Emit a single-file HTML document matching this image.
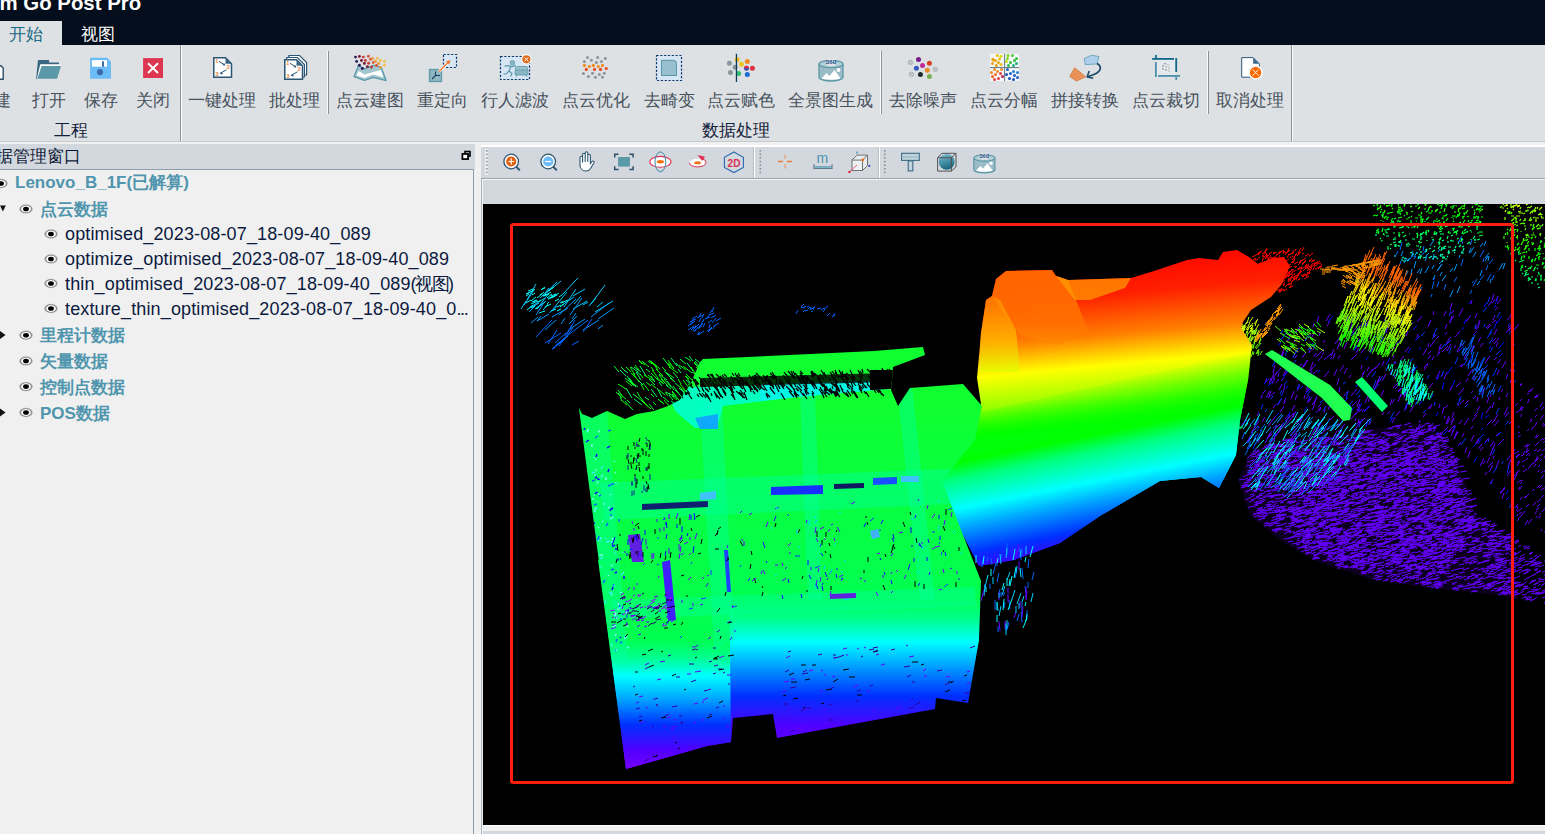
<!DOCTYPE html>
<html><head><meta charset="utf-8">
<style>
*{box-sizing:border-box;margin:0;padding:0}
html,body{width:1545px;height:834px;overflow:hidden;background:#f0f0f0;font-family:"Liberation Sans",sans-serif;position:relative}
.abs{position:absolute}
#title{left:0;top:0;width:1545px;height:45px;background:#050e1c}
#ttxt{left:-0.5px;top:-7.6px;color:#fff;font-weight:bold;font-size:20.4px;white-space:nowrap}
#tab1{left:0;top:21px;width:62px;height:24px;background:#dee1e4}
.tabt{font-size:17px;white-space:nowrap;line-height:20px}
#ribbon{left:0;top:45px;width:1545px;height:96px;background:#dee1e4}
.lbl{position:absolute;font-size:17px;color:#47525d;white-space:nowrap;line-height:20px;top:91px;transform:translateX(-50%)}
.glbl{position:absolute;font-size:17px;color:#13223a;white-space:nowrap;line-height:20px;top:121px;transform:translateX(-50%)}
.sep{position:absolute;width:1px;background:#8f9294;box-shadow:-1px 0 0 #fafafa}
.ico{position:absolute;width:32px;height:32px;top:52px}
#panelhdr{left:0;top:144px;width:475px;height:25px;background:#d3d8df}
#tree{left:0;top:169px;width:474px;height:665px;background:#f0f0f0;border-top:1px solid #8d9eab;border-right:1px solid #8d9eab}
.row{position:absolute;white-space:nowrap;line-height:20px}
.bold{font-weight:bold;color:#4f95ad;font-size:17px}
.child{color:#0b1a3e;font-size:18px;letter-spacing:0.14px}
.eye{position:absolute;width:14px;height:10px}
#vtool{left:481px;top:145px;width:1064px;height:34px;background:#d3d8df;border-top:2px solid #fff;border-bottom:1px solid #9aa4ac}
#vstrip{left:481px;top:179px;width:1064px;height:25px;background:#d3d8df;border-left:2px solid #aab5bd;border-top:1px solid #f5f6f7}
#view{left:483px;top:204px;width:1062px;height:621px;background:#000;overflow:hidden}
</style></head><body>
<div id="title" class="abs"></div>
<div id="ttxt" class="abs">m Go Post Pro</div>
<div id="tab1" class="abs"></div>
<div class="abs tabt" style="left:9px;top:25px;color:#1c6a87">开始</div>
<div class="abs tabt" style="left:81px;top:25px;color:#fff">视图</div>
<div id="ribbon" class="abs"></div>
<div class="abs" style="left:0;top:141px;width:1545px;height:1px;background:#c5cacf"></div>
<!-- labels -->
<div class="lbl" style="left:-6px">新建</div>
<div class="lbl" style="left:49px">打开</div>
<div class="lbl" style="left:101px">保存</div>
<div class="lbl" style="left:153px">关闭</div>
<div class="glbl" style="left:71px">工程</div>
<div class="lbl" style="left:222px">一键处理</div>
<div class="lbl" style="left:294px">批处理</div>
<div class="lbl" style="left:370px">点云建图</div>
<div class="lbl" style="left:442px">重定向</div>
<div class="lbl" style="left:515px">行人滤波</div>
<div class="lbl" style="left:596px">点云优化</div>
<div class="lbl" style="left:669px">去畸变</div>
<div class="lbl" style="left:741px">点云赋色</div>
<div class="lbl" style="left:830px">全景图生成</div>
<div class="glbl" style="left:736px">数据处理</div>
<div class="lbl" style="left:923px">去除噪声</div>
<div class="lbl" style="left:1004px">点云分幅</div>
<div class="lbl" style="left:1085px">拼接转换</div>
<div class="lbl" style="left:1166px">点云裁切</div>
<div class="lbl" style="left:1250px">取消处理</div>
<div class="sep" style="left:179.5px;top:45px;height:96px;box-shadow:1px 0 0 #fafafa"></div>
<div class="sep" style="left:328px;top:51px;height:63px"></div>
<div class="sep" style="left:881px;top:51px;height:63px"></div>
<div class="sep" style="left:1208px;top:51px;height:63px"></div>
<div class="sep" style="left:1291px;top:45px;height:96px;box-shadow:1px 0 0 #fafafa"></div>
<!-- ICONS --><!-- /ICONS -->
<!-- panel -->
<div id="panelhdr" class="abs"></div>
<div class="abs" style="left:-21.5px;top:147px;font-size:17px;line-height:20px;color:#0f1a38;white-space:nowrap">数据管理窗口</div>
<div id="tree" class="abs"></div>
<div class="row bold" style="left:15px;top:173px">Lenovo_B_1F(已解算)</div>
<div class="row bold" style="left:40px;top:200px">点云数据</div>
<div class="row child" style="left:65px;top:224px">optimised_2023-08-07_18-09-40_089</div>
<div class="row child" style="left:65px;top:249px">optimize_optimised_2023-08-07_18-09-40_089</div>
<div class="row child" style="left:65px;top:274px">thin_optimised_2023-08-07_18-09-40_089<span style="letter-spacing:-1.5px">(视图)</span></div>
<div class="row child" style="left:65px;top:299px">texture_thin_optimised_2023-08-07_18-09-40_0<span style="letter-spacing:-1.4px">...</span></div>
<div class="row bold" style="left:40px;top:326px">里程计数据</div>
<div class="row bold" style="left:40px;top:352px">矢量数据</div>
<div class="row bold" style="left:40px;top:378px">控制点数据</div>
<div class="row bold" style="left:40px;top:404px">POS数据</div>
<!-- view -->
<div id="vtool" class="abs"></div>
<div id="vstrip" class="abs"></div>
<div id="view" class="abs">
<!-- CLOUD --><svg width="1062" height="621" viewBox="483 204 1062 621" style="position:absolute;left:0;top:0"><defs>
<linearGradient id="g1" gradientUnits="userSpaceOnUse" x1="0" y1="400" x2="0" y2="770">
<stop offset="0" stop-color="#10ff30"/><stop offset="0.54" stop-color="#00ff50"/>
<stop offset="0.595" stop-color="#00ff90"/><stop offset="0.654" stop-color="#00ffff"/>
<stop offset="0.719" stop-color="#00a0ff"/><stop offset="0.8" stop-color="#0030ff"/>
<stop offset="0.881" stop-color="#5000ff"/><stop offset="1" stop-color="#7800ff"/>
</linearGradient>
<linearGradient id="g1L" gradientUnits="userSpaceOnUse" x1="0" y1="400" x2="0" y2="770">
<stop offset="0" stop-color="#10ff30"/><stop offset="0.649" stop-color="#00ff50"/>
<stop offset="0.697" stop-color="#00ff90"/><stop offset="0.746" stop-color="#00ffff"/>
<stop offset="0.811" stop-color="#00a0ff"/><stop offset="0.878" stop-color="#0030ff"/>
<stop offset="0.946" stop-color="#5000ff"/><stop offset="1" stop-color="#7800ff"/>
</linearGradient>
<linearGradient id="g2" gradientUnits="userSpaceOnUse" x1="1100" y1="250" x2="1128" y2="565">
<stop offset="0" stop-color="#ff0000"/><stop offset="0.143" stop-color="#ff2000"/>
<stop offset="0.27" stop-color="#ff8000"/><stop offset="0.365" stop-color="#ffff00"/>
<stop offset="0.46" stop-color="#a0ff00"/><stop offset="0.55" stop-color="#00ff00"/>
<stop offset="0.635" stop-color="#00ff80"/><stop offset="0.727" stop-color="#00ffff"/>
<stop offset="0.797" stop-color="#00a0ff"/><stop offset="0.879" stop-color="#0030ff"/>
<stop offset="0.94" stop-color="#4000ff"/><stop offset="1" stop-color="#7000ff"/>
</linearGradient>
<linearGradient id="groof" gradientUnits="userSpaceOnUse" x1="0" y1="270" x2="0" y2="345">
<stop offset="0" stop-color="#ff6e00"/><stop offset="0.7" stop-color="#ff7000"/><stop offset="1" stop-color="#ff8a00"/>
</linearGradient>
<linearGradient id="gface" gradientUnits="userSpaceOnUse" x1="0" y1="296" x2="0" y2="372">
<stop offset="0" stop-color="#ff9000"/><stop offset="0.6" stop-color="#ffc000"/><stop offset="1" stop-color="#e0ff00"/>
</linearGradient>
<linearGradient id="g2b" gradientUnits="userSpaceOnUse" x1="1100" y1="250" x2="1163" y2="565">
<stop offset="0.40" stop-color="#00ff00" stop-opacity="0"/><stop offset="0.56" stop-color="#00ff00"/>
<stop offset="0.614" stop-color="#00ff80"/><stop offset="0.703" stop-color="#00ffff"/>
<stop offset="0.766" stop-color="#00a0ff"/><stop offset="0.846" stop-color="#0030ff"/>
<stop offset="0.904" stop-color="#4000ff"/><stop offset="0.962" stop-color="#7000ff"/>
</linearGradient>
</defs>
<path d="M1406 213l1 -1M1442 226l1 -1M1421 221l1 -3M1384 218l3 -2M1387 214l2 -1M1436 219l2 -0M1446 207l1 -3M1439 213l2 -1M1463 213l4 -0M1373 206l2 -1M1411 217l1 -1M1460 209l2 -3M1444 224l1 -1M1479 210l1 -0M1400 212l3 -2M1399 213l0 -3M1421 224l2 -3M1415 224l1 -0M1468 227l3 -2M1453 222l1 -1M1475 205l3 -2M1420 220l4 -1M1420 222l2 -0M1436 225l1 -1M1389 213l4 -1M1467 217l2 -1M1398 210l2 -1M1458 217l0 -3M1384 219l2 -3M1437 205l2 -1M1462 217l3 -1M1479 212l1 -0M1412 226l1 -1M1456 206l1 -0M1476 205l2 -1M1377 206l1 -2M1400 209l2 -0M1398 218l4 -1M1411 212l2 -1M1443 216l2 -0M1377 210l2 -2M1380 213l1 -2M1452 216l4 -0M1394 227l1 -2M1455 206l0 -1M1441 209l1 -3M1455 213l0 -2M1427 223l2 -0M1435 225l1 -2M1453 207l0 -2M1444 222l1 -0M1452 218l0 -1M1415 218l3 -0M1404 207l1 -3M1478 217l0 -1M1386 206l3 -0M1417 205l2 -1M1439 206l2 -1M1389 204l3 -1M1463 219l0 -2M1373 216l3 -1M1391 221l2 -3M1387 218l2 -1M1478 210l3 -2M1418 215l3 -0M1444 225l0 -4M1443 219l1 -0M1441 206l2 -2M1384 205l1 -2M1391 207l1 -3M1452 209l2 -3M1474 219l0 -3M1437 222l3 -2M1459 216l1 -4M1428 213l4 -0M1481 217l2 -0M1464 207l1 -3M1480 207l3 -1M1446 221l2 -3M1406 219l2 -0M1397 212l1 -1M1392 206l0 -2M1440 212l1 -0M1432 212l0 -2M1387 220l0 -2M1445 216l1 -1M1425 205l0 -2M1400 215l1 -2M1428 211l1 -3M1478 217l1 -0M1401 211l1 -1M1475 218l2 -2M1476 221l3 -1M1430 213l1 -0" stroke="#00ff00" stroke-width="1.2" fill="none" opacity="1.0"/>
<path d="M1411 207l1 -1M1378 209l3 -2M1479 207l0 -2M1480 211l3 -2M1425 206l2 -3M1445 205l1 -1M1377 208l1 -0M1376 204l1 -0M1424 209l2 -0M1384 213l1 -3M1391 204l0 -1M1458 210l1 -1M1444 212l1 -4M1380 207l1 -2M1398 205l1 -2M1410 204l2 -1M1415 206l2 -0M1398 208l3 -1M1435 212l3 -3M1464 204l1 -3M1474 211l1 -1M1392 209l1 -1M1404 205l2 -2M1401 204l1 -3M1458 209l3 -1M1476 210l2 -2M1421 214l1 -1M1418 209l2 -2M1386 206l4 -1M1381 210l1 -1M1435 211l3 -2M1407 215l0 -3M1410 207l2 -1M1458 212l1 -3M1431 207l1 -0M1462 209l3 -1M1398 206l1 -0M1472 208l1 -2M1386 204l1 -2M1462 206l3 -0M1450 207l2 -0M1466 213l2 -3M1429 208l2 -2" stroke="#33ff00" stroke-width="1.2" fill="none" opacity="1.0"/>
<path d="M1395 240l0 -3M1420 236l1 -3M1401 228l3 -2M1467 244l2 -1M1477 230l0 -4M1426 235l1 -1M1451 236l2 -1M1456 233l2 -3M1420 240l2 -2M1421 235l3 -3M1477 227l3 -3M1440 234l4 -0M1468 243l2 -1M1436 235l1 -3M1470 244l1 -1M1439 241l1 -0M1400 243l1 -3M1428 231l1 -1M1471 232l1 -0M1420 248l1 -2M1399 242l2 -1M1399 237l1 -3M1443 248l2 -2M1399 243l0 -2M1408 228l1 -1M1401 224l0 -1M1399 247l0 -2M1477 240l3 -1M1457 239l2 -1M1461 242l0 -1M1432 240l2 -1M1418 242l2 -1M1439 232l3 -1M1383 235l1 -2M1441 227l1 -2M1395 242l1 -0M1433 224l1 -2M1427 241l0 -1M1396 247l0 -3M1461 241l1 -3M1458 244l1 -3M1415 227l0 -1M1393 227l2 -0M1450 241l2 -1M1388 249l0 -3M1434 235l1 -2M1447 227l0 -1M1395 247l0 -3M1460 227l1 -0M1461 241l2 -2M1464 231l2 -2M1439 240l2 -3M1466 232l2 -0M1419 243l3 -1M1447 239l1 -3M1438 243l1 -1M1390 245l2 -1M1382 241l0 -1M1409 234l1 -0M1467 232l1 -1M1445 227l1 -1M1386 230l4 -1M1425 222l0 -1M1393 225l0 -4M1390 249l1 -1M1380 239l1 -1M1439 245l1 -3M1416 246l3 -0M1412 239l3 -0M1406 245l3 -2M1435 234l1 -1M1441 251l1 -4M1474 240l2 -1" stroke="#00ff66" stroke-width="1.2" fill="none" opacity="1.0"/>
<path d="M1383 222l0 -1M1434 234l1 -3M1468 222l1 -2M1459 227l1 -1M1456 235l1 -2M1454 232l3 -1M1414 227l0 -3M1394 219l2 -1M1399 228l4 -1M1399 236l0 -4M1384 230l2 -0M1388 229l1 -1M1384 235l1 -0M1376 216l2 -1M1402 233l2 -1M1480 224l1 -3M1453 219l1 -0M1421 213l1 -1M1479 236l4 -1M1393 233l2 -0M1385 225l3 -1M1440 240l1 -2M1425 226l2 -2M1462 234l1 -3M1471 221l2 -1M1391 226l0 -4M1416 234l2 -1M1470 231l1 -1M1378 234l1 -2M1453 233l4 -1M1477 233l2 -0M1474 223l4 -1M1393 225l1 -3M1376 231l3 -2M1477 226l2 -1M1474 215l1 -3M1420 218l2 -2M1403 237l3 -2M1407 227l0 -3M1383 215l0 -3M1391 222l3 -1M1462 228l0 -2M1426 212l2 -1M1382 232l1 -4M1479 232l4 -0M1395 227l1 -3M1376 233l3 -2M1386 233l0 -2M1439 229l3 -3M1382 225l3 -1M1397 213l3 -0M1458 227l1 -0M1453 231l1 -2M1382 217l2 -0M1469 223l3 -1M1404 216l1 -1M1382 216l1 -0M1411 223l0 -3M1448 233l3 -0M1452 229l3 -1M1448 233l1 -2M1438 227l1 -3M1440 228l2 -3M1463 234l3 -2M1417 228l1 -2M1478 224l2 -3M1422 221l1 -1M1397 222l2 -2M1457 224l4 -1M1464 215l1 -2M1386 233l2 -0M1425 233l2 -3M1412 228l0 -1M1440 224l0 -2M1426 220l3 -3M1459 223l2 -1M1446 216l1 -2M1381 215l3 -0M1443 225l1 -3M1399 222l2 -1M1381 241l1 -0M1433 221l4 -0M1463 223l2 -3M1417 238l1 -4M1456 218l2 -3M1428 232l1 -1M1477 219l2 -2M1440 230l3 -2M1381 221l0 -1M1425 234l2 -2M1414 228l1 -2M1408 218l2 -1M1442 219l1 -2M1416 221l1 -0" stroke="#00ff32" stroke-width="1.2" fill="none" opacity="1.0"/>
<path d="M1393 243l2 -1M1386 236l3 -0M1462 247l2 -1M1421 238l0 -2M1445 249l0 -1M1406 246l3 -0M1475 241l0 -1M1451 241l3 -0M1440 247l0 -1M1426 252l1 -3M1459 247l2 -2M1395 257l0 -2M1420 259l1 -4M1442 255l1 -1M1445 259l2 -0M1462 253l0 -1M1417 254l0 -2M1442 257l3 -0M1471 240l0 -1M1398 246l0 -1M1452 251l4 -1M1388 250l0 -1M1475 243l0 -1M1432 238l0 -1M1393 240l1 -1M1448 253l1 -2M1419 250l1 -1M1448 243l0 -2M1448 254l2 -2M1448 247l3 -0M1409 245l1 -1M1425 250l2 -1M1412 255l2 -1M1455 248l1 -2M1444 247l2 -1M1434 247l1 -1M1448 253l1 -3M1405 240l2 -0M1410 253l2 -1M1438 249l2 -3M1419 255l1 -1M1429 249l2 -1M1432 252l3 -2M1473 239l2 -3M1442 258l3 -0M1434 257l1 -1M1442 241l2 -1M1463 251l1 -3M1376 236l0 -2M1419 257l3 -1" stroke="#00ff99" stroke-width="1.2" fill="none" opacity="1.0"/>
<path d="M1421 253l0 -2M1442 262l1 -2M1433 259l1 -2M1440 256l1 -2M1429 258l3 -2M1423 258l3 -1M1425 252l2 -1M1402 258l2 -1M1441 257l0 -3M1401 260l2 -0M1411 256l2 -0M1454 253l1 -1M1412 254l1 -1M1404 259l2 -1M1432 259l2 -0M1462 252l0 -1M1443 249l2 -1M1441 249l3 -0M1436 258l0 -2M1447 257l1 -1M1454 250l1 -1M1403 261l3 -0M1461 253l3 -0M1437 259l1 -1" stroke="#00ffcb" stroke-width="1.2" fill="none" opacity="1.0"/>
<path d="M1407 261l2 -2M1418 259l1 -3" stroke="#00ffff" stroke-width="1.2" fill="none" opacity="1.0"/>
<path d="M1538 258l2 -2M1535 251l0 -3M1543 264l1 -1M1537 249l4 -1M1529 251l0 -3M1508 250l1 -3M1540 255l0 -2M1517 239l1 -0M1507 235l1 -2M1538 254l1 -2M1505 247l1 -1M1529 259l0 -3M1543 254l0 -1M1543 268l3 -0M1531 239l1 -1M1535 260l1 -2M1510 239l3 -1M1539 260l0 -2M1534 261l2 -2M1515 248l1 -1M1526 253l1 -2M1544 244l2 -1M1544 248l1 -2M1543 259l2 -1M1536 265l3 -0M1517 238l1 -1M1524 258l1 -2M1521 267l2 -2M1517 250l3 -3M1540 243l2 -2M1536 256l3 -2" stroke="#00ff00" stroke-width="1.2" fill="none" opacity="1.0"/>
<path d="M1532 245l2 -2M1525 247l4 -2M1526 248l0 -3M1517 232l1 -3M1531 238l2 -1M1522 243l2 -3M1540 241l2 -0M1511 238l1 -2M1539 247l1 -2M1535 238l1 -2M1532 229l3 -2M1531 235l4 -0M1509 231l3 -1M1511 225l2 -2M1516 230l0 -1M1532 243l2 -0M1514 236l1 -2M1507 230l1 -1M1523 241l2 -1M1531 243l3 -0M1526 241l2 -2M1522 253l3 -1M1523 256l2 -0M1510 230l1 -2M1507 248l1 -3M1526 238l1 -1M1525 240l2 -0M1544 246l1 -1M1520 254l1 -1M1514 231l1 -2M1539 234l2 -0M1533 227l1 -3M1521 232l0 -1M1537 229l2 -1M1527 244l2 -3M1538 249l2 -3M1524 224l1 -1M1524 250l2 -3M1505 235l1 -2M1504 239l0 -3M1517 250l2 -1M1528 237l2 -0M1532 230l2 -2M1521 245l1 -2M1507 233l1 -1M1512 227l2 -1M1525 249l1 -1M1517 245l2 -2M1514 251l2 -2M1513 223l0 -1M1544 238l2 -0" stroke="#33ff00" stroke-width="1.2" fill="none" opacity="1.0"/>
<path d="M1514 225l2 -1M1533 218l2 -1M1541 215l0 -1M1520 220l1 -1M1526 212l0 -2M1500 208l2 -2M1523 221l3 -1M1516 219l1 -1M1526 235l2 -1M1516 220l0 -2M1516 226l2 -1M1538 215l3 -2M1523 224l1 -1M1526 236l3 -1M1531 226l0 -2M1508 214l0 -3M1511 214l1 -2M1534 212l1 -2M1537 229l4 -1M1542 215l0 -1M1536 227l3 -3M1524 226l2 -0M1516 219l1 -0M1511 216l3 -0M1513 220l2 -3M1507 243l0 -1M1520 221l0 -1M1525 235l1 -0M1539 226l3 -0M1503 225l1 -1M1511 221l3 -2M1525 230l1 -2M1527 211l1 -1M1512 228l1 -1M1526 211l3 -1M1540 228l1 -0M1529 221l2 -4M1533 233l1 -0M1520 224l3 -1M1540 236l1 -3M1531 212l3 -2M1523 214l2 -1M1516 223l0 -4M1523 240l1 -2M1542 226l1 -2M1509 214l1 -3M1512 233l3 -1M1516 238l2 -3M1539 210l1 -1M1509 213l3 -0M1507 209l1 -1M1513 224l1 -2" stroke="#65ff00" stroke-width="1.2" fill="none" opacity="1.0"/>
<path d="M1526 205l3 -2M1513 210l1 -1M1517 207l3 -1M1513 208l1 -3M1505 206l3 -1M1515 206l3 -3M1513 206l4 -1M1517 206l3 -1M1505 212l1 -2M1540 209l2 -2" stroke="#cbff00" stroke-width="1.2" fill="none" opacity="1.0"/>
<path d="M1535 218l4 -0M1529 208l3 -2M1531 204l3 -2M1530 221l2 -2M1505 218l0 -1M1503 205l1 -2M1511 208l0 -4M1515 218l1 -1M1539 215l2 -2M1518 212l3 -1M1530 214l1 -2M1502 208l2 -0M1520 209l1 -2M1516 222l2 -0M1534 211l2 -4M1511 208l2 -2M1537 209l1 -2M1505 220l0 -3M1532 213l1 -2M1527 208l2 -1M1545 207l2 -3M1516 216l4 -0M1535 212l1 -2M1506 205l2 -2M1504 206l1 -0M1525 220l0 -2M1541 218l3 -0M1541 217l1 -1M1519 213l4 -0M1540 215l1 -1M1512 220l1 -0M1536 222l0 -3" stroke="#99ff00" stroke-width="1.2" fill="none" opacity="1.0"/>
<path d="M1520 269l2 -0M1528 279l1 -2M1535 281l1 -2M1524 276l2 -1M1540 276l2 -1M1537 269l1 -1M1532 284l0 -2M1538 273l1 -1M1537 284l2 -0M1541 280l0 -4M1525 267l1 -1M1528 281l2 -3M1531 277l2 -0M1525 275l4 -1M1522 274l1 -1M1529 280l2 -1M1525 274l2 -2" stroke="#00ff66" stroke-width="1.2" fill="none" opacity="1.0"/>
<path d="M1533 271l2 -2M1521 268l2 -1M1518 253l2 -3M1540 280l2 -0M1531 262l2 -1M1542 265l1 -3M1525 271l3 -1M1521 271l0 -1M1522 261l2 -1M1539 251l2 -3M1536 281l0 -3M1534 269l2 -2M1510 254l3 -1M1531 261l2 -2M1544 281l1 -2M1515 261l1 -1M1528 269l3 -2M1521 260l1 -4M1537 276l1 -0M1544 267l2 -2M1530 269l1 -1M1525 272l0 -1M1531 267l1 -1M1519 255l0 -3M1539 275l0 -2M1519 262l3 -1" stroke="#00ff32" stroke-width="1.2" fill="none" opacity="1.0"/>
<path d="M1538 288l2 -1" stroke="#00ff99" stroke-width="1.2" fill="none" opacity="1.0"/>
<path d="M1417 273l3 -4M1442 281l4 -6M1469 253l2 -5M1425 261l2 -5M1414 257l3 -5M1414 268l2 -7M1459 258l1 -3M1432 269l2 -4M1485 258l4 -5M1480 247l3 -4M1406 275l2 -4M1426 256l3 -3M1450 272l3 -4M1438 252l2 -3M1503 269l2 -6M1437 271l4 -6M1470 253l4 -6M1430 246l4 -6M1488 261l1 -5M1439 264l3 -3M1408 261l2 -3M1484 246l2 -5M1480 276l2 -6M1457 293l3 -7M1440 276l2 -4M1401 256l2 -5M1412 256l1 -5M1450 297l3 -7M1420 274l2 -6M1433 280l2 -5M1499 270l4 -7M1404 263l3 -5M1477 285l3 -4M1411 275l1 -6M1425 273l4 -7M1473 257l3 -5M1485 261l3 -5M1433 259l1 -5M1490 283l1 -4M1438 270l4 -6M1454 271l3 -7M1416 281l1 -3" stroke="#0099ff" stroke-width="1.0" fill="none" opacity="1.0"/>
<path d="M1431 297l1 -3M1433 280l2 -2M1458 243l4 -7M1400 250l2 -8M1472 283l2 -2M1462 244l1 -3M1486 270l2 -5M1461 266l2 -7M1420 290l2 -3M1437 287l2 -6M1489 264l4 -5M1470 294l2 -4M1400 264l1 -3M1432 289l2 -8M1480 280l4 -5M1470 245l2 -5M1423 251l1 -5M1487 281l4 -7M1410 259l3 -4M1483 262l1 -4M1414 259l2 -3M1444 290l2 -6M1395 257l3 -6M1480 257l4 -7M1454 282l3 -5M1422 255l4 -5M1473 286l4 -7M1492 280l2 -5" stroke="#0066ff" stroke-width="1.0" fill="none" opacity="1.0"/>
<path d="M1475 329l5 -6M1487 463l3 -6M1410 412l4 -7M1507 476l4 -6M1266 398l4 -7M1392 403l3 -4M1505 417l4 -5M1309 338l2 -4M1267 439l3 -6M1510 316l2 -3M1302 358l4 -6M1493 459l1 -3M1392 423l3 -6M1512 367l3 -3M1378 318l3 -4M1474 416l4 -4M1490 456l3 -8M1398 402l3 -8M1351 323l2 -3M1366 426l2 -7M1451 425l3 -7M1438 353l3 -6M1262 422l3 -5M1450 323l2 -7M1492 300l2 -6M1305 341l4 -7M1274 360l3 -4M1433 432l3 -5M1494 426l5 -6M1461 312l2 -4M1437 356l3 -4M1496 468l3 -8M1322 355l2 -3M1394 378l1 -3M1485 475l2 -3M1362 374l3 -3M1293 417l3 -6M1306 363l1 -3M1316 357l5 -5M1432 360l2 -4M1372 371l4 -4M1273 428l4 -3M1297 381l2 -5M1388 325l5 -6M1258 443l2 -7M1276 383l3 -4M1366 325l4 -6M1357 407l3 -8M1366 326l4 -3M1313 374l5 -4M1446 424l3 -8M1389 353l6 -6M1417 322l5 -6M1312 410l3 -6M1476 444l3 -6M1287 342l3 -6M1312 405l5 -7M1428 347l1 -4M1371 350l1 -5M1297 391l3 -6M1410 405l3 -5M1313 327l1 -4M1514 330l5 -6M1312 337l3 -5M1492 323l4 -3M1449 339l2 -2M1487 425l5 -5M1420 391l1 -4M1430 347l5 -7M1457 351l5 -7M1393 388l5 -5M1444 379l3 -7M1370 373l3 -4M1456 387l5 -5M1471 441l3 -6M1359 423l6 -5M1457 352l3 -2M1506 333l4 -5M1481 373l1 -4M1471 393l2 -2M1275 429l5 -5M1496 347l2 -5M1382 415l2 -3M1487 329l4 -4M1468 458l2 -7M1355 415l5 -6M1386 333l2 -8M1480 451l3 -4M1352 406l5 -5M1284 402l2 -4M1475 445l4 -5M1354 321l1 -3M1490 447l4 -6M1293 417l1 -4M1281 357l3 -8M1492 408l2 -6M1465 453l2 -6M1340 341l5 -6M1452 433l3 -8M1310 370l3 -8M1349 378l2 -3M1295 333l4 -5M1285 419l5 -6M1480 347l3 -4M1488 306l4 -5M1446 344l3 -4M1502 368l4 -7M1334 376l3 -7M1268 398l7 -6M1344 349l3 -7M1445 335l2 -3M1303 366l5 -6M1410 383l3 -8M1479 380l1 -4M1307 402l3 -3M1318 361l4 -5M1392 351l2 -4M1362 412l2 -3M1398 391l3 -3M1513 374l2 -4M1344 396l4 -5M1333 411l4 -4M1302 430l3 -3M1362 377l2 -5M1429 388l4 -5M1395 389l3 -3M1485 363l5 -7M1493 320l2 -5M1480 466l4 -8M1433 337l2 -3M1506 379l2 -5M1436 339l3 -3M1489 472l4 -7M1409 374l5 -7M1492 423l3 -3M1473 380l2 -4M1339 426l4 -7M1262 394l4 -4M1405 394l1 -3M1277 361l6 -6M1445 329l2 -5M1319 411l2 -3M1442 376l1 -4M1319 336l1 -4M1454 439l4 -7M1306 392l3 -4M1447 351l4 -7M1494 335l3 -6M1487 403l2 -6M1406 336l2 -5M1509 331l4 -8M1403 339l2 -5M1396 345l2 -3M1486 413l5 -7M1287 335l5 -5M1292 411l3 -6M1442 352l6 -6M1376 385l5 -6M1494 344l5 -6M1447 342l3 -4M1355 344l5 -5M1338 359l2 -4M1317 322l2 -6M1465 404l4 -4M1459 316l2 -4M1399 343l3 -5M1327 326l3 -5M1387 355l2 -6M1394 364l1 -3M1306 399l3 -4M1273 379l4 -7M1504 415l4 -8M1340 404l3 -7M1285 375l5 -7M1361 369l1 -4M1428 354l3 -3M1363 342l2 -5M1279 360l5 -8M1314 404l3 -8M1420 432l2 -3M1492 303l3 -4M1464 359l2 -5M1472 421l5 -6M1508 467l3 -8M1433 315l1 -4M1344 374l3 -6M1451 436l3 -7M1423 417l3 -4M1339 392l1 -5M1302 417l3 -4M1265 383l2 -5M1428 409l2 -3M1507 460l5 -6M1269 437l3 -3M1427 366l1 -3M1511 397l2 -4M1494 421l4 -7M1351 419l5 -6M1355 349l6 -6M1356 335l5 -7M1362 341l1 -4M1423 355l4 -7M1377 383l2 -4M1365 403l3 -7M1359 412l3 -3M1352 333l4 -5M1293 429l5 -5M1471 304l1 -4M1485 442l4 -4M1416 431l1 -4M1331 356l3 -7M1273 408l3 -4M1309 353l2 -5M1478 325l2 -5M1450 391l2 -5M1429 429l4 -6M1502 499l2 -6M1271 381l3 -8M1318 407l3 -3M1481 395l4 -8M1367 371l2 -4M1360 327l3 -4M1351 396l6 -7M1261 399l1 -4M1295 333l5 -6M1398 392l4 -4M1490 397l1 -3M1357 411l3 -7M1283 404l3 -3M1506 397l2 -4M1478 449l4 -5M1384 321l3 -4M1280 412l4 -6M1436 379l4 -8M1278 405l3 -6M1375 369l5 -6M1390 405l2 -6M1439 349l2 -5M1330 359l2 -2M1308 403l4 -6M1356 353l3 -5M1404 411l3 -4M1378 332l5 -7M1458 446l3 -4M1464 425l5 -7M1368 402l2 -5M1486 328l4 -4M1300 373l2 -5M1417 338l1 -4M1483 464l2 -3M1405 352l4 -5M1458 395l6 -7M1471 429l2 -3M1364 411l6 -5M1450 310l2 -7M1466 322l5 -7M1291 399l3 -8M1497 304l4 -5M1355 421l1 -3M1269 384l2 -6M1403 327l2 -6M1291 368l1 -3M1454 439l3 -8M1508 328l5 -5M1400 361l4 -5M1412 382l5 -5M1428 327l3 -7M1493 449l2 -6M1278 377l1 -4M1496 301l2 -5M1481 390l2 -3M1303 429l3 -4M1460 367l2 -3M1369 425l2 -4M1377 384l3 -8M1419 423l1 -3M1424 368l3 -4M1466 382l2 -4M1274 440l1 -5M1364 386l3 -4M1404 398l1 -5M1337 385l2 -7M1509 424l2 -2M1382 366l2 -5M1488 467l5 -5M1451 314l3 -4M1276 374l5 -6M1348 410l2 -4M1510 383l1 -3M1381 396l3 -6M1454 348l2 -3M1462 437l2 -4M1302 368l2 -3M1492 342l4 -4M1316 413l5 -6M1335 344l5 -7M1324 413l1 -4M1281 381l3 -3M1382 381l4 -7M1459 424l3 -4M1314 357l2 -4M1430 409l2 -5M1275 437l1 -4M1404 374l4 -4M1448 432l6 -6M1300 423l2 -5M1330 420l4 -4M1442 433l6 -6M1498 445l6 -6M1494 360l3 -3M1428 359l3 -4M1346 322l2 -6M1511 347l4 -3M1306 390l3 -6M1455 337l5 -6M1405 409l3 -6M1387 414l3 -3M1507 320l6 -5M1498 363l3 -4M1367 326l5 -6M1280 431l2 -7M1496 436l5 -4M1310 375l2 -4M1442 414l2 -7M1279 390l3 -6M1473 399l3 -3M1294 342l3 -3M1351 360l6 -6M1514 480l3 -6M1297 374l3 -6M1328 410l4 -8M1447 424l3 -6M1478 342l3 -5M1324 360l7 -6M1272 384l3 -6M1501 392l2 -3M1424 370l3 -3M1298 367l4 -3M1273 373l2 -8M1452 418l2 -6M1290 372l1 -3M1283 376l4 -8M1340 371l4 -6M1451 422l3 -4M1461 367l3 -3M1313 350l3 -7M1471 351l4 -5M1439 408l1 -4M1355 425l5 -4M1490 484l3 -5M1283 393l2 -8M1309 349l4 -3M1295 400l2 -5M1337 428l2 -5M1500 494l5 -6M1477 402l1 -5M1500 493l5 -6M1396 416l4 -5M1342 332l7 -6M1369 352l5 -5M1497 375l2 -5M1358 423l1 -4M1468 376l5 -7M1449 432l2 -2M1320 353l4 -4M1510 371l4 -5M1460 404l4 -4M1475 318l2 -5M1350 330l2 -6M1326 321l4 -7M1337 349l3 -7M1477 411l3 -5M1304 376l1 -3M1374 389l3 -5M1257 416l2 -4M1393 358l1 -3M1333 359l2 -6M1269 397l2 -6M1458 406l1 -3M1386 352l1 -3M1310 371l6 -7M1303 367l3 -3M1304 399l1 -4M1352 320l5 -4M1361 353l4 -5M1295 358l2 -3M1418 429l2 -5M1444 419l1 -3M1473 335l4 -4M1351 345l3 -3M1476 330l3 -4M1445 408l3 -3M1371 345l3 -8M1499 400l1 -3M1295 376l6 -6M1323 343l2 -3M1312 384l6 -5M1449 323l5 -7M1390 375l2 -5M1495 310l3 -3M1400 397l5 -6M1444 316l2 -5M1514 476l5 -5M1381 410l2 -4M1329 408l6 -6M1367 377l3 -5M1413 401l2 -3M1324 377l5 -6M1471 352l3 -7" stroke="#6500ff" stroke-width="1.0" fill="none" opacity="1.0"/>
<path d="M1436 435l2 -3M1308 401l2 -5M1506 494l2 -4M1365 330l5 -5M1485 418l4 -3M1288 416l2 -4M1305 394l6 -6M1364 326l2 -6M1268 386l5 -5M1278 346l3 -4M1377 340l5 -4M1348 415l3 -5M1513 441l1 -3M1286 389l2 -3M1481 430l2 -2M1337 410l5 -5M1459 351l5 -5M1494 329l3 -8M1437 380l2 -5M1253 449l3 -7M1481 419l2 -7M1401 323l4 -7M1478 444l3 -5M1453 430l3 -4M1366 360l2 -3M1419 405l3 -4M1506 500l3 -3M1442 390l2 -8M1403 372l3 -6M1304 412l3 -5M1346 329l2 -5M1283 378l5 -8M1415 341l5 -5M1314 429l2 -3M1264 384l5 -5M1364 412l5 -6M1276 416l3 -3M1413 330l4 -5M1498 349l6 -7M1350 414l4 -7M1408 353l3 -5M1462 330l2 -3M1356 387l2 -3M1473 447l3 -3M1320 388l5 -5M1499 357l4 -4M1416 390l2 -6M1343 403l5 -5M1413 373l4 -7M1436 416l2 -4M1354 351l3 -6M1469 363l3 -7M1484 307l2 -4M1357 330l2 -4M1447 374l5 -7M1381 338l2 -2M1362 347l2 -5M1358 411l4 -8M1391 333l1 -4M1293 357l4 -7M1452 387l3 -7M1328 322l5 -6M1386 365l4 -7M1296 353l3 -5M1469 304l2 -3M1384 335l2 -7M1390 422l3 -5M1494 308l2 -3M1497 323l5 -7M1318 373l2 -3M1419 350l2 -3M1464 324l2 -5M1254 440l3 -5M1474 462l3 -5M1443 435l5 -5M1484 444l3 -3M1495 304l3 -6M1489 349l2 -3M1366 427l2 -7" stroke="#0000ff" stroke-width="1.0" fill="none" opacity="1.0"/>
<path d="M1483 312l4 -5M1300 389l3 -3M1487 304l3 -7M1410 326l3 -4M1310 386l3 -7M1373 388l3 -8M1394 364l2 -2M1491 484l1 -3M1351 336l6 -6M1496 414l3 -6M1317 387l2 -4M1489 335l3 -6M1475 329l1 -5M1277 405l5 -7M1488 442l1 -3M1317 425l3 -3M1423 413l3 -3M1421 336l4 -4M1273 355l3 -3M1274 437l2 -4M1441 349l4 -5M1370 342l6 -6M1498 392l3 -6M1497 436l4 -4M1409 364l4 -6M1449 354l2 -7M1487 338l5 -6M1509 508l3 -5M1305 380l5 -7M1363 320l4 -7M1489 344l4 -6M1343 384l3 -2M1457 405l4 -6M1356 395l4 -5M1289 350l3 -3M1261 409l2 -5M1358 398l2 -3M1271 399l2 -3M1464 365l4 -7M1283 363l3 -6M1434 406l1 -4M1427 379l2 -4M1333 425l4 -4M1386 371l2 -5M1257 431l2 -5M1512 437l2 -4M1449 316l2 -5M1291 367l5 -7M1405 410l2 -7M1265 412l2 -3M1478 440l6 -6M1272 367l4 -7M1323 411l3 -5M1379 381l4 -5M1511 386l5 -6M1459 401l2 -5M1480 364l4 -6M1507 473l2 -8M1346 399l2 -8M1497 318l3 -6M1256 436l2 -3M1370 353l3 -4M1372 377l4 -6M1286 422l4 -7M1455 364l3 -7M1348 406l5 -5M1297 389l2 -5M1492 455l3 -6M1280 394l2 -4M1324 429l3 -4M1484 327l1 -3M1432 339l5 -5M1349 408l2 -3M1461 445l5 -7M1415 405l3 -5M1293 358l3 -7M1284 385l3 -4M1281 396l2 -3M1374 390l5 -6M1359 427l3 -8M1466 366l5 -4M1363 327l4 -3M1320 403l5 -5M1441 377l3 -6M1493 376l4 -8M1281 333l2 -3M1379 344l5 -7M1304 376l2 -4M1445 346l6 -6M1508 326l2 -3M1490 352l3 -5M1431 398l2 -4M1509 334l2 -3M1496 355l5 -5M1483 370l5 -5M1392 329l5 -5M1369 424l2 -6M1374 319l3 -4M1390 419l4 -7M1307 395l4 -5M1493 473l4 -6M1465 407l3 -3M1320 423l4 -5M1285 356l3 -8M1416 400l1 -3M1281 340l5 -7M1502 464l1 -3M1321 386l2 -6M1505 425l4 -4M1308 350l5 -7M1305 341l3 -5M1433 336l4 -8" stroke="#0033ff" stroke-width="1.0" fill="none" opacity="1.0"/>
<path d="M1478 375l5 -7M1472 379l5 -8M1472 357l2 -5M1468 369l1 -5M1487 383l2 -4M1468 349l2 -4M1479 392l4 -6M1481 392l2 -7M1464 354l4 -6M1480 368l2 -4M1493 395l1 -4M1472 367l4 -7M1477 387l3 -5M1460 345l3 -5M1477 372l4 -6M1475 360l3 -8M1462 346l3 -5M1482 398l2 -9M1462 353l4 -6M1481 391l2 -3M1480 377l2 -7M1462 353l2 -4M1462 355l2 -7M1479 391l3 -6M1476 383l4 -6M1471 355l3 -9M1474 381l3 -5M1487 381l2 -4M1466 355l4 -6M1479 395l4 -9M1475 371l3 -6M1477 369l2 -8M1484 376l3 -6M1460 347l2 -7M1492 392l3 -8M1470 349l2 -4M1482 379l3 -8M1468 365l2 -5M1469 345l4 -8M1484 377l3 -7M1479 371l2 -7M1472 373l3 -5M1482 376l2 -5M1486 390l3 -6M1471 345l2 -8M1476 373l1 -4M1478 370l3 -5M1493 394l2 -5M1471 344l4 -9M1472 366l3 -7M1490 394l2 -4M1487 379l2 -4M1471 368l1 -5M1479 384l5 -7M1487 397l3 -7M1489 388l3 -7M1465 360l4 -8M1471 363l2 -7M1481 366l4 -9M1463 356l4 -8" stroke="#0066ff" stroke-width="1.0" fill="none" opacity="1.0"/>
<path d="M1527 447l3 -3M1520 401l2 -2M1535 438l2 -3M1527 431l2 -2M1535 446l2 -2M1528 469l3 -4M1527 394l2 -1M1520 409l2 -3M1542 417l2 -2M1518 489l2 -2M1539 488l3 -3M1534 451l3 -2M1543 440l2 -2M1538 518l3 -2M1530 420l2 -1M1535 461l3 -5M1541 531l1 -2M1541 479l2 -3M1527 403l2 -2M1518 519l4 -4M1523 472l4 -3M1520 484l2 -2M1516 458l4 -4M1520 410l4 -3M1521 481l2 -1M1536 460l3 -2M1543 443l3 -3M1541 473l2 -2M1540 441l3 -3M1520 385l2 -2M1515 406l3 -3M1545 486l1 -1M1544 458l1 -2M1540 456l3 -2M1516 473l4 -3M1519 490l3 -4M1543 427l2 -3M1542 512l3 -4M1544 532l4 -3M1535 514l2 -3M1526 507l3 -3M1514 454l5 -3M1517 521l2 -2M1537 488l3 -3M1530 466l3 -3M1535 398l4 -4M1538 467l2 -2M1517 466l3 -5M1520 500l2 -3M1541 410l3 -3M1537 452l4 -3M1526 447l3 -2M1536 438l3 -3M1523 467l1 -2M1516 413l4 -3M1522 462l3 -2M1542 451l4 -3M1517 463l2 -2M1531 430l3 -4M1542 477l2 -2M1536 510l3 -2M1523 455l2 -4M1537 502l4 -3M1526 456l3 -3M1519 514l3 -2M1520 386l2 -2M1518 437l3 -2M1525 498l4 -4M1540 407l3 -5M1532 464l3 -2M1521 411l2 -2M1538 472l1 -2M1540 461l2 -2M1536 445l3 -3M1518 428l1 -2M1534 467l2 -3M1529 456l1 -2M1530 422l2 -2M1520 417l2 -3M1541 498l3 -3M1534 398l3 -3M1535 426l2 -4M1516 511l2 -3M1536 518l1 -2M1540 420l3 -4M1528 524l4 -5M1544 472l3 -4M1526 460l2 -2M1522 515l3 -4M1535 462l3 -3M1514 451l1 -2M1528 392l4 -3M1515 508l3 -4M1526 452l2 -4M1535 398l3 -2M1517 512l5 -4M1535 411l2 -3M1530 392l3 -4M1532 491l2 -2M1524 498l2 -2M1521 456l2 -1M1528 401l1 -2M1537 507l3 -3M1545 479l4 -4M1524 447l4 -3M1541 490l5 -3M1536 461l1 -2M1533 506l3 -4M1516 457l3 -3M1526 453l3 -3M1542 425l2 -2M1517 516l1 -2M1525 525l3 -5M1545 429l3 -2M1522 456l2 -2M1518 433l2 -1M1517 508l1 -2M1539 515l2 -2M1517 483l4 -3M1535 417l2 -2" stroke="#6500ff" stroke-width="1.0" fill="none" opacity="1.0"/>
<polygon points="1238,480 1250,453 1284,438 1334,438 1384,427 1430,423 1449,446 1469,492 1476,515 1507,538 1518,599 1499,595 1430,588 1373,580 1315,561 1277,538 1250,515" fill="#5a00c8" opacity="0.15"/>
<path d="M1482 534l6 -2M1332 532l4 -2M1446 520l4 -1M1366 492l7 -2M1297 512l6 -2M1491 591l3 -1M1458 543l4 -1M1318 461l5 -2M1444 488l7 -2M1454 474l5 -2M1463 479l7 -1M1361 487l5 -2M1495 558l5 -1M1254 479l6 -3M1353 466l4 -1M1439 556l4 -2M1421 520l4 -0M1415 553l6 -2M1447 566l4 -1M1441 460l3 -1M1283 448l7 -2M1392 445l7 -3M1316 460l6 -2M1404 551l6 -1M1417 545l7 -1M1446 504l7 -3M1391 496l5 -1M1478 563l6 -1M1382 554l5 -2M1495 547l3 -1M1279 520l6 -2M1401 528l3 -1M1323 494l4 -2M1388 436l6 -1M1490 527l6 -2M1386 565l7 -1M1436 588l7 -2M1444 561l3 -0M1270 476l5 -2M1384 457l3 -0M1438 563l6 -2M1259 520l6 -3M1305 514l4 -2M1407 468l5 -1M1254 492l3 -1M1350 512l7 -2M1345 548l6 -1M1407 571l4 -0M1261 515l6 -2M1299 456l7 -1M1503 590l4 -1M1457 586l6 -1M1396 581l6 -3M1444 449l5 -2M1506 591l6 -2M1504 561l7 -1M1413 545l4 -1M1424 439l7 -3M1403 464l7 -1M1374 497l5 -0M1465 563l5 -1M1355 568l3 -1M1394 436l5 -2M1360 471l4 -1M1457 479l4 -1M1329 457l7 -2M1373 461l4 -1M1281 502l7 -3M1414 528l7 -2M1326 541l3 -1M1255 467l8 -1M1511 564l3 -1M1499 539l6 -2M1405 462l7 -1M1269 502l5 -1M1309 548l5 -1M1437 461l6 -1M1439 479l7 -2M1375 446l6 -3M1386 475l6 -1M1384 463l3 -1M1374 530l5 -2M1389 571l7 -2M1449 492l7 -2M1328 551l7 -1M1345 543l4 -2M1345 559l5 -2M1379 552l3 -1M1416 567l4 -1M1279 463l8 -1M1431 514l6 -2M1355 547l4 -1M1302 537l7 -1M1403 550l3 -1M1432 533l4 -0M1371 435l6 -1M1301 453l4 -1M1428 426l5 -1M1359 487l7 -3M1356 536l6 -1M1433 557l6 -1M1268 476l4 -2M1412 487l7 -1M1340 462l5 -2M1370 565l7 -1M1356 564l6 -3M1495 591l5 -1M1334 478l4 -1M1242 486l6 -2M1375 439l6 -3M1449 451l4 -1M1428 580l6 -1M1343 542l7 -2M1345 485l6 -1M1450 473l7 -2M1439 556l3 -1M1440 461l5 -1M1459 565l5 -1M1511 583l7 -1M1410 557l4 -1M1341 561l6 -2M1419 569l5 -2M1347 551l4 -2M1281 459l4 -1M1459 521l4 -1M1378 462l7 -1M1443 539l6 -3M1290 518l4 -1M1418 458l3 -1M1430 520l3 -1M1411 495l7 -3M1353 524l3 -1M1325 467l4 -0M1430 503l3 -0M1337 541l3 -0M1441 447l6 -1M1315 450l5 -1M1499 576l3 -1M1402 513l5 -2M1498 563l5 -2M1334 499l4 -1M1494 551l4 -1M1400 559l5 -1M1305 535l5 -2M1498 591l7 -3M1348 503l5 -1M1264 492l7 -1M1385 525l6 -1M1462 550l4 -1M1318 553l7 -3M1376 487l6 -1M1430 506l5 -2M1388 526l7 -2M1379 519l3 -1M1363 451l5 -2M1445 533l3 -1M1495 544l7 -1M1276 454l5 -1M1380 574l5 -2M1472 542l7 -3M1489 572l5 -1M1344 468l4 -0M1297 539l3 -1M1446 473l3 -1M1405 534l6 -1M1405 473l5 -2M1432 551l3 -1M1451 457l3 -0M1326 490l7 -1M1335 529l8 -1M1430 537l7 -3M1425 440l6 -1M1490 532l6 -1M1488 550l7 -2M1448 519l4 -0M1335 491l7 -3M1363 517l7 -3M1396 557l6 -2M1430 452l7 -3M1370 568l6 -3M1380 495l3 -0M1390 482l5 -1M1279 516l7 -1M1410 456l7 -2M1465 492l6 -2M1515 587l7 -2M1351 510l7 -2M1451 458l3 -1M1385 457l6 -1M1403 546l5 -1M1409 557l4 -1M1271 482l7 -1M1433 455l7 -2M1495 547l6 -1M1386 571l6 -1M1356 525l7 -2M1306 544l4 -2M1427 574l7 -1M1311 481l7 -1M1384 449l4 -1M1463 570l6 -2M1455 521l3 -1M1344 541l7 -3M1452 472l6 -1M1426 527l5 -1M1332 476l3 -0M1358 529l3 -0M1455 505l6 -1M1318 486l4 -1M1312 548l4 -1M1303 491l5 -1M1435 450l4 -1M1353 533l4 -2M1336 505l6 -2M1334 545l5 -2M1330 545l4 -1M1385 493l5 -1M1334 454l5 -2M1464 517l3 -1M1397 500l4 -0M1400 471l5 -1M1361 501l6 -3M1300 473l5 -1M1266 524l4 -1M1257 489l3 -1M1257 486l5 -2M1443 441l3 -1M1297 541l3 -1M1335 520l5 -1M1332 505l7 -2M1427 539l5 -1M1380 452l4 -1M1499 545l5 -2M1417 537l7 -1M1341 512l3 -1M1492 541l5 -1M1341 459l6 -1M1350 467l5 -1M1353 443l7 -1M1414 474l6 -3M1328 506l4 -1M1264 475l4 -1M1471 542l8 -1M1466 563l6 -1M1415 529l7 -2M1337 510l4 -1M1472 538l5 -0M1275 512l5 -2M1250 474l5 -2M1447 577l7 -1M1285 440l7 -1M1468 552l6 -1M1279 445l4 -1M1433 557l4 -0M1401 437l5 -2M1467 538l5 -2M1396 503l6 -2M1343 448l6 -3M1282 510l5 -1M1297 473l4 -2M1380 486l4 -2M1245 500l5 -2M1429 469l3 -1M1353 484l7 -3M1489 537l5 -1M1281 512l7 -2M1321 502l4 -2M1420 482l5 -2M1441 524l5 -2M1326 502l5 -2M1385 508l3 -1M1397 517l5 -2M1509 574l5 -1M1340 461l5 -2M1448 513l5 -2M1394 441l7 -2M1451 464l7 -2M1405 559l7 -1M1289 512l4 -1M1351 557l5 -2M1279 530l4 -1M1425 461l6 -2M1394 539l7 -2M1292 466l4 -1M1359 461l5 -2M1372 460l7 -1M1358 493l3 -1M1467 584l3 -1M1350 554l4 -1M1300 530l4 -1M1451 500l4 -1M1328 503l3 -0M1353 444l6 -1M1302 451l7 -2M1392 500l4 -2M1471 585l5 -1M1313 511l6 -2M1297 469l4 -1M1274 523l3 -1M1314 467l7 -3M1409 538l7 -3M1323 529l3 -1M1439 510l4 -2M1408 559l7 -1M1470 520l4 -1M1355 526l4 -2M1396 532l7 -2M1359 531l4 -1M1276 515l4 -1M1404 542l7 -2M1439 484l6 -2M1400 527l7 -2M1310 476l6 -1M1340 444l4 -1M1300 498l4 -2M1505 582l7 -1M1459 483l4 -2M1285 471l4 -2M1398 476l4 -0M1506 592l8 -1M1384 542l7 -1M1318 442l4 -1M1499 583l5 -2M1410 579l5 -1M1369 532l4 -1M1510 566l7 -3M1261 462l3 -1M1460 546l4 -1M1330 530l7 -3M1333 537l6 -2M1346 549l4 -1M1330 472l6 -1M1385 520l6 -1M1306 511l3 -1M1428 444l4 -1M1342 462l8 -1M1449 540l7 -2M1359 543l7 -3M1448 463l6 -1M1402 493l3 -0M1466 527l6 -2M1402 483l5 -2M1333 533l7 -2M1402 540l5 -1M1466 521l4 -1M1395 438l6 -3M1396 485l6 -2M1452 492l4 -1M1454 493l5 -2M1260 491l4 -1M1318 492l3 -1M1387 469l6 -1M1288 464l6 -2M1425 476l7 -2M1440 559l5 -1M1328 485l7 -3M1380 511l3 -1M1339 545l4 -1M1320 513l4 -1M1376 513l8 -2M1338 539l4 -1M1499 560l5 -1M1373 527l4 -0M1315 456l4 -2M1446 559l7 -2M1432 565l3 -1M1434 574l6 -3M1333 489l7 -1M1322 553l7 -1M1452 531l6 -3M1447 514l4 -1M1349 547l7 -2M1345 472l7 -1M1343 451l7 -1M1413 483l4 -1M1472 584l8 -2M1483 557l7 -2M1401 505l4 -1M1267 491l8 -2M1407 539l5 -1M1300 542l4 -1M1392 512l3 -1M1330 531l7 -2M1511 584l6 -1M1367 531l5 -1M1370 475l6 -1M1372 531l7 -3M1433 490l5 -1M1256 483l5 -1M1367 446l5 -2M1493 582l3 -1M1436 491l4 -1M1341 485l4 -2M1344 522l6 -2M1412 501l4 -1M1256 485l6 -1M1263 511l3 -1M1315 474l7 -2M1346 540l3 -0M1442 496l5 -2M1318 453l7 -1M1422 473l4 -1M1297 521l5 -1M1273 524l7 -1M1336 474l8 -2M1383 491l5 -1M1377 478l3 -1M1262 465l7 -3M1359 526l3 -1M1459 552l3 -1M1336 541l7 -1M1344 462l5 -1M1424 452l7 -2M1369 463l5 -1M1494 575l4 -0M1400 466l5 -2M1358 532l4 -1M1429 488l6 -1M1265 467l8 -2M1481 526l6 -2M1490 544l7 -1M1459 579l7 -3M1320 518l7 -3M1406 578l5 -1M1471 518l4 -2M1375 493l3 -1M1427 451l8 -2M1340 500l5 -2M1286 441l5 -1M1268 486l3 -1M1473 527l6 -1M1324 495l6 -1M1464 502l4 -1M1430 437l4 -1M1328 555l6 -2M1291 443l6 -2M1312 548l7 -2M1386 518l7 -2M1411 434l6 -3M1410 537l6 -3M1439 572l4 -1M1303 489l3 -1M1362 502l3 -1M1292 496l7 -1M1394 443l7 -2M1492 574l5 -2M1449 501l4 -2M1379 483l3 -2M1422 585l6 -1M1486 546l6 -2M1451 481l5 -1M1323 465l4 -1M1293 483l3 -2M1304 499l7 -1M1392 559l6 -1M1494 554l7 -1M1433 428l3 -1M1255 465l4 -0M1284 467l6 -1M1418 529l7 -1M1309 463l3 -1M1441 549l5 -1M1490 565l4 -1M1417 429l6 -3M1438 495l7 -2M1390 562l8 -1M1292 487l4 -2M1332 533l7 -1M1457 529l7 -1M1405 526l3 -1M1446 551l7 -2M1297 501l4 -1M1463 561l4 -0M1428 575l7 -2M1329 529l6 -2M1416 472l3 -1M1256 462l3 -0M1401 486l6 -2M1343 484l5 -2M1249 478l4 -2M1288 532l3 -1M1379 469l5 -1M1391 517l6 -3M1498 561l4 -2M1382 516l6 -1M1275 454l3 -1M1393 563l5 -1M1424 445l4 -1M1373 498l5 -2M1405 463l3 -1M1455 547l4 -1M1471 561l6 -2M1364 450l4 -2M1350 546l7 -2M1314 467l5 -1M1276 455l4 -1M1454 459l4 -1M1318 524l4 -1M1497 584l5 -2M1416 544l5 -2M1394 501l7 -1M1314 464l5 -1M1360 562l4 -1M1336 475l7 -3M1360 496l4 -2M1308 468l6 -1M1503 568l4 -1M1399 571l4 -1M1369 445l6 -2M1354 484l5 -2M1277 516l3 -1M1468 586l4 -2M1505 545l3 -1M1349 487l4 -1M1296 455l7 -3M1416 465l3 -1M1424 465l5 -1M1335 480l4 -1M1252 507l6 -2M1461 519l5 -2M1282 448l5 -1M1264 508l6 -2M1363 460l6 -1M1437 469l6 -1M1370 572l4 -2M1263 497l6 -3M1390 578l4 -2M1315 455l8 -1M1470 500l5 -1M1449 554l4 -1M1398 563l5 -2M1432 500l7 -2M1427 520l4 -2M1343 459l6 -1M1268 448l7 -2M1299 490l3 -1M1314 484l7 -1M1350 521l4 -2M1480 584l4 -1M1504 587l6 -1M1473 588l7 -1M1425 542l7 -3M1328 476l3 -1M1356 538l4 -1M1349 544l6 -2M1308 541l4 -1M1298 477l7 -1M1337 568l3 -0M1452 482l7 -3M1404 452l3 -1M1504 594l3 -1M1308 519l4 -2M1257 456l4 -1M1382 482l5 -1M1393 452l8 -2M1451 481l6 -3M1334 458l7 -2M1384 442l4 -2M1358 459l6 -1M1333 458l7 -3M1292 511l6 -3M1380 441l3 -1M1339 496l7 -2M1279 467l7 -3M1440 564l5 -2M1446 548l7 -2M1345 456l7 -2M1366 462l3 -2M1396 517l7 -2M1280 511l4 -1M1274 457l3 -1M1350 567l8 -1M1450 509l3 -1M1338 518l4 -1M1264 526l6 -1M1314 505l6 -1M1399 526l8 -2M1410 461l3 -1M1328 526l4 -2M1411 578l4 -2M1326 543l6 -1M1502 564l5 -2M1441 487l3 -1M1357 445l6 -3M1399 532l4 -1M1328 439l6 -1M1278 459l6 -2M1309 481l8 -2M1333 554l3 -1M1317 504l7 -1M1301 462l6 -2M1330 520l6 -3M1454 469l3 -1M1400 470l6 -1M1368 502l4 -1M1294 457l7 -2M1270 464l7 -3M1420 583l5 -1M1302 484l5 -2M1302 534l3 -1M1502 547l4 -1M1355 480l6 -1M1295 535l7 -1M1415 469l7 -2M1364 449l7 -1M1407 544l3 -1M1331 457l4 -1M1385 446l4 -1M1444 469l5 -2M1388 571l3 -1M1460 491l6 -3M1442 504l5 -1M1291 516l4 -1M1280 515l7 -1M1493 536l3 -0M1268 484l6 -3M1432 569l3 -1M1274 507l5 -2M1448 535l4 -1M1269 513l7 -1M1452 584l5 -2M1441 562l6 -3M1392 559l7 -1M1292 466l6 -2M1270 470l7 -3M1445 481l4 -1M1409 456l7 -2M1411 515l5 -2M1436 587l7 -3M1421 501l5 -1M1341 489l5 -2M1423 534l4 -1M1421 485l3 -1M1375 503l5 -2M1449 496l4 -1M1386 475l4 -1M1445 499l7 -1M1481 520l5 -2M1368 560l5 -2M1275 530l6 -2M1339 469l3 -1M1438 465l7 -2M1432 459l4 -1M1325 440l4 -1M1437 519l6 -3M1287 455l7 -3M1374 498l6 -2M1333 467l3 -1M1313 440l5 -2M1289 451l3 -1M1306 542l6 -2M1382 555l6 -1M1415 464l3 -1M1491 551l6 -2M1388 436l7 -3M1444 574l3 -1M1453 534l6 -1M1373 481l7 -3M1461 524l3 -2M1442 568l4 -0M1292 520l5 -1M1498 579l6 -1M1452 510l5 -1M1422 431l4 -2M1296 504l4 -1M1336 520l5 -1M1426 580l7 -1M1292 516l7 -3M1358 452l7 -2M1356 534l6 -2M1280 507l7 -1M1423 517l7 -2M1377 566l5 -1M1370 461l5 -2M1485 555l4 -1M1438 440l3 -0M1334 549l5 -1M1302 501l7 -1M1438 485l7 -2M1465 560l4 -0M1464 532l5 -2M1342 450l7 -2M1329 548l3 -1M1481 537l6 -2M1394 519l7 -2M1424 538l6 -1M1379 499l7 -1M1487 586l7 -3M1386 517l7 -3M1401 537l3 -1M1290 474l4 -2M1369 451l7 -3M1313 484l3 -1M1412 548l5 -0M1359 555l4 -1M1323 506l7 -2M1391 460l6 -2M1468 527l4 -1M1358 526l7 -1M1402 576l3 -1M1437 528l6 -3M1393 523l7 -1M1455 493l4 -2M1283 474l6 -3M1435 457l4 -2M1253 515l8 -3M1443 583l4 -0M1408 430l6 -1M1274 458l4 -2M1451 544l6 -2M1402 491l3 -1M1495 560l5 -1M1277 450l8 -1M1442 442l7 -1M1290 511l6 -1M1401 498l5 -1M1507 588l3 -1M1482 524l5 -1M1294 510l5 -2M1322 477l5 -1M1391 580l6 -2M1424 526l6 -1M1289 533l5 -2M1255 452l4 -2M1399 483l8 -2M1372 549l4 -1M1322 485l4 -2M1374 576l5 -1M1368 573l4 -1M1472 524l5 -1M1472 541l6 -1M1371 498l4 -1M1358 562l6 -1M1283 477l3 -1M1321 457l4 -1M1292 521l6 -2M1345 465l7 -2M1313 550l7 -2M1309 531l7 -3M1435 494l4 -1M1282 441l4 -1M1293 452l5 -1M1271 497l3 -0M1419 443l7 -2M1340 563l4 -1M1495 561l6 -2M1439 521l4 -1M1450 556l6 -2M1435 584l6 -2M1291 521l5 -1M1414 494l5 -2M1443 484l4 -2M1358 482l5 -2M1373 579l7 -2M1359 439l5 -1M1425 570l4 -1M1309 511l6 -2M1328 479l6 -2M1343 456l8 -2M1254 464l4 -0M1453 589l6 -1M1442 519l7 -1M1400 535l3 -1M1462 505l3 -1M1481 523l6 -1M1420 433l4 -1M1445 528l3 -1M1309 526l5 -0M1247 480l4 -1M1468 530l7 -3M1321 471l7 -2M1485 557l7 -3M1291 443l6 -2M1417 568l5 -1M1366 528l4 -1M1261 463l4 -2M1358 470l6 -1M1405 472l5 -1M1330 442l3 -1M1430 464l7 -2M1431 469l7 -2M1363 460l7 -3M1374 508l6 -2M1306 465l7 -1M1301 547l5 -2M1403 563l5 -1M1371 524l4 -1M1426 544l6 -1M1345 534l7 -2M1461 528l4 -2M1451 546l4 -1M1508 590l5 -1M1292 472l6 -2M1349 441l6 -1M1274 487l5 -1M1279 508l5 -1M1483 589l5 -2M1453 483l3 -1M1368 439l6 -2M1318 438l4 -1M1411 541l6 -1M1245 492l7 -3M1406 460l6 -3M1341 459l4 -1M1404 425l7 -2M1333 505l6 -3M1409 454l4 -1M1269 524l3 -1M1288 542l5 -1M1277 446l4 -1M1277 512l7 -2M1359 434l4 -1M1386 451l3 -1M1483 562l6 -1M1420 485l6 -3M1369 551l7 -3M1338 543l5 -1M1424 498l6 -1M1389 509l8 -1M1493 589l4 -1M1416 468l4 -2M1351 553l7 -1M1456 499l7 -1M1424 443l7 -2M1287 510l6 -1M1246 492l4 -2M1382 527l4 -1M1321 488l3 -1M1394 575l4 -0M1346 436l3 -1M1303 547l4 -1M1319 523l4 -1M1351 469l7 -2M1393 499l8 -1M1390 533l5 -1M1434 537l6 -1M1406 460l4 -1M1401 495l3 -1M1357 481l4 -2M1357 444l4 -1M1359 468l5 -2M1462 527l8 -2M1284 490l3 -0M1247 462l7 -2M1431 448l3 -1M1498 575l7 -3M1434 445l5 -1M1440 478l5 -1M1327 515l7 -1M1488 532l4 -2M1330 445l3 -1M1467 495l5 -2M1474 582l6 -1M1353 549l3 -0M1387 548l6 -2M1507 578l5 -1M1486 574l5 -1M1368 533l5 -1M1354 453l3 -1M1358 437l5 -2M1430 436l4 -1M1401 459l7 -1M1310 503l6 -1M1426 563l3 -1M1316 534l7 -2M1391 494l6 -2M1369 555l3 -1M1319 463l5 -1M1455 590l4 -0M1405 461l6 -1M1367 489l6 -2M1423 542l5 -1M1261 472l7 -2M1403 502l5 -2M1432 491l5 -1M1297 473l6 -2M1431 586l5 -2M1401 545l6 -2M1334 531l4 -1M1352 506l6 -3M1301 552l5 -2M1416 453l3 -1M1395 517l8 -1M1267 497l8 -1M1336 481l7 -2M1321 447l7 -1M1264 524l4 -2M1262 500l4 -0M1328 464l4 -0M1243 480l5 -2M1262 449l7 -3M1374 560l4 -2M1430 459l3 -0M1289 538l7 -3M1440 446l6 -3M1344 533l3 -1M1407 473l6 -1M1321 526l5 -1M1263 458l6 -2M1500 593l7 -1M1356 455l7 -1M1429 557l5 -1M1367 517l8 -1M1299 446l3 -1M1377 572l5 -2M1436 514l4 -1M1346 567l3 -0M1321 511l6 -1M1322 488l5 -1M1448 462l5 -1M1372 470l4 -1M1496 591l3 -1M1343 519l4 -0M1410 506l3 -1M1360 497l5 -1M1316 496l5 -2M1403 469l5 -1M1489 588l5 -2M1441 439l7 -2M1431 447l5 -1M1313 495l3 -1M1355 472l5 -1M1438 499l6 -2M1336 443l4 -1M1470 508l7 -3M1412 498l5 -1M1391 546l6 -2M1365 546l5 -2M1425 517l4 -1M1460 550l6 -1M1276 517l5 -1M1377 558l5 -1M1430 546l3 -1M1417 572l3 -1M1392 549l7 -3M1324 514l5 -1M1351 563l5 -1M1449 512l6 -1M1344 534l4 -1M1349 561l6 -2M1334 515l4 -1M1385 580l4 -1M1319 471l7 -1M1345 543l4 -1M1384 535l4 -2M1306 485l3 -1M1440 473l5 -1M1320 439l4 -1M1362 529l3 -1M1305 535l3 -1M1478 580l5 -2M1346 464l4 -1M1426 537l5 -2M1370 563l3 -1M1359 447l4 -2M1425 512l3 -1M1333 485l6 -3M1418 452l5 -1M1387 447l3 -0M1304 462l4 -1M1400 513l4 -2M1453 501l5 -2M1398 478l5 -1M1382 482l5 -1M1439 566l4 -0M1498 590l3 -1M1377 541l5 -2M1320 525l6 -2M1274 511l6 -2M1279 519l6 -2M1321 456l4 -1M1371 514l4 -2M1316 488l3 -1M1430 574l5 -1M1283 490l6 -3M1406 554l4 -1M1399 533l7 -1M1426 444l5 -2M1423 493l5 -2M1414 520l6 -2M1440 506l7 -3M1409 448l6 -3M1259 475l4 -1M1391 556l6 -2M1410 462l7 -3M1277 472l7 -1M1403 508l7 -2M1354 478l7 -1M1459 587l4 -1M1352 530l6 -2M1375 533l5 -1M1417 432l7 -2M1398 450l8 -1M1327 559l6 -2M1439 542l3 -0M1426 562l4 -1M1355 463l4 -0M1293 461l5 -1M1381 540l6 -2M1448 499l4 -1M1448 467l6 -3M1256 486l7 -2M1360 536l6 -2M1292 544l6 -1M1304 548l8 -2M1347 560l3 -1M1392 537l6 -2M1270 445l5 -1M1432 570l4 -0M1377 461l7 -3M1358 447l3 -0M1335 565l5 -1M1421 548l5 -1M1473 562l5 -1M1378 523l7 -1M1304 526l5 -2M1434 511l5 -1M1383 557l4 -1M1283 467l5 -2M1409 472l5 -2M1338 478l4 -1M1345 501l5 -2M1481 526l3 -1M1439 529l5 -1M1470 551l4 -0M1339 469l5 -1M1427 440l8 -1M1258 469l7 -1M1329 547l5 -1M1335 445l6 -2M1342 513l7 -2M1503 586l5 -2M1459 545l4 -1M1442 568l7 -2M1468 589l7 -3M1447 574l4 -1M1464 498l3 -1M1317 458l5 -1M1278 447l7 -1M1445 551l5 -2M1330 535l6 -2M1437 585l5 -1M1382 547l7 -1M1386 531l5 -1M1465 539l7 -3M1469 523l7 -2M1373 491l6 -1M1400 496l5 -2M1383 472l4 -2M1426 469l5 -1M1337 530l5 -1M1357 444l3 -2M1416 557l4 -1M1379 569l5 -2M1336 461l7 -2M1426 488l4 -1M1348 477l6 -2M1388 474l3 -1M1366 505l5 -1M1298 509l6 -2M1408 470l3 -1M1274 457l4 -1M1456 541l3 -1M1336 565l6 -2M1354 487l3 -1M1354 563l6 -1M1396 532l7 -1M1303 489l3 -1M1399 552l7 -2M1495 535l4 -1M1406 486l7 -2M1409 570l3 -1M1262 511l5 -1M1378 443l7 -2M1487 537l6 -2M1311 484l7 -2M1282 471l6 -1M1439 483l6 -1M1363 438l4 -1M1305 536l5 -2M1307 450l4 -1M1335 483l4 -1M1324 441l6 -2M1349 449l5 -2M1422 483l4 -1M1414 560l7 -1M1451 508l6 -1M1512 571l4 -2M1288 502l5 -1M1373 483l4 -1M1301 541l4 -1M1343 533l4 -1M1418 511l7 -2M1317 478l3 -1M1275 455l6 -1M1355 560l5 -1M1406 453l3 -1M1445 461l7 -2M1458 525l6 -1M1506 548l4 -1M1322 549l5 -2M1251 474l7 -1M1302 539l6 -2M1390 517l4 -2M1284 534l4 -2M1347 455l3 -0M1272 491l7 -1M1455 533l3 -1M1341 540l7 -2M1376 546l7 -2M1367 445l4 -1M1447 562l6 -2M1383 477l4 -0M1460 545l4 -1M1315 492l5 -2M1286 517l5 -1M1270 455l5 -1M1414 572l6 -1M1506 572l5 -1M1326 460l4 -1M1419 515l6 -1M1377 509l7 -3M1450 476l5 -1M1407 503l6 -2M1399 449l6 -3M1498 589l5 -1M1417 450l7 -1M1349 549l6 -1M1428 427l3 -1M1352 566l8 -2M1361 570l3 -2M1304 491l5 -2M1393 490l6 -2M1322 483l3 -1M1322 544l6 -2M1288 468l4 -1M1464 527l5 -1M1373 522l3 -1M1309 544l6 -2M1302 508l5 -2M1339 508l7 -2M1366 571l5 -1M1359 519l4 -1M1313 496l4 -1M1511 597l4 -1M1275 457l3 -1M1284 497l6 -3M1452 551l5 -2M1432 523l5 -2M1458 495l5 -1M1347 453l3 -1M1431 527l6 -2M1337 566l7 -2M1387 533l4 -0M1437 487l7 -2M1498 567l4 -2M1387 496l4 -2M1391 513l3 -1M1460 540l4 -1M1377 518l6 -1M1305 460l5 -2M1391 464l6 -2M1427 551l7 -3M1471 557l7 -1M1356 511l5 -1M1449 547l4 -0M1376 580l6 -1M1285 450l7 -1M1447 559l6 -2M1374 506l5 -2M1377 531l6 -3M1389 462l6 -3M1369 489l4 -2M1437 434l4 -1M1425 529l5 -0M1347 462l5 -1M1504 563l3 -0M1287 447l5 -1M1281 525l6 -2M1443 442l6 -3M1357 509l7 -1M1498 534l3 -1M1499 542l3 -1M1355 447l3 -1M1328 537l7 -3M1319 444l3 -1M1398 493l5 -1M1374 490l5 -2M1453 514l4 -1M1392 540l7 -2M1289 527l7 -3M1444 529l6 -2M1469 521l7 -1M1268 496l7 -1M1296 447l5 -1M1421 514l6 -2M1475 520l6 -2M1310 516l5 -1M1401 556l3 -0M1418 510l4 -1M1455 521l7 -2M1443 542l6 -2M1278 451l7 -1M1375 517l6 -2M1448 504l4 -2M1435 567l7 -2M1403 453l4 -1M1359 450l4 -2M1481 530l6 -1M1391 558l4 -0M1433 444l3 -1M1402 566l6 -1M1454 481l5 -2M1380 524l4 -2M1284 453l5 -2M1330 509l5 -1M1384 527l6 -2M1342 475l8 -1M1367 562l3 -1M1317 469l7 -2M1357 459l3 -1M1323 461l7 -2M1403 462l6 -2M1494 532l6 -1M1409 483l8 -1M1405 461l6 -2M1370 459l7 -2M1303 507l4 -2M1257 469l7 -2M1375 456l6 -2M1454 547l4 -2M1369 449l4 -0M1408 474l6 -2M1431 439l7 -3M1376 551l4 -2M1501 573l6 -1M1258 510l4 -2M1453 547l5 -2M1303 547l7 -3M1322 447l5 -2M1513 592l5 -2M1451 563l4 -2M1332 550l7 -1M1327 479l7 -1M1500 563l7 -3M1315 493l5 -1M1504 547l6 -3M1394 480l6 -3M1440 574l5 -2M1360 461l6 -3M1431 440l6 -1M1322 444l6 -3M1292 510l7 -1M1341 542l5 -3M1247 475l7 -2M1416 578l3 -1M1303 533l6 -1M1307 535l4 -1M1323 555l4 -2M1458 523l7 -2M1268 478l6 -2M1335 525l4 -1M1513 579l7 -3M1428 464l7 -3M1449 477l3 -2M1486 585l5 -1M1255 487l6 -1M1434 461l8 -2M1297 482l5 -1M1278 461l3 -0M1253 514l5 -1M1271 476l3 -1M1364 525l8 -1M1379 515l4 -1M1332 513l4 -1M1362 445l5 -1M1447 547l3 -1M1304 514l8 -2M1446 542l4 -0M1435 498l6 -2M1417 568l4 -1M1256 504l6 -1M1414 565l4 -1M1469 530l3 -1M1324 509l8 -2M1467 578l7 -3M1362 494l6 -1M1499 578l4 -1M1396 512l5 -2M1367 482l3 -1M1318 517l4 -1M1311 551l5 -2M1423 469l5 -1M1358 501l3 -1M1260 510l5 -1M1487 544l6 -2M1302 474l7 -1M1313 513l8 -1M1334 553l5 -2M1265 505l5 -1M1499 551l4 -1M1308 469l5 -2M1428 564l3 -1M1402 544l7 -2M1253 468l4 -0M1399 439l4 -1M1393 460l3 -0M1399 545l8 -1M1353 556l6 -2M1351 558l7 -2M1393 445l4 -1M1281 458l5 -2M1367 444l6 -1M1255 462l4 -1M1306 553l4 -1M1497 578l6 -1M1392 493l4 -1M1417 519l4 -1M1294 462l7 -3M1432 554l6 -1M1453 545l5 -1M1323 444l4 -1M1343 485l4 -1M1483 525l4 -1M1305 537l8 -1M1503 551l5 -2M1412 520l7 -2M1425 464l5 -0M1289 504l7 -3M1321 538l7 -3M1455 559l6 -1M1348 558l6 -1M1338 556l7 -1M1428 554l4 -1M1278 454l7 -3M1394 516l3 -1M1351 491l4 -1M1395 456l5 -2M1374 443l5 -1M1285 484l7 -2M1387 429l6 -1M1441 452l3 -1M1385 574l7 -1M1326 498l7 -1M1279 495l4 -1M1315 542l4 -2M1391 551l6 -2M1469 551l7 -3M1426 485l8 -1M1361 557l6 -3M1416 491l5 -1M1432 559l6 -1M1313 544l6 -2M1407 541l4 -0M1431 588l5 -2M1390 522l4 -1M1488 541l5 -1M1260 454l8 -2M1422 470l6 -2M1284 500l6 -2M1305 520l5 -2M1241 488l7 -2M1312 504l4 -1M1249 479l4 -1M1298 457l3 -1M1320 551l4 -1M1452 589l6 -1M1303 523l6 -2M1333 473l5 -1M1309 460l3 -1M1394 484l4 -0M1299 522l5 -1M1277 455l5 -2M1309 544l6 -2M1362 432l6 -1M1258 520l7 -2M1274 532l4 -1M1471 592l7 -1M1314 511l7 -2M1275 489l4 -1M1336 559l7 -3M1283 470l6 -3M1496 561l7 -1M1289 481l7 -1M1291 508l7 -1M1430 447l5 -1M1400 464l4 -2M1367 551l4 -2M1464 520l6 -2M1374 545l7 -2M1297 455l6 -1M1325 534l5 -1M1340 503l3 -0M1319 485l4 -2M1353 486l4 -1M1453 518l6 -2M1292 455l7 -2M1447 536l6 -2M1418 559l4 -0M1438 528l7 -2M1435 467l5 -2M1373 482l3 -1M1307 504l6 -1M1360 552l4 -2M1416 472l4 -1M1413 442l5 -1M1281 460l4 -2M1474 531l6 -2M1412 570l7 -3M1315 456l5 -2M1457 502l6 -1M1323 561l8 -2M1433 427l7 -2M1348 444l5 -1M1415 511l4 -2M1436 495l4 -1M1436 585l3 -1M1339 543l3 -0M1426 517l6 -3M1410 547l6 -1M1435 521l3 -0M1288 509l4 -2M1297 548l7 -1M1460 543l5 -1M1293 475l4 -2M1445 581l5 -1M1464 508l8 -2M1417 502l5 -2M1330 455l5 -1M1433 551l7 -3M1384 518l4 -1M1311 502l3 -1M1342 548l3 -1M1329 561l4 -1M1288 524l7 -2M1290 518l4 -1M1364 454l8 -1M1382 498l7 -1M1303 510l4 -1M1367 495l3 -1M1316 518l5 -1M1311 531l6 -1M1428 444l5 -2M1416 526l6 -1M1434 443l4 -1M1350 451l7 -1M1485 533l3 -1M1388 461l3 -1M1288 508l7 -3M1269 510l5 -2M1289 468l4 -1M1285 459l3 -2M1383 488l7 -1M1301 444l5 -1M1272 518l5 -2M1453 487l6 -1M1261 513l6 -1M1388 500l3 -1M1370 474l4 -2M1269 487l7 -1M1490 530l4 -2M1411 518l7 -1M1486 527l4 -2M1424 542l4 -2M1366 529l3 -2M1413 439l5 -1M1456 541l6 -1M1379 448l6 -1M1308 533l6 -2M1381 492l5 -2M1294 466l7 -1M1336 477l6 -1M1357 569l7 -2M1397 546l5 -1M1400 534l4 -1M1418 546l6 -1M1278 511l7 -1M1376 573l5 -2M1258 499l5 -1M1438 517l4 -2M1487 584l8 -2M1374 528l6 -3M1334 508l7 -1M1431 548l6 -1M1323 545l4 -1M1488 575l6 -2M1398 469l3 -1M1431 512l5 -2M1382 438l3 -1M1442 490l6 -2M1489 553l5 -2M1348 504l7 -2M1417 484l6 -1M1338 562l3 -1M1393 466l6 -1M1284 511l3 -1M1447 487l6 -1M1380 538l7 -3M1279 495l5 -1M1383 503l6 -2M1272 531l4 -2M1399 560l4 -0M1303 504l5 -1M1503 571l4 -1M1424 522l5 -1M1339 537l6 -1M1402 432l4 -1M1493 585l7 -3M1335 524l6 -2M1306 551l7 -3M1358 542l7 -3M1324 514l7 -1M1426 510l4 -2M1407 455l5 -2M1370 511l7 -3M1366 531l3 -1M1289 477l5 -2M1445 513l5 -1M1373 540l4 -1M1369 566l7 -1M1316 447l6 -1M1428 555l4 -1M1417 477l3 -2M1503 547l7 -2M1350 475l7 -2M1461 546l7 -3M1407 549l6 -2M1289 487l6 -2M1308 478l3 -1M1263 498l4 -2M1296 443l7 -2M1290 499l6 -2M1317 493l7 -1M1490 555l4 -2M1459 502l4 -2M1311 462l5 -1M1354 472l6 -2M1342 491l4 -1M1343 522l5 -1M1345 505l5 -1M1515 595l4 -2M1457 543l6 -2M1482 572l7 -2M1275 499l6 -1M1295 466l5 -2M1496 546l5 -2M1279 489l4 -2M1400 451l4 -1M1375 556l3 -1M1491 570l6 -1M1455 575l3 -1M1372 568l4 -1M1453 561l6 -1M1277 521l7 -2M1370 530l6 -1M1341 492l8 -2M1336 444l7 -1M1426 461l3 -0M1387 469l3 -1M1434 482l3 -0M1461 547l5 -1M1345 557l5 -2M1479 550l3 -2M1392 444l7 -2M1498 560l5 -1M1440 509l5 -1M1365 525l3 -1M1402 508l5 -1M1323 497l5 -0M1391 473l7 -1M1411 447l4 -1M1303 513l7 -2M1453 468l5 -1M1298 464l5 -2M1394 504l7 -3M1364 501l3 -1M1338 496l4 -2M1441 478l4 -1M1386 435l6 -1M1436 543l6 -2M1407 443l7 -3M1338 531l4 -1M1370 474l4 -1M1389 428l3 -0M1283 531l4 -2M1496 537l7 -1M1299 489l7 -2M1507 550l4 -1M1438 573l7 -1M1416 580l7 -2M1391 545l7 -1M1437 514l6 -2M1357 528l5 -2M1258 517l3 -1M1313 559l7 -1M1510 555l3 -1M1440 517l6 -3M1468 538l3 -1M1452 584l3 -0M1334 554l6 -2M1447 486l8 -1M1452 543l4 -1M1239 480l4 -1M1411 514l3 -1M1415 465l3 -1M1416 472l3 -1M1318 533l8 -1M1506 570l5 -2M1488 586l3 -1M1264 479l4 -1M1312 446l7 -1M1497 545l5 -1M1458 569l6 -1M1258 472l5 -1M1261 461l4 -1M1293 534l6 -3M1408 571l5 -2M1450 449l3 -1M1397 509l4 -1M1394 503l4 -1M1390 541l6 -3M1353 516l8 -2M1314 457l7 -1M1468 528l6 -1M1387 470l4 -2M1275 489l6 -1M1271 478l6 -1M1409 557l4 -2M1407 561l8 -1M1341 480l6 -1M1315 509l6 -1M1407 448l3 -1M1433 579l5 -0M1482 525l4 -1M1449 580l7 -2M1495 555l5 -1M1467 553l5 -2M1282 477l7 -1M1369 521l8 -1M1320 451l5 -1M1351 483l6 -2M1414 467l6 -2M1460 472l7 -1M1366 552l5 -1M1412 522l5 -1M1373 474l3 -1M1502 537l7 -1M1350 537l6 -2M1283 443l5 -1M1426 551l5 -1M1372 564l8 -1M1420 427l5 -2M1504 584l6 -2M1381 433l5 -1M1275 486l6 -1M1432 512l6 -3M1387 446l5 -1M1319 526l5 -2M1503 576l3 -1M1317 542l5 -2M1432 520l8 -1M1301 542l3 -1M1442 550l7 -3M1409 483l3 -1M1267 506l5 -2M1260 485l5 -2M1432 504l6 -1M1427 444l5 -2M1396 492l7 -2M1331 514l6 -2M1285 458l4 -1M1333 562l4 -1M1275 469l4 -1M1415 584l4 -1M1353 439l3 -1M1423 554l5 -2M1409 480l7 -2M1290 470l4 -1M1336 438l5 -2M1386 500l8 -2M1421 502l7 -1M1396 545l6 -3M1318 442l6 -3M1314 444l4 -1M1249 485l4 -1M1428 573l8 -2M1303 454l4 -1M1398 550l7 -2M1391 562l4 -2M1429 496l4 -2M1488 577l7 -1M1329 489l4 -0M1377 489l3 -1M1509 594l7 -3M1394 475l3 -1M1430 560l7 -1M1387 577l7 -3M1267 509l5 -1M1354 564l6 -2M1342 567l6 -2M1414 461l5 -1M1355 498l7 -2M1375 535l3 -1M1355 444l3 -1M1418 472l3 -1M1396 521l3 -1M1382 490l4 -1M1409 436l4 -1M1496 568l4 -1M1269 526l4 -2M1301 526l6 -1M1341 518l5 -2M1482 570l6 -2M1310 444l3 -0M1450 457l5 -1M1452 517l7 -3M1459 542l7 -1M1359 489l5 -2M1296 523l7 -3M1456 578l6 -2M1423 553l4 -1M1342 513l5 -2M1313 558l6 -1M1402 445l6 -1M1350 479l7 -1M1455 535l7 -2M1440 502l4 -1M1299 484l5 -1M1281 509l4 -1M1497 589l7 -3M1332 547l3 -1M1478 548l4 -1M1443 462l6 -3M1403 578l5 -2M1285 527l4 -1M1265 511l7 -1M1437 504l5 -2M1346 440l5 -1M1409 491l5 -2M1435 535l7 -1M1325 473l7 -2M1318 507l7 -1M1360 438l8 -2M1470 507l7 -2M1372 436l3 -1M1360 473l4 -2M1413 520l8 -1M1366 489l6 -2M1319 546l5 -2M1338 448l6 -1M1287 485l8 -1M1471 574l3 -0M1453 462l4 -1M1351 464l5 -1M1353 452l5 -2M1392 506l6 -1M1268 494l4 -1M1298 531l6 -2M1397 564l4 -1M1329 472l3 -1M1296 457l7 -1M1457 532l3 -1M1409 458l6 -3M1275 531l7 -3M1305 554l4 -1M1461 503l3 -1M1427 457l8 -1M1421 533l3 -1M1418 541l3 -1M1382 550l3 -1M1448 513l5 -1M1400 459l5 -1M1432 451l8 -2M1465 545l6 -1M1389 458l3 -0M1453 483l5 -2M1396 530l6 -1M1285 461l6 -2M1455 461l5 -2M1326 488l7 -1M1246 466l5 -1M1337 454l7 -2M1324 522l7 -3M1342 558l8 -1M1292 509l3 -1M1388 489l4 -0M1326 480l5 -2M1298 468l6 -3M1289 441l5 -1M1343 546l7 -3M1435 588l4 -0M1408 457l8 -2M1286 531l3 -1M1470 527l7 -1M1305 551l4 -1M1464 500l6 -2M1321 507l7 -2M1457 516l8 -2M1368 503l7 -2M1367 511l5 -2M1256 504l6 -2M1435 528l7 -3M1509 563l6 -1M1410 431l6 -1M1364 555l3 -1M1321 524l5 -2M1504 539l3 -1M1386 501l7 -2M1357 474l7 -2M1423 484l7 -2M1430 518l5 -1M1474 514l3 -0M1357 523l4 -1M1305 456l8 -1M1269 526l4 -1M1431 479l7 -2M1329 479l4 -0M1459 587l8 -1M1360 444l5 -1M1415 567l5 -1M1365 479l5 -1M1465 559l7 -1M1268 509l7 -1M1330 530l6 -1M1337 482l7 -3M1487 569l5 -1M1265 468l6 -3M1296 545l4 -1M1368 569l6 -1M1385 445l4 -1M1375 509l3 -1M1271 448l6 -2M1436 507l5 -0M1408 433l6 -1M1388 461l5 -2M1327 557l5 -1M1388 535l8 -2M1468 545l7 -1M1360 561l3 -1M1258 487l7 -3M1442 534l5 -1M1327 516l6 -1M1312 547l8 -2M1279 513l3 -1M1406 469l5 -1M1364 485l4 -1M1402 432l6 -2M1296 543l8 -1M1417 556l3 -1M1377 531l3 -1M1437 585l4 -1M1496 551l5 -1M1411 461l7 -2M1379 550l3 -0M1459 573l6 -1M1348 518l4 -1M1361 574l5 -1M1299 462l6 -1M1368 534l7 -1M1324 438l6 -1M1440 464l6 -1M1392 427l3 -1M1504 543l5 -1M1380 571l4 -0M1466 527l6 -2M1491 567l5 -1M1346 509l4 -1M1315 461l4 -1M1315 537l8 -1M1507 542l6 -1M1376 481l4 -1M1362 466l7 -2M1364 574l3 -1M1303 531l5 -1M1355 561l4 -1M1457 511l8 -1M1355 475l3 -1M1413 437l6 -1M1391 534l6 -1M1244 487l5 -2M1466 507l4 -1M1313 555l6 -1M1265 469l5 -2M1371 521l7 -1M1395 426l7 -1M1439 521l7 -3M1433 545l5 -1M1469 559l6 -1M1306 474l3 -1M1316 491l6 -1M1405 439l6 -2M1472 575l4 -1M1369 474l3 -1M1441 542l5 -2M1344 495l4 -2M1468 520l6 -2M1269 466l4 -1M1410 500l6 -1M1296 534l6 -1M1407 578l5 -2M1397 525l4 -0M1365 479l3 -1M1337 498l7 -2M1474 531l3 -1M1317 536l7 -1M1372 455l4 -1M1272 503l5 -2M1421 537l7 -1M1507 550l6 -1M1272 530l7 -2M1335 489l4 -1M1319 538l5 -1M1379 532l4 -0M1338 544l7 -2M1396 514l5 -1M1372 501l6 -1M1335 545l6 -2M1260 476l7 -1M1403 441l5 -2M1321 450l6 -1M1447 556l3 -1M1373 497l6 -1M1354 451l6 -2M1439 510l3 -0M1446 471l7 -1M1307 497l4 -1M1405 517l3 -1M1376 449l3 -1M1482 556l7 -1M1392 559l4 -2M1315 469l4 -1M1419 537l6 -1M1451 502l3 -0M1377 440l6 -1M1432 472l4 -2M1429 552l5 -1M1390 582l7 -2M1375 443l3 -1M1425 523l4 -1M1471 579l7 -2M1456 507l5 -2M1395 556l7 -1M1341 482l5 -0M1439 487l3 -1M1339 559l7 -1M1429 566l3 -1M1385 451l3 -1M1324 513l4 -1M1366 441l3 -1M1371 505l4 -2M1351 537l4 -0M1498 595l7 -2M1280 459l7 -1M1458 550l5 -2M1470 521l7 -2M1253 491l8 -2M1299 517l8 -1M1364 550l4 -1M1294 537l7 -1M1461 558l5 -1M1433 439l7 -3M1308 509l7 -1M1480 542l4 -0M1398 528l7 -2M1368 450l7 -2M1356 463l3 -1M1417 568l7 -3M1401 433l7 -1M1270 457l5 -1M1446 565l3 -1M1326 506l6 -1M1338 445l6 -2M1443 467l7 -2M1335 513l7 -3M1427 430l5 -1M1413 542l6 -2M1314 515l5 -2M1319 476l6 -1M1332 485l7 -1M1279 476l7 -2M1424 477l6 -2M1416 513l7 -3M1362 456l4 -1M1399 489l7 -2M1418 538l5 -1M1428 530l4 -1M1350 517l7 -2M1399 528l4 -1M1385 440l5 -2M1310 493l6 -1M1424 515l3 -0M1513 584l8 -2M1382 479l6 -2M1355 525l6 -1M1323 470l3 -1M1396 577l4 -1M1368 528l4 -1M1487 558l4 -1M1446 547l3 -1M1370 477l3 -1M1339 516l4 -2M1359 566l7 -1M1395 524l6 -2M1332 482l4 -2M1337 562l3 -1M1463 495l4 -2M1266 477l6 -2M1332 550l5 -1M1474 576l8 -2M1403 528l3 -1M1395 546l7 -2M1328 454l5 -1M1381 544l7 -2M1432 560l4 -2M1423 542l7 -1M1319 551l5 -1M1366 537l4 -1M1358 532l3 -1M1453 563l3 -1M1459 514l3 -1M1415 472l4 -0M1361 489l3 -1M1393 575l3 -1M1256 502l7 -2M1409 565l7 -1M1327 517l3 -1M1250 495l4 -1M1314 484l7 -1M1368 492l6 -1M1260 503l4 -2M1381 477l5 -1M1397 439l5 -2M1287 503l4 -1M1387 500l4 -1M1443 544l6 -1M1449 544l3 -0M1435 532l8 -1M1417 538l6 -1M1274 472l4 -1M1468 534l6 -2M1370 525l3 -1M1369 528l6 -2M1341 551l4 -2M1322 509l7 -2M1383 445l6 -2M1295 448l3 -0M1371 518l7 -3M1387 490l4 -0M1448 529l5 -1M1483 579l7 -3M1277 502l5 -2M1332 531l4 -1M1297 518l5 -2M1248 508l4 -2M1276 511l4 -2M1388 513l7 -2M1433 497l5 -2M1306 471l7 -1M1288 470l4 -1M1448 558l3 -1M1363 440l5 -0M1463 492l4 -2M1441 438l4 -0M1271 450l5 -2M1376 478l5 -1M1422 482l4 -1M1346 531l6 -2M1427 587l3 -1M1314 555l4 -1M1277 459l4 -1M1359 460l4 -2M1271 521l6 -2M1335 472l4 -1M1489 569l4 -2M1405 461l5 -2M1284 464l7 -1M1393 461l5 -1M1391 468l8 -1M1290 454l8 -1M1442 473l6 -2M1355 566l8 -2M1395 427l5 -1M1434 438l8 -2M1317 548l8 -1M1474 553l7 -2M1369 451l4 -1M1391 498l4 -1M1347 480l4 -2M1328 465l8 -2M1290 512l5 -1M1418 475l5 -2M1324 478l5 -1M1452 589l4 -2M1263 517l5 -2M1265 465l4 -1M1369 570l6 -3M1386 470l3 -1M1353 532l4 -2M1358 487l7 -3M1467 586l5 -2M1368 484l5 -2M1377 577l6 -1M1377 458l6 -1M1346 482l6 -1M1485 573l3 -2M1380 515l7 -2M1515 587l4 -2M1425 444l5 -1M1258 496l5 -1M1306 463l6 -2M1457 509l7 -1M1408 521l3 -1M1270 498l3 -1M1467 577l5 -1M1502 592l3 -1M1395 489l7 -2M1412 465l6 -1M1422 583l7 -3M1318 525l7 -2M1295 519l5 -2M1340 514l7 -2M1360 569l5 -2M1443 486l3 -1M1425 470l5 -2M1337 452l5 -2M1366 438l4 -1M1336 460l7 -3M1457 541l5 -1M1408 453l7 -2M1315 446l6 -1M1406 465l6 -2M1454 522l4 -1M1368 432l5 -2M1371 446l5 -2M1254 466l6 -1M1279 446l7 -1M1481 529l5 -1M1326 528l5 -1M1327 495l5 -2M1422 518l6 -2M1402 467l6 -3M1484 561l6 -1M1392 444l3 -1M1494 535l6 -2M1370 479l3 -1M1345 452l7 -1M1341 490l5 -1M1323 448l6 -3M1435 558l5 -2M1414 473l4 -0M1408 447l6 -1M1409 427l3 -1M1303 540l7 -3M1425 432l7 -2M1474 547l3 -1M1416 459l5 -1M1284 539l7 -1M1367 479l4 -1M1492 566l7 -2M1418 448l6 -2M1378 450l7 -1M1273 480l6 -2M1351 523l4 -1M1473 528l5 -1M1514 593l4 -1M1509 564l7 -1M1399 463l4 -1M1296 508l8 -1M1336 512l7 -1M1458 546l5 -1M1304 504l7 -1M1285 441l8 -2M1310 485l5 -1M1385 473l6 -1M1306 536l8 -2M1454 461l4 -1M1255 485l8 -1M1424 530l5 -2M1305 549l3 -1M1414 447l5 -1M1411 522l6 -2M1345 536l7 -1M1396 534l4 -1M1418 469l6 -2M1280 484l3 -1M1477 580l6 -3M1360 492l7 -1M1392 526l6 -1M1358 475l8 -2M1441 480l7 -3M1378 475l5 -1M1354 488l3 -0M1280 503l4 -1M1332 468l4 -2M1271 483l3 -1M1311 554l5 -2M1252 491l8 -2M1441 466l5 -1M1312 453l5 -1M1451 571l7 -2M1401 548l4 -1M1356 526l6 -1M1452 508l5 -2M1419 458l5 -1M1416 453l4 -2M1415 436l3 -0M1430 498l5 -1M1426 496l5 -2M1384 491l6 -2M1287 468l5 -1M1435 582l6 -1M1329 551l4 -1M1343 532l4 -1M1284 455l8 -1M1390 486l7 -2M1324 504l4 -2M1315 461l3 -1M1422 522l7 -1M1476 524l8 -1M1384 434l6 -2M1393 450l5 -2M1432 485l8 -1M1343 567l5 -1M1400 550l6 -1M1395 519l6 -2M1480 546l4 -2M1512 595l7 -1M1461 539l4 -1M1332 488l5 -2M1426 584l5 -2M1435 473l6 -2M1403 481l6 -3M1379 528l8 -1M1445 572l4 -1M1473 527l6 -3M1359 511l4 -1M1464 503l7 -3M1492 583l6 -2M1416 568l4 -2M1441 549l4 -2M1439 540l8 -1M1353 465l3 -1M1407 571l6 -2M1377 569l3 -1M1395 560l6 -1M1332 456l4 -1M1361 552l8 -1M1462 531l6 -2M1411 469l7 -1M1296 527l5 -1M1335 557l3 -1M1424 569l6 -1M1435 576l4 -1M1399 477l4 -1M1308 460l6 -1M1462 520l4 -0M1268 505l3 -0M1303 543l6 -3M1361 572l8 -1M1426 579l7 -3M1401 489l4 -1M1476 576l4 -2M1256 497l6 -2M1372 573l7 -1M1424 524l7 -1M1420 582l7 -1M1291 523l6 -2M1258 479l7 -2M1408 457l5 -1M1398 581l7 -3M1440 563l8 -1M1353 438l5 -1M1449 491l7 -3M1419 469l5 -2M1457 490l4 -1M1308 524l4 -1M1469 564l7 -2M1434 533l6 -1M1277 453l5 -1M1404 451l5 -1M1452 550l7 -3M1457 481l6 -1M1383 450l7 -3M1276 462l6 -3M1382 462l6 -1M1243 484l5 -2M1376 556l8 -2M1378 551l5 -1M1276 508l4 -1M1289 480l4 -1M1436 480l5 -2M1328 475l5 -1M1377 480l6 -2M1331 439l3 -1M1461 528l3 -0M1461 500l3 -1M1476 523l5 -1M1366 443l6 -1M1350 559l6 -3M1348 489l4 -2M1361 511l8 -2M1371 447l5 -1M1347 459l6 -2M1484 522l7 -1M1433 508l5 -1M1333 501l4 -2M1269 507l6 -1M1353 470l4 -2M1420 533l4 -1M1298 458l4 -1M1413 481l8 -1M1493 556l5 -0M1445 456l5 -1M1349 516l5 -1M1488 537l5 -1M1356 548l5 -1M1413 576l5 -1M1411 507l5 -1M1400 540l3 -1M1302 540l4 -0M1379 493l7 -2M1328 459l7 -1M1374 478l7 -2M1352 568l5 -1M1512 573l7 -3M1513 572l3 -1M1322 481l6 -2M1377 523l7 -1M1411 472l3 -1M1352 494l5 -1M1382 449l7 -2M1276 526l6 -1M1477 585l5 -1M1303 544l6 -2M1378 442l5 -2M1311 454l7 -1M1439 584l7 -3M1372 461l5 -1M1251 500l6 -2M1419 455l4 -2M1475 577l3 -1M1403 569l4 -1M1380 464l5 -1M1254 517l6 -2M1451 453l4 -1M1312 521l7 -3M1289 457l6 -1M1275 530l5 -2M1504 538l6 -1M1394 464l3 -1M1289 538l6 -1M1417 435l7 -1M1353 535l7 -3M1286 463l5 -1M1282 447l5 -2M1251 455l5 -1M1457 506l4 -1M1503 579l6 -2M1321 461l3 -1M1432 546l3 -1M1268 485l4 -1M1448 462l3 -1M1367 564l6 -2M1513 593l4 -1M1434 586l7 -3M1455 551l4 -1M1444 501l6 -2M1386 534l5 -2M1309 486l6 -1M1354 438l7 -1M1365 494l4 -1M1422 522l5 -1M1271 496l8 -2M1438 506l4 -1M1449 489l8 -1M1433 583l5 -2M1304 483l8 -2M1366 526l8 -1M1358 557l6 -1M1379 526l7 -2M1336 474l7 -1M1396 465l3 -1M1429 513l8 -2M1469 512l4 -1M1435 554l7 -3M1340 499l5 -1M1321 486l3 -1M1376 536l3 -0M1462 537l3 -1M1441 554l5 -2M1447 511l6 -1M1283 455l5 -2M1506 549l4 -1M1459 548l5 -2M1434 481l3 -1M1344 538l6 -2M1306 554l6 -2M1256 511l6 -1M1282 496l3 -1M1497 571l6 -2M1433 460l7 -2M1444 496l5 -2M1315 488l5 -1M1424 483l3 -1M1312 559l6 -1M1313 556l4 -0M1257 513l6 -2M1362 544l7 -2M1362 509l6 -2M1436 448l4 -2M1404 449l4 -1M1376 474l5 -2M1483 553l7 -1M1359 543l7 -2M1287 484l5 -1M1422 583l3 -1M1398 558l6 -2M1395 480l6 -1M1257 472l7 -2M1503 542l4 -2M1482 544l8 -1M1310 520l5 -1M1428 536l7 -1M1393 435l5 -2M1472 591l4 -0M1408 508l6 -1M1385 464l4 -1M1450 563l4 -1M1438 531l3 -1M1249 471l7 -2M1314 520l3 -1M1344 511l3 -1M1251 457l6 -1M1341 438l7 -1M1299 456l7 -3M1452 466l6 -2M1406 541l5 -1M1428 496l4 -1M1394 531l7 -3M1371 439l3 -1M1345 535l4 -1M1345 472l4 -0M1380 443l6 -1M1411 566l7 -1M1422 471l7 -1M1356 533l6 -1M1321 486l4 -1M1486 589l4 -1M1402 510l5 -1M1283 485l7 -2M1412 526l3 -0M1388 472l7 -1M1479 587l7 -2M1279 467l6 -1M1397 555l7 -2M1260 485l3 -1M1301 461l6 -1M1303 531l7 -1M1372 553l7 -1M1312 548l3 -1M1370 468l6 -3M1498 576l8 -1M1405 569l5 -1M1409 475l3 -1M1418 564l5 -2M1309 520l5 -1M1410 538l5 -1M1368 435l4 -1M1464 580l6 -2M1300 463l3 -1M1432 512l5 -0M1418 574l5 -1M1282 489l5 -2M1339 487l4 -2M1437 497l7 -1M1323 501l3 -1M1401 573l6 -1M1247 471l3 -1M1390 489l7 -2M1438 559l6 -2M1487 568l5 -2M1426 489l5 -1M1401 549l4 -0M1430 482l7 -2M1291 468l6 -1M1488 546l6 -2M1325 514l5 -2M1435 535l3 -1M1439 438l3 -1M1311 551l4 -1M1446 474l6 -3M1436 434l7 -1M1364 460l7 -2M1396 562l3 -1M1428 429l8 -1M1346 548l4 -1M1394 508l4 -0M1499 542l7 -3M1340 504l7 -1M1293 469l3 -1M1408 532l4 -2M1435 549l4 -2M1394 507l5 -2M1344 568l4 -1M1448 493l3 -1M1411 438l4 -1M1407 563l3 -1M1330 525l7 -2M1383 581l5 -1M1484 531l4 -2M1487 556l6 -3M1350 467l3 -1M1336 445l4 -1M1292 466l6 -1M1471 571l3 -1M1474 552l8 -1M1401 543l4 -1M1451 461l7 -3M1338 550l8 -1M1458 467l6 -1M1445 486l6 -2M1417 569l7 -1M1485 525l5 -1M1386 526l4 -1M1434 579l6 -2M1353 463l7 -1M1439 492l7 -2M1515 586l5 -2M1410 559l6 -2M1351 496l7 -2M1355 454l7 -2M1359 460l4 -1M1425 540l4 -1M1506 582l5 -2M1489 539l7 -3M1374 469l6 -2M1408 439l6 -3M1378 571l4 -1M1431 548l4 -1M1258 514l7 -2M1340 512l5 -2M1355 440l4 -1M1344 492l5 -2M1450 478l7 -3M1341 502l6 -1M1405 513l4 -2M1298 528l7 -3M1403 583l7 -3M1364 433l6 -3M1321 467l6 -3M1287 466l4 -1M1405 569l7 -1M1360 466l7 -1M1444 505l8 -1M1434 492l3 -1M1349 568l5 -2M1336 557l6 -2M1355 531l3 -1M1333 445l7 -2M1368 480l4 -1M1301 536l3 -1M1428 438l7 -1M1468 526l4 -1M1361 539l4 -1M1507 550l5 -2M1336 466l6 -2M1407 515l3 -1M1397 429l3 -2M1450 503l8 -1M1277 445l4 -1M1507 539l6 -2M1418 433l3 -1M1352 464l5 -2M1273 520l5 -2M1457 490l4 -1M1293 492l7 -1M1490 541l5 -2M1401 449l5 -1M1458 493l5 -0M1402 499l8 -1M1368 557l4 -1M1488 537l5 -2M1247 473l8 -1M1369 442l5 -1M1347 519l4 -1M1426 470l4 -0M1269 448l6 -1M1320 460l3 -1M1320 440l7 -3M1320 546l3 -1M1477 564l6 -2M1402 467l4 -2M1327 479l7 -1M1306 529l3 -1M1503 594l5 -0M1414 503l5 -0M1506 593l6 -1M1293 503l3 -2M1347 483l7 -1M1452 523l6 -3M1377 442l5 -1M1300 532l7 -2M1256 458l3 -1M1500 555l4 -1M1272 523l6 -2M1252 471l4 -1M1352 526l7 -1M1328 503l7 -1M1366 532l4 -1M1258 454l5 -2M1404 542l6 -2M1419 449l4 -1M1260 517l7 -2M1416 540l7 -2M1428 584l4 -1M1378 528l4 -1M1264 488l7 -1M1357 524l4 -2M1493 568l7 -2M1361 548l6 -1M1449 540l6 -3M1424 583l7 -1M1316 517l5 -2M1445 561l5 -1M1495 564l3 -1M1440 474l6 -2M1471 500l5 -2M1373 487l6 -1M1359 466l5 -1M1303 454l4 -1M1465 511l6 -1M1421 534l6 -2M1453 564l5 -2M1305 489l3 -1M1241 488l7 -3M1386 492l3 -0M1458 481l3 -1M1398 574l3 -0M1350 454l4 -0M1506 589l7 -3M1405 540l6 -1M1506 539l5 -2M1304 535l6 -2M1439 548l3 -1M1428 459l5 -1M1498 576l3 -1M1272 475l4 -1M1340 500l7 -3M1319 482l4 -1M1437 474l4 -2M1336 466l5 -2M1475 539l5 -1M1482 525l6 -1M1385 564l5 -1M1291 462l4 -2M1288 531l3 -1M1270 448l6 -1M1411 433l6 -2M1423 507l4 -1M1406 446l3 -0M1351 467l4 -2M1319 466l4 -1M1487 567l6 -2M1447 465l6 -1M1258 474l4 -0M1382 451l3 -1M1443 516l5 -2M1362 464l3 -0M1436 495l7 -1M1307 523l5 -1M1304 467l5 -1M1477 546l5 -2M1441 470l3 -1M1414 451l7 -2M1380 444l7 -2M1266 514l5 -2M1436 516l3 -1M1417 512l6 -2M1390 567l3 -0M1465 530l6 -2M1375 528l5 -2M1435 437l7 -3M1400 456l6 -1M1294 453l7 -2M1353 477l8 -1M1451 576l4 -2M1389 565l6 -3M1307 523l6 -2M1428 450l7 -3M1420 434l7 -2M1291 452l4 -1M1512 581l3 -1M1422 456l3 -1M1409 545l7 -1M1351 466l4 -1M1419 472l5 -2M1295 510l6 -1M1299 548l4 -1M1403 552l7 -1M1259 494l6 -1M1354 486l5 -1M1351 543l5 -1M1396 515l4 -2M1404 559l4 -1M1389 492l4 -1M1399 465l4 -2M1443 527l3 -1M1380 442l7 -3M1310 499l5 -1M1360 536l7 -2M1256 497l4 -0M1304 441l4 -1M1433 546l5 -1M1467 523l5 -1M1312 530l6 -2M1385 511l6 -2M1254 503l4 -1M1288 483l8 -2M1301 513l4 -1M1289 442l7 -1M1382 543l8 -1M1385 554l5 -2M1257 455l8 -2M1445 456l6 -2M1421 522l4 -1M1420 553l4 -0M1324 467l7 -3M1309 501l7 -1M1329 500l8 -1M1393 455l6 -1M1336 561l4 -0M1437 442l6 -2M1400 506l6 -2M1314 480l8 -1M1321 507l3 -1M1482 549l8 -1M1365 474l6 -1M1291 479l4 -1M1407 520l5 -1M1324 442l5 -2M1259 486l5 -2M1421 469l7 -1M1376 537l8 -1M1338 463l8 -1M1443 554l6 -1M1469 549l6 -2M1271 480l4 -1M1253 454l7 -3M1292 449l6 -2M1457 539l6 -2M1323 521l6 -2M1350 489l5 -1M1390 517l4 -2M1371 442l6 -2M1382 492l6 -1M1456 545l3 -1M1415 430l5 -1M1405 503l4 -1M1311 474l4 -1M1434 492l5 -1M1363 433l7 -1M1425 424l5 -1M1294 527l3 -1M1374 461l4 -1M1277 519l4 -2M1326 544l7 -1M1249 498l6 -3M1370 510l5 -2M1305 447l4 -1M1449 471l4 -2M1507 571l7 -2M1415 573l6 -1M1307 539l6 -2M1381 482l3 -1M1496 567l4 -1M1303 463l7 -3M1464 531l5 -2M1264 447l5 -3M1354 450l7 -1M1249 468l5 -1M1423 486l4 -2M1348 456l4 -1M1494 543l7 -2M1257 497l4 -2M1500 566l6 -1M1269 453l6 -1M1250 488l6 -2M1383 470l4 -1M1453 493l7 -3M1489 549l7 -1M1309 464l6 -1M1454 525l7 -3M1333 491l7 -2M1305 514l7 -2M1330 521l7 -3M1257 509l6 -2M1322 460l7 -3M1243 477l7 -3M1436 438l3 -1M1430 471l6 -2M1423 552l7 -2M1277 519l4 -1M1323 454l4 -1M1456 483l6 -2M1389 489l6 -1M1412 578l7 -1M1377 468l6 -1M1444 506l3 -1M1369 469l6 -1M1477 542l3 -1M1272 459l7 -3M1283 456l8 -2M1370 476l4 -1M1389 465l6 -2M1310 493l6 -1M1334 474l4 -1M1420 540l6 -2M1297 535l3 -0M1480 587l5 -1M1260 512l5 -2M1272 506l5 -3M1486 588l7 -3M1372 529l4 -1M1274 446l5 -2M1291 492l5 -1M1437 572l4 -0M1442 471l7 -1M1404 515l5 -2M1369 446l5 -1M1393 559l4 -1M1490 547l8 -1M1422 579l6 -3M1316 492l7 -1M1416 576l5 -1M1358 503l5 -2M1337 458l7 -2M1352 463l6 -1M1308 461l6 -1M1437 540l5 -2M1441 536l7 -2M1270 453l3 -1M1273 475l4 -1M1382 476l6 -1M1244 483l6 -1M1267 503l5 -2M1411 556l4 -1M1275 513l5 -2M1292 469l6 -3M1436 491l5 -2M1449 491l6 -2M1326 554l7 -2M1390 514l6 -2M1380 518l4 -1M1351 529l8 -1M1315 555l7 -2M1269 446l4 -2M1281 498l5 -2M1310 506l4 -1M1455 538l7 -2M1436 489l4 -2M1433 448l6 -3M1338 464l7 -1M1377 513l6 -1M1368 560l5 -1M1484 588l4 -1M1475 525l3 -0M1432 506l4 -1M1388 572l5 -1M1422 513l5 -2M1393 445l3 -1M1331 473l6 -1M1293 533l7 -2M1290 526l5 -2M1323 529l5 -1M1495 570l6 -3M1348 540l4 -1M1505 548l7 -2M1273 464l6 -2M1386 465l4 -1M1332 520l3 -1M1425 551l8 -2M1347 521l4 -0M1418 446l5 -1M1375 514l7 -1M1328 487l6 -1M1474 569l4 -1M1246 481l6 -1M1383 513l5 -2M1297 475l3 -1M1512 568l4 -1M1432 528l6 -1M1376 478l6 -2M1334 509l6 -2M1497 565l5 -1M1437 584l6 -2M1446 568l4 -0M1339 567l5 -1M1475 583l7 -2M1369 482l4 -1M1418 503l5 -1M1345 456l7 -2M1346 511l4 -2M1284 530l6 -2M1290 524l4 -1M1350 489l4 -0M1281 468l6 -1M1399 478l5 -2M1456 503l5 -1M1452 537l3 -0M1293 476l5 -1M1319 438l4 -1M1302 449l6 -1M1463 498l3 -1M1505 594l7 -3M1493 578l7 -1M1288 511l3 -0M1377 554l5 -1M1307 461l4 -2M1351 558l4 -1M1465 531l7 -1M1387 560l7 -2M1288 502l7 -1M1402 470l4 -1M1253 471l6 -1M1498 559l8 -1M1414 434l8 -1M1279 515l5 -1M1379 447l4 -1M1381 444l3 -1M1383 516l4 -1M1502 582l3 -1M1306 493l7 -2M1241 486l3 -1M1403 554l7 -2M1497 532l6 -2M1291 480l5 -2M1508 579l6 -2M1280 487l6 -2M1337 537l7 -2M1348 534l5 -2M1306 451l4 -1M1463 589l7 -1M1326 539l5 -2M1274 496l6 -1M1453 530l5 -1M1318 499l7 -2M1308 470l5 -2M1249 502l5 -2M1505 554l4 -1M1348 521l4 -1M1458 485l5 -1M1402 442l5 -1M1399 583l3 -1M1409 545l6 -3M1288 492l6 -1M1342 559l4 -1M1361 573l4 -1M1426 569l3 -1M1397 571l7 -1M1486 545l5 -2M1387 465l7 -2M1332 550l6 -2M1420 532l4 -1M1456 577l3 -1M1397 582l6 -2M1405 575l6 -2M1404 458l7 -3M1478 570l6 -2M1443 495l7 -2M1406 508l4 -1M1419 532l6 -2M1426 576l6 -2M1432 451l3 -1M1457 507l7 -3M1394 535l4 -1M1357 542l4 -2M1363 457l4 -1M1322 442l4 -0M1350 497l4 -1M1276 508l5 -1M1319 489l3 -1M1337 555l5 -2M1430 558l4 -0M1441 478l3 -1M1422 471l3 -1M1316 454l3 -0M1299 493l6 -2M1401 536l6 -2M1272 511l5 -1M1317 527l5 -1M1448 554l5 -2M1422 584l4 -2M1329 439l4 -1M1406 562l3 -1M1312 515l4 -1M1254 505l4 -1M1412 436l5 -2M1426 470l4 -1M1475 550l6 -1M1323 486l4 -0" stroke="#6500ff" stroke-width="1.0" fill="none" opacity="1.0"/>
<path d="M1358 507l4 -1M1387 500l4 -1M1382 482l4 -1M1435 501l6 -2M1311 513l6 -2M1382 467l3 -1M1357 524l4 -1M1379 458l4 -1M1385 497l4 -2M1304 498l4 -1M1404 485l5 -2M1345 506l4 -1M1343 548l6 -1M1438 492l5 -1M1446 513l4 -1M1330 553l6 -1M1292 513l6 -1M1379 476l4 -1M1466 513l4 -0M1325 528l3 -0M1467 519l3 -1M1311 525l6 -2M1354 487l5 -1M1443 458l5 -1M1327 544l4 -1M1348 489l5 -2M1391 477l6 -2M1443 517l4 -1M1408 529l4 -1M1324 534l5 -1M1426 542l3 -1M1351 500l3 -1M1366 475l6 -1M1360 493l6 -2M1388 552l6 -2M1311 466l4 -1M1291 518l4 -1M1345 517l4 -1M1428 539l4 -2M1350 527l3 -1M1428 551l4 -1M1436 537l5 -2M1379 508l4 -1M1320 508l4 -0M1434 453l5 -2M1451 536l4 -1M1439 476l5 -2M1431 545l5 -1M1338 470l4 -1M1438 489l3 -0M1449 532l3 -1M1430 524l3 -1M1413 459l3 -1M1404 455l6 -2M1431 510l6 -2M1438 485l5 -1M1397 564l4 -1M1407 567l6 -2M1401 501l3 -1M1328 458l5 -2M1297 526l5 -1M1409 543l4 -2M1299 522l6 -2M1391 516l4 -1M1308 493l3 -1M1370 525l3 -0M1370 475l4 -2M1333 515l4 -2M1398 517l3 -0M1345 545l3 -1M1402 551l5 -1M1393 524l6 -1M1328 477l6 -1M1365 518l3 -1M1405 464l6 -2M1320 524l6 -1M1365 473l6 -1M1437 486l4 -1M1406 514l4 -1M1337 534l4 -2M1429 479l5 -2M1385 552l5 -1M1419 536l4 -1M1296 512l7 -1M1403 556l5 -1M1318 499l6 -2M1434 554l4 -2M1429 458l6 -2M1336 494l4 -1M1409 464l3 -0M1325 518l4 -1M1451 540l6 -3M1344 471l6 -2M1321 497l6 -1M1344 506l3 -1M1368 492l3 -1M1410 519l6 -1M1465 521l4 -2M1409 507l5 -1M1442 473l5 -2M1356 499l5 -2M1362 480l5 -1M1361 500l5 -1M1417 486l4 -1M1356 463l4 -2M1314 529l4 -2M1353 545l3 -1M1354 551l4 -1M1444 491l5 -1M1334 514l4 -1M1421 489l5 -1M1304 532l6 -1M1306 482l4 -1M1447 550l4 -1M1336 559l6 -1M1432 493l4 -1M1322 505l6 -1M1434 562l5 -1M1423 556l6 -1M1419 557l5 -1M1363 541l4 -2M1400 509l4 -2M1403 531l6 -2M1433 465l4 -1M1374 462l4 -2M1398 537l5 -2M1312 487l5 -2M1462 504l3 -1M1437 564l3 -1M1320 516l3 -2M1347 547l7 -2M1341 538l4 -2M1438 484l5 -1M1424 551l6 -2M1433 563l6 -1M1420 464l4 -1M1440 572l5 -1M1292 513l5 -1M1366 471l6 -1M1301 498l4 -2M1399 539l6 -1M1453 533l6 -1M1367 496l5 -0M1401 521l4 -0M1427 546l7 -2M1313 521l5 -2M1457 541l6 -1M1367 510l3 -1M1305 511l6 -1M1413 559l5 -1M1403 507l3 -1M1322 483l4 -1M1428 539l4 -1M1312 518l4 -1M1462 528l6 -2M1364 465l3 -0M1291 519l5 -1M1390 464l3 -1M1414 486l5 -1M1419 522l4 -1M1396 521l6 -2M1440 509l4 -1M1449 513l5 -1M1363 526l4 -1M1324 492l5 -2M1308 536l3 -1M1377 535l6 -1M1334 496l3 -1M1324 516l6 -2M1336 461l3 -1M1337 515l6 -1M1426 551l4 -1M1326 459l4 -2M1418 493l5 -1M1354 545l5 -1M1419 489l6 -1M1315 485l5 -2M1436 464l6 -2M1341 474l4 -1M1423 512l3 -1M1395 462l3 -1M1438 557l5 -2M1403 492l6 -1M1335 549l5 -1M1339 474l3 -1M1421 458l7 -1M1422 531l3 -1M1438 511l7 -2M1379 512l5 -1M1377 551l4 -1M1291 517l3 -1M1386 564l4 -2M1328 556l6 -1M1341 492l6 -2M1355 515l5 -2M1385 557l6 -2M1358 561l7 -1M1441 486l6 -1M1311 522l5 -1M1416 455l4 -1M1437 539l5 -1M1414 511l4 -1M1395 565l3 -1M1402 460l3 -1M1344 493l6 -2M1313 513l6 -1M1419 490l3 -1M1346 501l5 -2M1429 543l4 -2M1377 531l3 -1M1339 481l3 -1M1318 478l3 -1M1319 527l3 -1M1376 523l5 -2M1321 505l6 -2M1355 526l4 -0M1329 506l3 -1M1341 554l5 -2M1434 456l5 -1M1424 510l3 -1M1407 490l6 -2M1364 521l6 -1M1394 469l3 -1M1373 465l3 -0M1421 486l4 -1M1465 525l4 -1M1311 481l6 -2M1399 566l5 -1M1399 484l4 -1M1457 527l3 -1M1380 466l5 -2M1386 484l6 -2M1413 532l4 -1M1387 461l6 -1M1354 494l5 -2M1331 521l5 -1M1405 568l5 -1M1363 506l5 -2M1435 511l6 -1M1383 455l5 -1M1397 534l5 -2M1422 522l3 -1M1441 470l4 -2M1351 514l5 -2M1347 496l3 -1M1359 503l4 -0M1408 519l5 -1M1406 549l3 -1M1443 464l3 -1M1342 530l3 -1M1316 539l4 -1M1374 513l6 -2M1341 496l4 -1M1402 488l3 -1M1327 527l5 -2M1364 562l6 -1M1298 515l4 -2M1379 498l5 -1M1363 550l3 -0M1455 520l4 -1M1373 527l6 -1M1399 555l6 -2M1430 492l4 -2M1364 477l3 -1M1389 473l6 -1M1392 516l6 -1M1362 481l6 -2M1328 492l3 -1M1414 462l3 -1M1440 492l6 -1M1329 485l4 -1M1376 468l5 -1M1370 463l5 -2M1403 503l4 -1M1451 507l5 -2M1369 470l6 -1M1356 468l6 -1M1322 480l4 -1M1350 557l6 -3M1427 517l4 -1M1340 521l6 -1M1358 512l5 -2M1416 455l4 -2M1295 506l4 -2M1393 503l6 -3M1384 479l4 -1M1454 490l6 -2M1409 511l6 -2M1409 538l3 -1M1354 546l5 -1M1338 551l3 -1M1341 502l6 -1M1432 551l4 -1M1347 548l7 -1M1307 475l7 -1M1341 477l6 -1M1459 531l6 -1M1439 458l5 -2M1358 463l6 -1M1376 520l4 -2M1314 533l6 -3M1414 474l3 -1M1389 556l4 -2M1417 517l3 -1M1425 520l3 -1M1379 473l4 -1M1318 475l4 -1M1357 563l3 -1M1302 525l6 -2M1339 494l5 -2M1398 456l3 -1M1308 494l5 -1M1412 465l3 -1M1330 462l5 -2M1450 519l6 -2M1445 557l5 -2M1443 537l5 -1M1306 530l4 -2M1370 472l5 -2M1326 500l5 -2M1330 514l6 -2M1371 561l6 -1M1371 530l6 -2M1317 515l3 -1M1380 544l7 -1M1423 457l3 -1M1457 510l4 -1M1339 551l4 -1M1448 532l5 -2M1318 496l3 -1M1416 507l6 -2M1307 471l5 -2M1299 483l3 -1M1425 504l6 -2M1432 559l5 -2M1463 506l3 -1M1434 475l5 -1M1350 558l3 -1M1449 553l6 -1M1311 486l5 -1M1440 466l3 -0M1336 504l5 -2M1335 502l6 -2M1381 472l6 -2M1356 456l3 -1M1438 529l3 -1M1398 478l4 -1M1300 513l4 -0M1402 480l6 -1M1369 510l6 -1M1366 537l3 -1M1387 553l4 -2M1296 495l4 -1M1297 511l7 -1M1399 527l4 -1M1427 462l6 -1M1393 495l4 -1M1446 491l6 -2M1439 485l3 -1M1316 464l5 -2M1383 517l3 -1M1338 462l6 -1M1449 536l5 -1M1364 545l7 -1M1441 453l5 -2M1342 557l6 -1M1394 516l6 -2M1398 461l4 -2M1387 516l7 -1M1428 532l5 -2M1303 502l5 -1M1430 567l6 -2M1327 510l5 -0M1335 482l6 -1M1390 533l4 -1M1394 486l3 -1M1385 495l5 -0M1362 564l4 -1M1330 521l5 -2M1445 502l6 -2M1419 497l6 -1M1330 492l5 -1M1378 507l4 -1M1382 559l5 -1M1332 496l4 -1M1434 531l5 -2M1336 530l5 -1M1361 540l5 -1M1402 481l4 -1M1345 534l6 -1M1446 471l3 -1M1407 487l6 -1M1425 554l4 -0M1461 509l6 -2M1433 457l4 -1M1434 515l4 -2M1370 476l4 -0M1412 485l4 -1M1375 504l6 -3M1304 501l6 -2M1367 514l6 -1M1311 476l6 -2M1456 512l5 -1M1319 536l7 -1M1338 524l5 -1M1364 539l3 -1M1345 551l4 -1M1364 500l5 -1M1457 494l6 -3M1318 482l3 -1M1324 550l4 -1M1408 476l3 -0M1315 508l3 -1M1432 545l4 -1M1320 469l4 -1M1299 487l5 -2M1361 499l5 -2M1297 495l4 -2M1390 455l6 -1M1329 468l7 -1M1349 537l4 -1M1388 522l3 -0M1402 523l6 -1M1427 455l5 -1M1372 456l6 -1M1404 500l4 -1M1467 519l6 -3M1410 540l4 -2M1316 508l5 -1M1337 487l3 -1M1438 528l5 -2M1360 471l4 -2M1428 528l6 -1M1439 473l6 -3M1409 470l4 -1M1439 482l6 -1M1310 492l4 -1M1402 529l6 -3M1343 459l4 -1M1357 554l6 -1M1293 514l6 -2M1360 562l6 -1M1449 550l4 -1M1444 489l6 -1M1301 476l6 -2M1454 528l7 -1M1386 525l4 -1M1379 489l5 -3M1351 562l4 -1M1382 475l4 -1M1337 515l3 -1M1424 544l4 -1M1424 556l6 -1M1354 477l3 -1M1296 521l6 -2M1408 465l6 -2M1332 526l6 -2M1304 512l5 -2M1416 518l6 -1M1424 481l6 -1M1356 515l4 -1M1313 518l4 -1M1448 536l6 -1M1362 487l3 -1M1296 486l4 -2M1416 474l4 -1M1330 517l7 -2M1382 458l5 -2M1343 509l6 -1M1428 552l4 -2M1372 486l5 -2M1420 547l5 -2M1350 516l6 -2M1362 542l4 -2M1399 502l3 -1M1425 529l6 -1M1439 493l3 -1M1352 536l6 -1M1344 507l4 -1M1462 522l6 -2M1368 560l3 -1M1415 473l5 -2M1392 556l6 -1M1330 480l5 -2M1411 509l5 -1M1436 557l3 -1M1390 484l4 -1M1302 507l6 -2M1319 507l4 -1M1401 566l6 -2M1428 489l7 -1M1399 542l4 -1M1440 557l6 -2M1440 485l5 -1M1304 472l4 -1M1406 524l5 -2M1408 546l6 -2M1448 538l5 -1M1320 479l6 -3M1348 478l6 -1M1370 491l5 -2M1419 570l4 -1M1397 560l5 -2M1393 557l5 -2M1393 506l6 -1M1382 566l3 -1M1430 569l3 -1M1389 556l3 -1M1446 506l6 -2M1410 558l5 -2M1336 539l4 -2M1315 473l6 -1M1311 479l3 -1M1404 475l5 -2M1337 466l6 -2M1361 460l6 -2M1419 465l4 -1M1399 454l3 -1M1405 483l5 -1M1343 561l4 -1M1356 543l3 -1M1411 501l7 -1M1369 536l6 -3M1332 560l5 -2M1375 473l4 -2M1336 530l6 -2M1437 563l5 -2M1379 528l6 -2M1464 517l5 -2M1375 456l6 -1M1323 546l5 -1M1351 458l5 -2M1405 498l4 -1M1419 480l5 -1M1444 541l4 -1M1345 460l6 -2M1368 487l4 -2M1412 522l6 -1M1405 525l5 -1M1406 458l3 -1M1372 524l6 -1M1352 487l3 -1M1314 512l5 -2M1342 491l5 -2M1354 457l5 -1M1421 505l6 -2M1323 549l4 -2M1424 509l6 -1M1382 470l6 -2M1371 505l3 -1M1431 470l4 -1M1357 504l3 -1M1451 491l4 -2M1437 498l3 -1M1380 563l4 -1M1442 490l4 -1M1450 484l6 -2M1395 524l5 -1M1435 494l3 -1M1418 467l4 -2M1367 491l4 -0M1373 492l4 -1M1392 553l6 -2M1444 561l6 -1M1314 518l4 -2M1435 539l4 -0M1359 480l5 -1M1425 565l5 -2M1452 488l3 -1M1411 548l6 -2M1423 464l6 -2M1411 553l4 -1M1345 461l3 -1M1323 545l4 -2M1411 469l6 -1M1395 568l6 -2M1338 544l5 -1M1347 504l7 -1M1346 472l4 -1M1418 477l5 -1M1386 540l4 -2M1419 557l4 -2M1412 561l5 -1M1450 508l6 -2M1392 522l6 -2M1409 533l4 -0M1371 560l3 -1M1434 462l6 -3M1352 517l4 -0M1341 473l3 -1M1396 498l5 -2M1353 535l6 -1M1355 521l3 -1M1349 475l7 -1M1314 465l5 -1M1409 548l3 -1M1306 463l3 -0M1391 525l6 -2M1424 568l4 -2M1370 532l6 -2M1374 460l7 -1M1332 533l5 -1M1354 555l6 -2M1328 484l5 -2M1370 459l4 -1M1356 487l5 -1M1394 533l6 -1M1370 556l5 -1M1298 480l5 -2M1385 476l4 -2M1366 558l4 -1M1323 546l5 -1M1401 567l6 -2M1396 563l5 -2M1393 562l6 -1M1331 496l3 -1M1343 544l3 -1M1327 459l5 -1M1432 501l5 -0M1407 510l5 -2M1400 552l6 -1M1298 522l5 -2M1423 555l6 -2M1347 530l7 -2M1421 567l4 -1M1353 471l4 -2M1309 520l3 -1M1406 537l4 -1M1456 510l5 -2M1384 550l6 -1M1297 509l5 -1M1438 573l4 -2M1427 525l4 -1M1383 530l6 -1M1339 484l4 -1M1318 479l3 -1M1299 491l5 -1M1419 474l4 -2M1377 520l7 -2M1389 522l3 -1M1381 552l5 -2M1424 559l5 -2M1411 537l3 -0M1361 559l4 -1M1380 533l7 -1M1453 539l4 -1M1429 536l4 -2M1321 520l3 -1M1414 507l4 -1M1305 477l5 -1M1365 519l5 -2M1377 475l4 -1M1406 519l5 -1M1397 453l3 -1M1360 519l6 -2M1368 526l3 -1M1390 555l6 -3M1391 475l5 -2M1383 462l6 -1M1421 453l6 -1M1418 516l3 -0M1430 526l6 -2M1390 549l4 -2M1392 520l5 -2M1410 538l3 -1M1367 498l6 -1M1302 475l7 -1M1423 496l5 -2M1378 464l6 -1M1399 490l3 -0M1429 467l3 -1M1393 462l5 -1M1440 500l7 -1M1398 487l3 -1M1374 543l3 -1M1394 502l4 -0M1317 542l6 -1M1418 546l6 -1M1376 481l3 -1M1342 511l6 -2M1402 500l6 -1M1386 478l5 -1M1418 503l3 -1M1412 512l4 -2M1299 494l5 -2M1293 520l5 -1M1444 512l5 -1M1437 564l6 -1M1358 507l4 -1M1355 519l4 -1M1383 508l5 -2M1313 462l5 -1M1441 543l5 -2M1432 459l6 -1M1406 453l4 -0M1325 553l6 -1M1357 548l6 -1M1311 480l7 -2M1315 460l6 -1M1336 479l5 -1M1408 549l5 -1M1341 478l4 -1M1414 499l3 -0M1383 555l6 -1M1389 508l6 -1M1385 567l4 -1M1325 501l6 -2M1430 516l3 -1M1313 509l3 -1M1328 539l4 -1M1380 456l4 -0M1339 473l4 -1M1430 563l6 -1M1357 557l5 -1M1411 483l5 -2M1419 532l5 -2M1369 469l6 -1M1467 525l6 -3M1368 528l7 -1M1448 527l3 -1M1422 549l6 -1M1417 520l6 -1M1340 478l3 -1M1439 465l5 -2M1414 518l3 -0M1402 459l4 -1M1369 530l6 -2M1336 458l6 -2M1427 506l4 -1M1404 470l3 -0M1439 563l6 -1M1331 529l4 -2M1344 479l5 -2M1411 484l4 -1M1364 465l5 -2M1330 458l6 -2M1300 513l3 -1M1325 484l6 -2M1339 495l5 -2M1326 523l3 -1M1352 482l3 -1M1398 513l4 -2M1437 455l4 -2M1402 540l3 -0M1386 546l4 -1M1443 535l6 -2M1413 499l7 -1M1308 465l4 -1M1402 545l6 -1M1424 564l6 -3M1414 536l6 -1M1369 488l5 -1M1394 549l6 -2M1440 519l4 -0M1451 500l5 -1M1359 521l6 -1M1362 463l6 -2M1391 462l5 -1M1380 555l6 -2M1430 504l3 -1M1377 485l3 -1M1422 564l6 -1M1319 483l4 -2M1399 482l6 -2M1463 522l6 -1M1435 472l4 -2M1363 475l5 -1M1421 568l6 -2M1380 474l4 -0M1453 485l5 -1M1394 503l7 -1M1396 467l3 -1M1333 492l6 -2M1329 495l3 -2M1363 498l4 -1M1437 531l5 -1M1410 531l4 -2M1310 518l6 -1M1310 519l6 -2M1360 563l7 -2M1298 498l5 -1M1307 466l4 -2M1381 480l6 -3M1379 466l6 -1M1424 548l4 -1M1361 541l3 -1M1355 556l5 -1M1426 470l4 -1M1352 498l6 -3M1440 508l7 -2M1356 504l3 -1M1385 561l5 -1M1424 557l3 -1M1353 529l6 -1M1402 535l5 -1M1317 547l4 -1M1430 457l6 -2M1313 535l5 -1M1441 489l5 -2M1439 570l5 -1M1297 496l6 -2M1295 520l3 -1M1308 506l6 -2M1385 486l5 -1M1404 471l6 -3M1421 559l3 -1M1346 515l5 -1M1407 482l4 -1M1378 523l5 -2M1374 520l7 -1M1411 546l5 -2M1391 470l4 -1M1320 527l4 -0M1410 493l6 -1M1452 493l6 -3M1312 509l5 -1M1361 555l5 -1M1353 499l6 -1M1414 562l3 -1M1421 473l4 -1M1394 473l7 -1M1380 516l4 -2M1377 564l6 -2M1385 465l5 -1M1393 555l5 -1M1409 530l3 -1M1437 514l6 -2M1343 515l4 -1M1376 525l3 -1M1328 513l4 -1M1366 559l7 -1M1296 522l4 -1M1322 473l5 -2M1435 490l5 -1M1451 531l4 -2M1468 519l4 -2M1299 467l5 -2M1369 536l6 -1M1418 506l5 -1M1387 502l5 -1M1367 487l4 -1M1326 532l7 -2M1309 531l5 -2M1371 509l5 -1M1392 466l3 -1M1383 475l6 -2M1328 509l3 -1M1370 553l5 -2M1324 484l5 -2M1414 463l3 -1M1398 517l3 -1M1375 508l7 -1M1358 468l3 -1M1432 506l5 -1M1429 519l5 -2M1360 460l3 -1M1372 552l3 -0M1355 550l6 -1M1456 515l4 -1M1340 559l6 -3M1302 463l6 -3M1410 505l4 -2M1411 453l5 -1M1390 529l6 -1M1382 491l5 -2M1330 532l5 -1M1390 561l5 -1M1323 461l5 -1M1375 474l6 -1M1455 492l5 -0M1430 506l6 -2M1343 543l3 -1M1463 521l4 -0M1321 541l6 -1M1386 554l4 -1M1365 494l3 -1M1383 511l3 -1M1321 478l6 -2M1357 464l4 -2M1456 514l5 -1M1406 508l7 -1M1327 502l4 -2M1373 496l5 -2M1317 488l3 -1M1300 488l5 -2M1302 468l4 -1M1405 567l3 -1M1337 547l5 -1M1437 514l3 -1M1400 473l5 -2M1338 555l6 -1M1394 560l3 -1M1345 503l6 -1M1359 552l5 -2M1306 515l6 -2M1296 488l3 -1M1307 531l4 -1M1333 497l5 -2M1399 480l5 -1M1401 464l3 -1M1389 551l6 -2M1374 507l6 -2M1453 506l3 -1M1373 471l3 -1M1378 495l3 -1M1319 545l6 -2M1357 544l5 -1M1425 498l3 -1M1344 457l4 -1M1305 467l4 -1M1457 541l5 -2M1442 555l6 -1M1350 548l4 -1M1350 483l6 -1M1324 538l5 -2M1420 516l4 -1M1325 499l6 -1M1415 490l6 -2M1328 485l6 -1M1425 520l5 -2M1430 542l5 -1M1406 567l7 -1M1309 492l5 -1M1448 484l4 -0M1331 469l7 -1M1359 532l4 -2M1430 493l4 -2M1363 564l6 -1M1434 517l6 -2M1434 477l5 -2M1388 515l4 -1M1422 461l3 -1M1320 508l5 -2M1384 512l5 -1M1338 480l4 -2M1439 546l6 -2M1376 526l5 -2M1416 457l5 -2M1365 519l6 -1M1438 482l6 -1M1352 542l6 -3M1432 535l5 -1M1449 536l5 -2M1364 550l5 -1M1345 466l4 -1M1305 501l5 -2M1335 472l4 -1M1375 462l4 -2M1299 521l4 -1M1387 487l4 -1M1468 522l5 -2M1409 544l5 -0M1369 488l4 -1M1364 479l7 -1M1393 509l3 -1M1427 551l4 -1M1354 503l5 -1M1415 484l3 -1M1340 539l4 -1M1361 560l5 -2M1444 543l5 -1M1316 473l6 -1M1315 538l6 -1M1326 469l3 -1M1373 502l3 -1M1331 524l7 -1M1394 461l4 -1M1331 490l6 -1M1336 522l4 -1M1324 537l6 -1M1398 537l4 -1M1395 526l6 -2M1359 537l6 -1M1340 552l4 -1M1318 543l4 -1M1307 496l7 -1M1385 552l6 -1M1392 485l4 -1M1421 538l6 -3M1413 543l4 -1M1403 458l3 -1M1343 484l3 -1M1361 457l6 -1M1442 522l6 -1M1324 477l5 -2M1332 501l4 -1M1422 537l7 -1M1430 473l5 -2M1398 458l3 -1M1321 545l5 -2M1408 465l6 -1M1409 466l5 -2M1446 546l6 -1M1334 506l5 -2M1416 545l4 -1M1315 507l6 -3M1445 536l5 -2M1340 560l5 -1M1417 484l5 -1M1395 477l7 -1M1418 492l6 -2M1367 562l3 -1M1360 513l5 -1M1459 524l4 -0M1304 463l4 -1M1395 459l3 -1M1296 516l5 -2M1397 473l6 -2M1335 470l5 -0M1439 520l5 -1M1321 467l5 -1M1433 529l6 -2M1361 464l5 -2M1376 491l5 -1M1423 469l4 -1M1321 464l5 -1M1437 568l5 -1M1370 481l4 -0M1404 485l6 -1M1398 466l5 -1M1293 515l6 -1M1319 491l5 -1M1366 459l5 -2M1335 502l4 -1M1448 482l6 -1M1348 461l6 -2M1399 538l4 -0M1318 544l3 -1M1354 487l5 -1M1331 468l6 -2M1305 487l5 -1M1409 555l3 -1M1418 544l6 -3M1321 483l6 -1M1321 462l4 -2M1394 468l4 -1M1362 487l4 -1M1451 517l4 -1M1444 479l3 -1M1370 461l4 -1M1378 460l4 -1M1410 540l6 -1M1446 533l6 -1M1340 554l5 -2M1384 491l6 -2M1418 480l6 -1M1324 531l4 -0M1418 511l4 -1M1437 553l6 -2M1315 535l4 -0M1316 505l5 -2M1376 486l6 -3M1320 496l6 -1M1377 516l4 -0M1375 534l4 -0M1421 561l4 -1M1379 509l5 -1M1366 543l7 -1M1423 480l6 -2M1408 562l4 -1M1324 469l3 -1M1430 492l7 -2M1382 558l6 -2M1382 517l5 -2M1332 559l5 -2M1405 539l4 -1M1310 496l7 -2M1360 510l5 -2M1376 560l5 -2M1420 519l5 -1M1399 496l4 -1M1345 519l5 -1M1431 553l6 -1M1412 559l6 -3M1348 551l7 -1M1372 557l7 -1M1431 476l7 -1M1410 537l4 -1M1362 546l3 -0M1331 503l4 -2M1384 527l4 -1M1354 560l4 -1M1342 502l7 -1M1437 564l4 -1M1379 521l6 -1M1447 536l5 -1M1425 477l5 -1M1305 489l6 -3M1459 521l6 -2M1308 525l5 -2M1441 470l6 -3M1325 527l3 -1M1346 482l6 -3M1382 477l5 -2M1428 550l4 -1M1397 474l5 -1M1316 485l4 -1M1399 508l7 -1M1428 526l4 -1M1392 488l5 -1M1309 530l6 -3M1339 498l6 -1M1373 525l4 -1M1312 542l4 -2M1454 503l6 -2M1367 499l6 -2M1325 496l5 -2M1410 519l6 -1M1366 525l7 -2M1405 455l7 -1M1377 545l5 -1M1332 533l6 -1M1412 506l3 -1M1371 513l6 -1M1325 546l4 -1M1446 518l5 -1M1433 493l4 -0M1408 476l5 -0M1389 539l5 -1M1387 460l4 -0M1411 514l5 -1M1416 508l4 -2M1425 483l4 -1M1406 569l5 -1M1319 544l6 -2M1385 540l6 -1M1343 521l4 -1M1394 459l5 -1M1378 521l7 -2M1343 537l4 -2M1430 454l5 -2M1350 465l4 -2M1410 492l3 -1M1324 549l6 -2M1433 532l4 -1M1389 535l5 -1M1350 554l3 -1M1433 544l4 -1M1439 545l7 -2M1448 532l6 -1M1305 473l6 -2M1437 567l7 -2M1406 454l3 -1M1410 510l5 -1M1436 514l5 -2M1342 518l3 -2M1427 454l3 -1M1358 458l5 -0M1432 466l6 -2M1391 472l3 -1M1321 522l4 -1M1315 485l6 -2M1404 473l4 -2M1298 478l4 -1M1382 476l6 -1M1402 554l4 -2M1336 478l5 -2M1392 464l4 -1M1377 547l6 -1M1353 517l6 -1M1468 517l5 -1M1355 488l7 -1M1446 545l6 -1M1427 558l5 -1M1324 471l5 -2M1359 495l4 -1M1404 563l5 -2M1457 505l6 -2M1347 514l5 -1M1371 546l6 -2M1425 499l4 -0M1451 542l5 -2M1384 535l6 -2M1314 524l4 -2M1363 526l6 -3M1332 538l5 -2M1323 514l5 -2M1397 533l6 -2M1438 520l5 -1M1350 466l3 -1M1379 545l6 -1M1328 481l4 -1M1420 490l6 -1M1394 506l6 -1M1408 454l6 -1M1302 496l4 -1M1348 503l5 -1M1408 507l3 -1M1420 532l5 -2M1447 499l6 -1M1317 502l4 -1M1360 561l3 -0M1298 514l3 -1M1424 522l5 -1M1331 507l4 -1M1394 505l5 -1M1364 531l6 -2M1331 514l6 -1M1341 556l4 -0M1448 535l4 -1" stroke="#6500ff" stroke-width="1.0" fill="none" opacity="1.0"/>
<path d="M1530 566l4 -1M1534 557l3 -2M1531 562l5 -2M1533 575l3 -1M1531 581l5 -1M1518 561l3 -2M1523 547l4 -1M1511 555l4 -2M1542 598l3 -1M1519 594l5 -3M1535 567l5 -2M1492 527l5 -2M1533 594l6 -2M1522 571l5 -1M1513 567l6 -3M1527 549l3 -1M1532 566l4 -2M1542 591l6 -2M1522 599l4 -3M1530 577l5 -3M1524 574l4 -2M1530 601l5 -2M1524 562l4 -1M1544 575l5 -2M1515 544l4 -3M1513 550l3 -2M1516 554l5 -3M1511 557l5 -4M1511 556l5 -4M1536 573l5 -3M1542 585l3 -2M1525 583l2 -2M1527 593l3 -2M1519 573l3 -2M1536 564l6 -2M1512 562l5 -3M1542 572l4 -1M1525 587l3 -1M1509 538l6 -2M1538 579l3 -1M1533 585l5 -2M1540 594l5 -2M1535 594l4 -1M1517 566l4 -2M1515 542l4 -2M1535 584l5 -3M1542 594l5 -4M1529 554l3 -2M1513 543l5 -3M1523 587l3 -1M1491 525l4 -2M1532 563l5 -1M1537 595l5 -2M1506 535l5 -1M1519 587l5 -3M1529 592l6 -1M1527 572l4 -2M1510 552l4 -3M1544 576l6 -3M1522 595l5 -1M1530 583l6 -3M1522 566l6 -2M1531 594l3 -1M1509 537l5 -2M1534 570l4 -2M1533 592l5 -3M1515 564l6 -3M1544 561l7 -2M1526 571l4 -2M1518 559l4 -1M1512 559l6 -2M1525 598l5 -2M1539 567l5 -2M1534 565l7 -2M1524 549l6 -3M1533 588l3 -1M1510 541l3 -1M1544 603l4 -1M1518 547l3 -2M1523 574l5 -2M1512 556l5 -2M1520 557l5 -3M1531 566l5 -3M1529 559l4 -1M1536 573l5 -2M1531 590l6 -1M1526 599l6 -2M1519 562l6 -3M1501 532l4 -2M1523 590l5 -4M1532 561l6 -4M1531 565l5 -1M1535 571l3 -2M1518 568l5 -1M1527 565l5 -3M1525 600l7 -1M1539 582l5 -1M1521 591l4 -3M1533 600l4 -3M1510 546l4 -3M1539 580l6 -1M1536 594l6 -2M1536 563l4 -2M1536 558l5 -3M1521 585l4 -2M1541 594l5 -4M1524 580l6 -3M1538 586l2 -2M1528 562l5 -1M1523 571l5 -2M1544 603l3 -1M1530 554l3 -2M1541 586l3 -2M1519 586l3 -2M1521 559l4 -2M1530 555l3 -3M1523 589l7 -1M1517 571l5 -2M1536 591l5 -3M1529 584l4 -3" stroke="#6500ff" stroke-width="1.0" fill="none" opacity="1.0"/>
<path d="M1275 482l5 -6M1267 464l5 -7M1314 479l9 -12M1267 424l4 -5M1255 488l5 -6M1345 458l6 -8M1265 456l5 -8M1301 437l6 -5M1310 444l8 -7M1336 438l6 -8M1310 480l7 -7M1332 440l4 -6M1330 431l8 -12M1317 436l5 -4M1332 459l4 -5M1284 459l3 -6M1334 443l9 -9M1318 426l9 -13M1321 441l7 -8M1287 498l8 -8M1295 439l6 -5M1359 430l11 -11M1285 455l8 -13M1351 438l6 -9M1320 460l5 -9M1339 444l9 -9M1266 422l7 -12M1259 456l7 -7M1316 430l7 -11M1322 453l6 -7M1292 423l6 -11M1322 486l7 -8M1326 471l5 -8M1334 477l7 -12M1296 478l6 -9M1312 450l7 -8M1324 460l8 -11M1282 469l6 -10M1282 452l7 -12M1324 462l5 -6M1308 437l4 -7M1291 482l6 -9M1256 463l6 -7M1267 473l7 -8M1266 460l6 -9M1287 447l5 -6M1291 492l12 -10M1308 468l3 -6M1331 431l7 -11M1276 467l6 -10M1316 458l4 -6M1258 472l10 -12M1301 466l7 -9M1243 446l8 -8M1280 488l8 -9" stroke="#00cbff" stroke-width="1.0" fill="none" opacity="1.0"/>
<path d="M1245 455l6 -11M1262 461l5 -6M1272 468l4 -5M1288 490l7 -9M1317 448l5 -8M1254 446l8 -12M1279 477l12 -10M1253 442l3 -7M1319 440l9 -8M1290 457l9 -11M1254 487l5 -7M1299 475l5 -8M1275 488l9 -12M1333 442l5 -8M1289 433l6 -7M1260 490l8 -13M1286 481l9 -9M1278 483l5 -8M1248 473l4 -5M1284 497l11 -10M1256 441l6 -11M1298 487l5 -7M1335 440l8 -13M1300 426l10 -12M1285 473l3 -6M1242 439l3 -7M1286 479l9 -11M1301 495l9 -9M1260 431l5 -7M1273 433l4 -8M1248 443l5 -9M1247 443l6 -11M1347 452l7 -8M1293 436l8 -9M1348 442l5 -5M1339 456l11 -11M1249 468l11 -11M1323 432l7 -14M1322 468l11 -11M1282 480l4 -9M1325 449l7 -7M1290 436l10 -12M1334 480l5 -4M1294 443l6 -11M1296 488l6 -9M1251 433l7 -7M1247 449l4 -8M1306 425l7 -8M1326 483l7 -6M1308 487l4 -7M1254 427l5 -9" stroke="#0066ff" stroke-width="1.0" fill="none" opacity="1.0"/>
<path d="M1291 447l6 -10M1303 463l4 -7M1278 492l9 -12M1296 478l11 -10M1304 450l11 -10M1260 479l5 -11M1267 448l6 -10M1316 452l4 -8M1310 459l6 -9M1255 482l8 -9M1311 429l5 -7M1284 469l4 -7M1297 432l6 -10M1266 433l5 -6M1313 474l7 -12M1327 472l8 -11M1272 425l10 -11M1301 444l5 -9M1299 421l3 -5M1317 433l7 -6M1267 486l7 -11M1349 431l6 -6M1271 488l7 -6M1333 457l4 -5M1349 452l6 -9M1282 487l9 -10M1327 430l6 -5M1246 425l4 -7M1250 425l5 -6M1265 487l7 -9M1306 476l10 -12M1330 431l8 -7M1270 476l5 -11M1289 492l10 -11M1328 474l6 -6M1269 442l6 -9M1270 449l5 -9M1248 487l8 -8M1288 458l8 -9M1285 473l4 -5M1306 471l6 -12M1307 428l5 -7M1314 437l9 -12M1288 434l11 -11M1278 433l9 -12M1286 490l9 -12M1298 451l6 -11M1351 436l4 -7M1343 455l10 -11M1312 486l7 -9M1277 423l6 -8M1317 448l5 -8M1308 493l8 -8" stroke="#0099ff" stroke-width="1.0" fill="none" opacity="1.0"/>
<path d="M1284 464l6 -9M1253 452l11 -12M1316 457l9 -11M1305 466l12 -10M1344 450l5 -7M1326 462l8 -7M1261 436l5 -10M1345 466l4 -7M1274 465l7 -6M1323 462l5 -5M1268 450l6 -7M1355 441l10 -12M1277 480l4 -7M1302 462l4 -5M1243 429l5 -6M1283 490l7 -8M1250 439l6 -8M1325 453l5 -8M1256 490l4 -9M1278 464l7 -12M1274 434l8 -9M1274 473l4 -6M1299 481l5 -6M1312 485l5 -9M1329 456l4 -8M1300 463l5 -7M1317 486l8 -13M1242 427l7 -14M1304 428l6 -11M1274 469l7 -10M1298 420l5 -6M1324 466l5 -6M1344 465l5 -10M1315 442l3 -6M1273 465l7 -13M1306 476l7 -13M1283 440l5 -10M1290 476l6 -6M1274 475l7 -14M1319 469l10 -9M1312 428l7 -9M1333 462l7 -6M1291 430l7 -11M1245 426l4 -7M1304 430l6 -8M1265 451l6 -7M1297 422l6 -6M1295 472l3 -5M1323 478l4 -8M1289 453l5 -8M1258 459l9 -11M1280 447l5 -5M1331 463l7 -8M1331 477l5 -5M1256 487l4 -8M1304 489l3 -7M1326 462l5 -9M1264 472l4 -5M1305 451l7 -10M1315 466l9 -12M1335 430l8 -9M1318 426l7 -9M1257 476l8 -9M1251 490l9 -11M1280 451l6 -6M1274 460l5 -7M1312 485l8 -9M1323 477l11 -11M1285 454l6 -5M1309 441l4 -5M1294 486l9 -13M1274 463l5 -4M1299 449l8 -7M1335 462l5 -9M1340 438l8 -12M1328 470l7 -9M1273 453l7 -12M1296 491l10 -10M1312 429l7 -9M1252 478l8 -10M1301 469l10 -9M1300 484l5 -8M1350 430l6 -7M1279 485l3 -6M1251 488l5 -5M1321 429l7 -7M1272 464l6 -7M1353 446l7 -11M1313 435l5 -7M1277 456l6 -8M1245 434l6 -9M1355 442l6 -12M1257 441l6 -8M1254 425l6 -11M1324 473l11 -11M1285 453l10 -9M1278 471l8 -11M1285 428l10 -9M1314 438l10 -10M1340 438l4 -5M1260 479l8 -13M1306 462l7 -13M1299 421l9 -12M1250 447l6 -9M1359 432l4 -6M1336 438l5 -8" stroke="#00ffff" stroke-width="1.0" fill="none" opacity="1.0"/>
<path d="M1257 483l5 -10M1277 470l6 -12M1287 445l7 -10M1270 460l6 -8M1320 485l6 -9M1311 443l7 -14M1268 426l8 -10M1256 467l5 -8M1312 448l5 -10M1359 435l4 -6M1276 488l6 -5M1273 456l5 -5M1239 427l8 -7M1276 436l8 -14M1338 432l7 -8M1292 463l4 -5M1267 482l5 -5M1247 459l10 -11M1323 485l7 -6M1274 470l9 -13M1247 442l4 -7M1334 442l7 -10M1355 430l5 -8M1251 433l8 -12M1284 428l9 -12M1317 430l4 -7M1296 424l7 -7M1331 445l8 -10M1309 439l7 -12M1291 495l5 -9M1263 471l5 -10M1267 448l8 -11M1344 458l4 -9M1345 454l9 -10M1324 485l7 -9M1316 471l7 -6M1333 445l4 -5M1265 443l7 -12M1327 466l7 -8M1264 465l7 -6M1291 436l6 -8M1286 461l11 -12M1290 445l7 -11M1249 475l3 -5M1321 434l9 -8M1286 451l8 -8M1304 465l7 -14M1250 465l8 -8M1333 438l4 -7M1285 421l9 -8M1296 485l10 -12M1256 469l8 -13M1322 477l7 -11M1291 443l6 -10M1307 483l3 -6" stroke="#6500ff" stroke-width="1.0" fill="none" opacity="1.0"/>
<path d="M1292 263l3 -4M1274 280l3 -4M1276 276l5 -3M1265 276l5 -2M1288 251l1 -3M1314 265l1 -3M1283 270l4 -2M1269 255l1 -2M1298 254l3 -2M1303 277l2 -2M1278 284l2 -1M1312 261l2 -1M1261 274l3 -3M1267 264l1 -3M1281 264l4 -3M1265 256l3 -1M1279 266l3 -3M1265 258l3 -1M1306 276l2 -4M1291 283l2 -3M1258 255l2 -2M1264 265l4 -2M1269 254l3 -2M1301 261l5 -3M1259 273l1 -3M1285 253l4 -2M1273 270l5 -2M1277 268l3 -4M1268 276l3 -3M1286 277l2 -3M1309 274l1 -2M1277 291l3 -2M1262 254l3 -2M1261 269l3 -2M1266 256l1 -3M1297 269l5 -2M1302 264l4 -4M1283 285l2 -3M1283 286l2 -2M1277 261l4 -3M1273 277l2 -2M1273 253l2 -1M1280 291l2 -3M1293 280l1 -2M1291 271l3 -2M1290 258l3 -2M1278 279l2 -4M1268 259l3 -4M1280 262l3 -3M1285 255l2 -3M1260 266l4 -4M1283 267l3 -3M1268 280l3 -4M1266 264l3 -1M1299 280l1 -2M1279 253l5 -3M1288 276l2 -3M1266 257l2 -1M1291 282l4 -3M1285 278l2 -3M1259 264l2 -2M1278 280l3 -1M1286 278l2 -3M1256 255l5 -3M1274 268l4 -3M1315 266l4 -3M1275 258l2 -4M1297 256l3 -4M1275 265l2 -1M1274 285l2 -4M1281 281l4 -3M1286 253l4 -3M1311 262l4 -2M1302 277l4 -3M1298 270l3 -3M1293 280l5 -3M1276 280l3 -5M1298 265l3 -3M1306 277l3 -5M1281 264l3 -2M1288 280l4 -2M1311 267l3 -2M1267 259l5 -2M1264 253l3 -5M1269 267l2 -1M1311 266l2 -3M1281 279l4 -4M1288 282l3 -2M1272 279l3 -5M1296 263l2 -1M1305 268l4 -3M1290 278l3 -1M1281 264l4 -4M1265 267l2 -4M1298 274l4 -3M1268 265l2 -3M1286 264l1 -2M1315 269l5 -2M1266 278l4 -2M1266 266l3 -4M1281 270l4 -2M1292 260l4 -5M1264 279l4 -4M1287 275l2 -3M1295 268l2 -2M1307 271l3 -2M1262 262l1 -3M1283 270l2 -2M1287 269l5 -3M1293 259l2 -2M1309 262l2 -2M1262 268l1 -2M1287 285l3 -2M1270 272l3 -3M1275 291l2 -2M1289 274l3 -5M1265 253l2 -4M1279 293l2 -4M1284 274l3 -1M1288 255l2 -1M1287 258l2 -4M1290 287l2 -3M1319 264l2 -1M1288 277l3 -3M1305 267l4 -3M1270 261l4 -2M1309 256l4 -3M1288 281l1 -3M1280 266l3 -5M1275 276l2 -2M1283 291l4 -2M1294 257l2 -3M1277 255l3 -3M1270 293l3 -2M1287 273l1 -2M1294 264l2 -1M1274 269l2 -3M1294 275l1 -2M1276 279l4 -4M1304 279l2 -1M1274 276l1 -2M1267 257l1 -2M1299 269l3 -2M1265 259l4 -4M1253 260l2 -2M1292 254l2 -4M1269 272l3 -4M1298 276l3 -4M1285 277l5 -2M1272 258l3 -1M1291 263l2 -2M1265 264l2 -3M1300 262l3 -2M1271 290l3 -5M1295 279l4 -4M1274 281l1 -2M1274 291l2 -1M1293 272l3 -2M1279 261l4 -4M1302 269l4 -3M1295 251l1 -2M1296 280l1 -3M1269 281l5 -3M1297 276l1 -2M1316 264l4 -3M1266 272l4 -4M1298 253l3 -5M1301 276l4 -2M1281 267l2 -4M1283 253l2 -2M1294 279l1 -2M1265 272l2 -5M1292 278l5 -3M1287 275l3 -4M1291 275l2 -4M1280 292l4 -3M1263 259l2 -3M1281 283l4 -3M1258 266l1 -3M1283 253l1 -2M1264 275l1 -3M1279 265l3 -2M1318 268l3 -2M1308 274l3 -5M1276 287l4 -4M1278 254l2 -1M1287 266l4 -2M1264 278l1 -2M1270 266l4 -4M1265 266l1 -3M1262 268l5 -2M1274 262l2 -4M1258 258l2 -1M1296 255l1 -2M1294 277l5 -2M1283 254l2 -3M1307 269l5 -2M1285 273l3 -5M1268 273l2 -1M1293 263l2 -5M1284 275l2 -3M1262 257l2 -1M1291 278l2 -4M1302 254l2 -1M1306 268l5 -2M1268 267l3 -4M1300 272l2 -5M1263 268l2 -3M1277 271l3 -2M1258 253l4 -2M1302 251l2 -4M1310 270l2 -2M1288 285l4 -2M1265 268l1 -4M1265 267l2 -1M1286 261l3 -2M1299 273l3 -2M1275 271l3 -2M1278 283l2 -1M1263 271l3 -3M1306 278l3 -2M1267 261l2 -3M1252 257l4 -2M1318 269l4 -3M1278 253l3 -2M1314 265l4 -4M1289 280l2 -1M1255 260l1 -2M1268 262l3 -3M1266 265l2 -1M1275 283l2 -3M1299 263l2 -3M1305 256l4 -2M1303 271l3 -3M1262 256l4 -3M1305 266l2 -2M1272 269l4 -4M1274 288l3 -2M1272 280l2 -1M1297 281l3 -3M1282 264l1 -3M1271 288l2 -3M1273 265l2 -4M1266 264l3 -5M1279 291l3 -3M1255 261l3 -2M1289 288l4 -2M1313 270l2 -5M1282 265l5 -3M1273 254l4 -2M1302 265l4 -4M1285 287l2 -2M1279 257l1 -2M1262 278l3 -4M1320 267l2 -3M1294 267l2 -1M1274 280l2 -3M1289 255l5 -3M1282 266l4 -3M1309 261l3 -2" stroke="#ff0000" stroke-width="1.0" fill="none" opacity="1.0"/>
<path d="M1356 285l6 -11M1392 309l5 -9M1375 294l5 -11M1400 308l5 -10M1374 300l3 -6M1399 311l4 -9M1362 288l4 -9M1362 290l2 -5M1384 307l5 -8M1380 297l3 -5M1406 316l3 -9M1359 292l4 -11M1376 298l6 -11M1407 317l4 -10M1361 287l2 -4M1407 311l6 -11M1391 307l6 -10M1373 298l6 -10M1403 307l6 -11M1363 292l3 -6M1380 304l3 -7M1398 313l2 -7M1391 301l4 -12M1405 309l4 -10M1391 305l2 -6M1391 308l4 -9M1394 307l3 -6M1372 295l2 -6M1401 305l4 -10M1372 293l4 -7M1374 297l2 -6M1363 294l5 -10M1355 286l4 -9M1355 285l5 -12M1355 292l4 -8M1359 285l4 -6M1371 299l5 -12M1370 298l5 -13M1388 303l3 -6M1382 300l2 -6M1356 290l3 -9M1385 307l3 -7M1368 294l3 -6M1403 308l5 -12M1395 306l3 -6M1384 300l3 -9M1393 307l4 -7M1354 294l4 -8M1388 308l6 -12M1400 311l3 -8M1395 308l6 -12M1403 310l2 -5M1362 292l7 -12M1380 300l4 -9M1364 292l6 -11M1407 317l4 -12M1393 310l6 -11M1412 310l4 -8M1354 285l5 -13M1390 302l3 -7M1371 296l3 -9M1391 311l4 -11M1406 313l2 -7M1400 311l2 -5M1364 290l5 -12M1388 307l4 -9M1369 293l5 -10M1407 314l4 -6M1372 292l4 -9M1364 288l3 -7M1387 301l4 -10M1398 304l4 -12" stroke="#ffcc00" stroke-width="1.0" fill="none" opacity="1.0"/>
<path d="M1406 325l3 -5M1392 315l4 -7M1399 323l5 -9M1403 321l4 -11M1384 315l3 -8M1372 303l3 -5M1389 316l4 -13M1377 315l3 -7M1348 302l3 -6M1364 307l3 -6M1403 324l4 -7M1399 316l3 -8M1349 298l3 -7M1392 317l5 -12M1359 300l5 -12M1370 304l5 -8M1368 301l6 -12M1354 300l3 -5M1403 326l2 -5M1358 298l6 -10M1355 299l4 -6M1401 326l5 -8M1375 309l5 -13M1377 310l4 -8M1369 306l4 -9M1360 306l5 -12M1358 300l4 -13M1359 306l7 -12M1393 320l3 -6M1390 316l4 -7M1361 305l3 -5M1409 326l2 -6M1360 301l4 -8M1376 312l6 -10M1362 308l4 -10M1368 309l4 -8M1369 311l4 -10M1408 322l4 -8M1405 320l7 -12M1364 300l5 -11M1399 315l6 -12M1405 324l4 -9M1367 305l3 -8M1391 320l5 -10M1351 303l4 -9M1406 323l4 -7M1358 302l3 -6M1398 324l2 -6M1402 325l4 -8M1387 317l5 -10M1377 306l6 -13M1352 295l5 -11M1408 328l3 -8M1370 306l3 -6M1385 312l3 -7M1395 323l6 -11M1403 323l5 -11M1396 317l3 -5M1387 313l3 -5M1397 324l3 -4M1362 299l4 -12M1367 305l2 -5M1409 321l3 -6M1403 325l5 -11M1360 306l6 -12M1398 315l5 -9M1386 318l4 -13M1391 319l4 -9" stroke="#ffff00" stroke-width="1.0" fill="none" opacity="1.0"/>
<path d="M1401 303l2 -5M1403 298l4 -7M1382 288l4 -7M1394 295l2 -7M1407 303l4 -9M1404 304l5 -9M1367 288l6 -10M1411 302l4 -11M1389 293l2 -5M1388 290l6 -10M1372 282l4 -10M1407 301l5 -13M1411 303l4 -7M1372 283l3 -7M1380 292l3 -5M1377 286l5 -10M1411 299l4 -6M1387 292l4 -10M1411 307l5 -9M1378 294l5 -8M1359 279l4 -7M1368 281l4 -10M1359 283l4 -8M1406 297l5 -12M1362 278l3 -5M1397 294l3 -5M1362 281l3 -6M1373 290l4 -7M1414 310l3 -9M1385 291l3 -6M1367 282l4 -7M1379 288l5 -10M1414 301l5 -10M1363 281l2 -6M1388 295l2 -6M1388 292l7 -12M1360 278l5 -8M1360 277l6 -10M1391 299l5 -12M1415 301l4 -11M1390 289l3 -7M1398 297l4 -7M1368 282l4 -10M1367 281l3 -8M1405 305l4 -6M1413 306l5 -12M1411 304l3 -7M1383 293l2 -5M1413 306l3 -9M1411 306l5 -10M1413 305l4 -7M1389 297l3 -5M1384 295l5 -13M1394 292l4 -11" stroke="#ff9900" stroke-width="1.0" fill="none" opacity="1.0"/>
<path d="M1393 344l2 -6M1395 341l6 -12M1400 344l5 -9M1393 339l6 -11M1380 330l4 -7M1394 335l3 -6M1388 339l4 -10M1366 330l6 -11M1389 339l3 -5M1386 340l4 -7M1382 329l5 -9M1383 335l4 -9M1377 334l3 -6M1353 316l5 -11M1389 337l4 -10M1366 331l5 -12M1354 317l3 -6M1350 321l5 -12M1370 333l3 -6M1380 335l5 -9M1357 320l3 -9M1379 332l7 -12M1372 327l4 -11M1347 323l4 -9M1377 331l5 -10M1353 321l3 -7M1344 321l4 -12M1391 339l4 -10M1343 320l4 -11M1349 318l3 -6M1363 325l2 -5M1365 324l4 -9M1368 327l5 -13M1359 321l5 -11M1387 342l3 -10M1384 340l3 -6M1391 336l6 -11M1347 317l5 -9M1368 328l3 -10M1340 318l5 -11M1374 330l3 -6M1342 312l4 -7M1390 343l4 -7M1367 327l4 -11M1371 334l3 -8M1384 332l4 -10M1357 320l2 -7M1372 329l4 -10M1354 325l4 -7M1361 322l6 -9M1343 314l4 -13M1369 326l3 -8M1353 322l5 -9M1377 335l5 -9M1352 323l2 -5M1374 333l5 -12M1395 336l3 -8M1383 331l3 -6M1401 340l4 -9M1375 330l5 -10M1378 328l3 -7M1348 320l4 -7M1364 321l2 -6M1368 331l3 -7M1347 317l5 -9M1361 330l3 -10M1391 341l5 -9M1378 330l3 -8M1350 320l5 -8M1398 340l6 -10M1374 330l3 -6M1358 319l4 -9M1396 342l3 -7" stroke="#99ff00" stroke-width="1.0" fill="none" opacity="1.0"/>
<path d="M1370 337l3 -6M1349 325l6 -12M1368 336l7 -11M1391 347l4 -10M1344 329l5 -12M1361 335l4 -10M1381 339l4 -7M1364 340l4 -8M1382 343l3 -5M1366 337l5 -12M1344 329l5 -10M1362 337l4 -9M1381 350l6 -9M1361 338l5 -11M1372 342l4 -11M1352 328l5 -10M1347 332l3 -10M1365 334l3 -8M1387 351l7 -12M1381 349l4 -11M1350 331l5 -11M1346 328l4 -7M1377 342l5 -10M1336 324l2 -7M1358 336l3 -6M1361 340l3 -6M1395 352l3 -9M1339 322l5 -12M1389 349l4 -7M1386 344l4 -10M1340 322l3 -8M1340 328l6 -9M1392 351l2 -6M1369 335l4 -7M1377 340l3 -10M1367 338l4 -11M1338 327l6 -12M1391 349l2 -5M1373 344l5 -10M1364 337l6 -11M1366 333l5 -11M1370 339l3 -8M1346 331l3 -7M1345 333l3 -6M1377 342l5 -12M1363 332l3 -9M1356 339l3 -9M1364 340l6 -12M1378 342l6 -12M1386 346l7 -11M1343 332l7 -12M1362 337l3 -10M1393 347l5 -8M1395 350l7 -11M1381 348l3 -8M1339 320l6 -11M1358 336l5 -11M1341 321l6 -11M1336 323l4 -6M1357 335l3 -7M1343 331l6 -10M1360 337l3 -7M1360 336l3 -8M1343 329l4 -12M1392 347l3 -6M1358 331l2 -5M1337 324l2 -5M1362 335l4 -8M1356 328l3 -6M1388 347l5 -9M1344 324l4 -10M1390 348l2 -6M1338 320l4 -9M1385 351l4 -8M1365 339l3 -10" stroke="#65ff00" stroke-width="1.0" fill="none" opacity="1.0"/>
<path d="M1380 351l2 -5M1365 343l5 -10M1360 344l3 -6M1354 341l3 -7M1348 341l4 -10M1378 352l4 -8M1366 345l2 -6M1360 344l5 -13M1369 346l4 -8M1344 338l3 -8M1340 341l2 -7M1385 357l5 -11M1343 338l3 -6M1363 345l6 -11M1346 339l3 -8M1361 348l4 -11M1346 342l6 -12M1352 343l4 -11M1338 334l5 -9M1342 340l4 -12M1369 348l4 -10M1378 355l4 -10M1383 357l7 -11M1341 341l4 -8M1347 336l4 -7M1359 347l4 -11M1388 354l3 -9M1387 357l4 -7M1357 347l5 -9M1382 354l4 -13M1360 342l4 -8M1354 348l4 -10M1372 354l3 -6M1381 354l4 -10M1392 356l3 -6M1345 337l3 -8M1354 345l3 -5M1376 352l5 -13M1370 352l3 -8M1376 351l6 -10M1351 339l7 -11M1377 354l3 -6M1378 355l5 -8M1365 349l4 -8M1344 334l3 -5M1381 351l4 -9M1368 351l7 -11M1340 339l2 -5M1371 346l4 -12M1341 340l2 -5M1381 355l4 -9M1373 352l4 -9M1365 343l3 -7M1339 332l3 -5M1381 355l3 -5M1359 351l5 -8M1381 353l4 -11M1349 336l4 -11M1382 357l5 -8M1364 344l3 -6M1351 341l3 -5M1359 346l5 -10M1387 355l4 -11M1376 351l3 -8M1339 340l5 -12M1358 347l2 -7" stroke="#33ff00" stroke-width="1.0" fill="none" opacity="1.0"/>
<path d="M1390 330l3 -7M1359 313l5 -11M1373 321l5 -13M1377 320l3 -5M1350 311l5 -12M1352 312l5 -11M1365 314l3 -7M1348 308l6 -13M1402 335l3 -6M1365 313l3 -6M1361 315l2 -5M1371 318l4 -10M1392 325l5 -11M1400 336l4 -8M1376 316l2 -5M1384 328l5 -10M1354 315l3 -8M1396 326l3 -8M1395 327l5 -9M1362 313l4 -8M1395 327l6 -12M1366 312l3 -10M1376 322l4 -8M1370 314l5 -9M1399 325l3 -6M1353 313l2 -5M1388 328l6 -11M1378 319l6 -11M1365 319l7 -11M1344 306l4 -10M1402 329l3 -9M1393 324l4 -8M1348 303l2 -5M1357 310l3 -6M1400 328l5 -12M1385 320l3 -8M1403 331l6 -10M1347 309l3 -7M1394 328l4 -11M1393 325l6 -10M1406 332l6 -9M1387 327l3 -6M1356 311l2 -6M1388 322l5 -12M1390 322l5 -11M1391 325l4 -9M1352 304l4 -8M1402 338l7 -12M1392 328l4 -7M1370 320l4 -11M1406 332l4 -10M1346 303l2 -7M1399 332l6 -9M1391 323l3 -9M1367 320l3 -6M1382 328l2 -6M1388 321l2 -6M1363 313l3 -7M1365 320l4 -7M1400 333l2 -6" stroke="#cbff00" stroke-width="1.0" fill="none" opacity="1.0"/>
<path d="M1394 277l5 -10M1371 275l4 -8M1365 272l3 -7M1376 276l3 -8M1412 296l5 -9M1397 282l5 -10M1366 276l5 -10M1384 276l4 -10M1393 288l2 -5M1373 261l3 -7M1368 260l4 -7M1416 299l5 -10M1371 264l2 -5M1400 286l3 -7M1389 278l5 -12M1407 296l3 -5M1371 275l3 -7M1365 261l2 -5M1394 285l4 -9M1375 272l4 -6M1362 269l3 -5M1393 281l6 -12M1394 279l6 -11M1362 267l3 -8M1391 275l6 -10M1365 262l5 -12M1415 297l6 -12M1372 270l5 -13M1395 282l6 -12M1382 281l6 -12M1369 263l3 -5M1362 273l4 -8M1410 291l7 -12M1392 272l3 -6M1398 278l2 -5M1379 271l3 -6M1367 273l3 -7M1392 282l4 -6M1381 263l6 -12M1396 276l3 -8M1378 262l3 -6M1389 283l5 -12M1376 265l4 -11M1407 294l2 -5M1402 289l4 -8M1362 269l2 -6M1408 293l3 -5M1378 276l5 -9M1397 287l6 -10M1403 283l4 -13M1417 295l2 -5M1412 293l6 -12M1415 296l6 -12M1377 270l4 -8M1387 268l3 -7M1380 269l5 -11M1397 281l6 -12M1383 272l2 -7M1418 295l3 -6M1374 277l3 -8M1381 279l2 -5M1396 280l5 -9M1378 264l3 -5M1407 286l5 -13M1411 298l5 -10M1395 275l5 -11M1381 264l4 -12M1368 260l6 -13M1389 281l5 -9M1376 269l3 -9M1382 274l6 -10M1398 287l4 -9M1392 275l3 -8M1371 274l4 -12M1386 270l2 -6M1373 270l4 -8M1411 298l4 -10M1402 292l5 -11M1395 278l3 -9M1393 283l4 -7M1374 267l4 -9M1393 279l5 -9M1379 278l5 -8M1403 292l5 -11M1362 267l4 -13M1369 269l6 -12M1399 282l3 -6" stroke="#ff6600" stroke-width="1.0" fill="none" opacity="1.0"/>
<path d="M1350 348l5 -8M1342 347l3 -7M1353 350l2 -5M1350 348l4 -9M1340 346l5 -13" stroke="#00ff00" stroke-width="1.0" fill="none" opacity="1.0"/>
<path d="M1358 274l3 1M1348 276l6 4M1341 281l4 2M1353 273l6 4M1354 272l3 3M1362 264l3 1M1351 266l3 2M1359 267l6 5M1346 269l7 3M1356 266l4 2M1343 275l5 4M1356 266l5 2M1350 281l5 2M1349 280l4 2M1352 271l6 3M1343 279l2 2M1357 271l7 3M1352 271l5 4M1341 283l4 2M1353 268l4 3M1358 268l7 4M1347 282l4 3M1349 274l3 3M1364 265l4 2M1346 275l6 3M1354 274l7 3M1352 275l5 3M1343 268l5 3M1342 286l4 2M1345 271l3 1M1355 274l6 3M1349 269l6 4M1360 269l4 2M1344 266l7 3M1342 280l6 3M1345 270l7 4M1346 276l5 3M1350 282l6 3M1347 281l7 3M1356 276l4 2" stroke="#ff9900" stroke-width="1.0" fill="none" opacity="1.0"/>
<path d="M1348 266l7 -1M1337 270l8 -0M1340 270l5 -1M1333 268l4 -0M1327 272l4 -0M1325 270l5 -1M1361 263l8 -1M1343 267l4 -0M1352 265l8 -1M1342 270l7 -1M1374 264l7 -1M1342 269l7 -1M1363 268l5 -1M1368 262l7 -1M1348 269l5 -1M1340 268l5 -1M1362 266l4 -1M1331 269l4 -1M1369 267l4 -0M1325 268l4 -0M1374 265l7 -1M1353 265l4 -0M1358 264l7 -1M1345 266l3 -0M1342 270l7 -0M1324 270l6 -0M1371 266l7 -1M1331 269l4 -0M1367 263l6 -1M1371 264l6 -0M1343 269l4 -0M1363 268l8 -1M1327 267l6 -0M1333 269l4 -0M1331 268l4 -0M1355 266l5 -0M1375 261l7 -1M1367 262l5 -0M1372 262l3 -0M1357 265l6 -1M1369 264l7 -0M1360 264l7 -1M1349 270l4 -0M1356 265l3 -0M1329 270l3 -0M1335 269l5 -0M1322 274l3 -0M1374 262l7 -0M1339 270l7 -1M1353 270l5 -0M1337 269l3 -0M1361 265l4 -1M1369 265l7 -0M1373 261l6 -1M1348 270l6 -0M1322 272l6 -0M1322 270l3 -0M1361 266l3 -0M1332 266l6 -1M1320 269l4 -0" stroke="#ff9900" stroke-width="1.0" fill="none" opacity="1.0"/>
<path d="M1292 336l8 3M1277 339l4 3M1289 335l7 3M1285 347l5 4M1293 335l7 2M1295 329l6 3M1317 328l8 5M1281 346l5 3M1286 333l7 5M1292 337l6 2M1304 324l5 3M1294 340l6 2M1299 329l7 6M1286 341l4 2M1316 346l8 5M1301 333l3 4M1290 346l8 6M1281 346l6 5M1288 348l7 6M1307 332l4 2" stroke="#99ff00" stroke-width="1.0" fill="none" opacity="1.0"/>
<path d="M1307 329l4 2M1300 348l4 3M1309 344l5 2M1290 331l5 3M1283 345l8 4M1284 331l4 2M1279 338l6 6M1293 336l7 3M1311 330l3 3M1314 324l3 3M1305 333l4 2M1285 330l6 6M1310 329l5 3M1313 344l4 2M1310 338l6 6M1317 322l4 5M1283 335l7 4M1312 330l6 6M1299 326l7 7M1291 330l6 3M1284 348l4 4M1301 327l9 5M1301 344l4 2M1303 331l6 4M1289 342l5 4M1310 344l8 6M1302 332l7 6M1297 329l8 6M1290 344l5 3M1309 336l4 4" stroke="#00ff00" stroke-width="1.0" fill="none" opacity="1.0"/>
<path d="M1291 346l7 3M1306 344l6 5M1307 326l4 4M1283 345l5 4M1301 347l5 6M1299 324l4 4M1299 332l5 5M1291 343l6 3M1306 342l5 5M1299 337l5 4M1286 329l8 4M1291 328l7 7M1284 329l4 2M1303 337l4 2M1275 326l6 5M1317 331l4 2M1290 334l7 5M1310 337l6 4M1312 333l4 1M1280 333l4 2" stroke="#65ff00" stroke-width="1.0" fill="none" opacity="1.0"/>
<polygon points="1265,354 1272,350 1330,385 1352,408 1350,420 1343,421 1322,398" fill="#20ff50" />
<polygon points="1355,382 1362,377 1388,406 1382,412" fill="#00ff70" />
<path d="M1393 376l3 -7M1420 389l2 -5M1397 371l4 -8M1409 405l2 -6M1408 400l1 -4M1415 395l3 -6M1408 386l2 -4M1406 401l2 -7M1399 372l4 -7M1418 383l5 -9M1399 368l3 -7M1404 376l3 -7M1406 391l1 -6M1424 396l4 -8M1404 367l2 -6M1412 382l4 -8M1411 395l1 -4M1404 371l2 -6M1407 389l4 -9M1416 385l1 -5M1429 400l4 -9M1406 373l2 -5M1392 369l1 -5M1414 388l4 -7M1416 383l2 -5M1397 382l2 -6M1399 367l2 -7M1399 386l1 -4M1407 394l2 -5M1412 402l3 -6M1428 399l1 -6M1389 371l3 -7M1405 392l3 -9M1402 394l3 -9M1408 404l4 -7M1406 400l1 -5M1388 369l1 -5M1405 373l3 -8M1410 366l1 -4M1408 377l1 -4M1425 397l2 -6M1399 382l3 -7M1418 392l3 -7M1405 376l3 -7M1401 367l4 -8M1416 388l4 -9M1417 380l2 -7M1425 395l1 -4M1406 388l2 -6M1408 397l2 -6M1407 381l2 -7M1404 372l2 -8" stroke="#00ff99" stroke-width="1.0" fill="none" opacity="1.0"/>
<path d="M1408 373l3 -6M1404 376l2 -4M1408 370l2 -4M1408 379l1 -5M1403 379l2 -7M1404 374l2 -5M1409 390l3 -9M1420 390l4 -7M1397 381l2 -6M1407 385l5 -9M1410 383l2 -8M1410 396l3 -8M1402 378l3 -5M1402 393l1 -5M1411 403l1 -4M1406 367l3 -8M1399 373l2 -8M1415 384l2 -7M1408 380l2 -9M1410 385l3 -9M1411 380l2 -5M1416 378l1 -8M1414 390l2 -5M1417 404l4 -8M1411 407l3 -8M1420 400l3 -8M1416 393l4 -7M1411 403l2 -6M1423 393l4 -7M1395 379l3 -6M1415 380l3 -8M1415 382l4 -8M1399 379l3 -9M1399 379l2 -9M1423 392l3 -8M1418 383l2 -6M1417 393l2 -5M1400 381l1 -6M1410 394l4 -7M1398 386l1 -5M1420 395l1 -6M1404 386l3 -7M1403 371l1 -5" stroke="#00ff66" stroke-width="1.0" fill="none" opacity="1.0"/>
<path d="M1420 389l2 -7M1404 377l3 -5M1405 372l3 -7M1391 375l2 -6M1421 394l4 -8M1406 396l2 -7M1425 397l2 -4M1420 387l3 -9M1418 380l3 -6M1413 371l2 -4M1412 373l2 -9M1413 396l3 -6M1423 395l1 -7M1408 373l2 -6M1415 395l4 -8M1420 401l3 -9M1415 388l2 -8M1410 400l2 -5M1402 387l2 -8M1416 400l2 -6M1407 388l4 -6M1410 382l2 -8M1404 376l2 -4M1414 386l3 -6M1412 382l1 -5M1396 376l2 -6M1400 383l2 -4M1404 393l2 -4M1416 393l1 -4M1423 401l3 -8M1403 395l2 -8M1409 399l1 -5M1409 390l1 -6M1419 399l2 -8M1415 386l2 -4M1419 398l2 -7M1418 400l4 -7M1413 394l4 -8M1423 399l2 -5M1408 403l1 -4M1422 391l2 -7M1411 377l2 -5M1410 393l4 -8M1414 395l2 -4M1415 390l3 -9" stroke="#00ffff" stroke-width="1.0" fill="none" opacity="1.0"/>
<polygon points="1211,418 1230,412 1243,428 1222,436" fill="#00c060" />
<path d="M1213 420l10 14M1218 417l11 15M1224 414l11 15M1230 412l11 14" stroke="#000" stroke-width="2.2"/>
<path d="M1243 342l2 -5M1254 344l2 -8M1247 342l1 -4M1248 339l2 -2M1252 333l2 -3M1257 337l1 -5M1246 342l1 -5M1250 344l3 -7M1247 333l2 -6M1252 335l1 -4M1254 343l5 -6M1238 333l1 -3M1254 335l1 -4M1251 341l4 -5M1253 334l3 -5M1248 342l3 -7M1254 335l2 -2M1255 334l2 -5M1252 334l3 -4M1257 334l2 -4M1254 343l2 -7M1244 338l2 -4M1259 344l2 -7M1239 336l1 -4M1245 346l1 -4M1246 342l5 -6M1250 337l1 -3M1246 340l2 -7M1245 336l2 -5M1248 334l3 -4M1242 333l3 -4M1255 334l1 -3M1240 339l1 -4M1244 346l2 -3M1251 334l1 -7M1242 334l2 -7M1241 333l1 -4M1240 337l4 -5M1256 336l2 -3M1249 341l2 -5M1259 343l2 -4M1242 341l1 -5M1257 339l1 -4M1250 341l3 -5M1242 333l2 -5" stroke="#99ff00" stroke-width="1.0" fill="none" opacity="1.0"/>
<path d="M1246 324l2 -3M1243 328l4 -6M1252 332l1 -4M1239 330l4 -6M1250 329l3 -3M1254 324l4 -5M1242 329l2 -4M1250 327l3 -4M1255 326l2 -6M1243 332l3 -6M1240 327l2 -7M1242 332l3 -7M1250 332l3 -7M1242 330l1 -4M1247 330l4 -5M1240 331l3 -5M1248 326l2 -3M1247 323l2 -6M1256 329l3 -5M1243 331l2 -6M1238 330l1 -4M1246 330l3 -5M1249 323l4 -6M1239 330l2 -4" stroke="#cbff00" stroke-width="1.0" fill="none" opacity="1.0"/>
<path d="M1246 354l3 -5M1243 357l1 -5M1251 357l2 -6M1258 356l1 -5M1256 354l2 -4M1241 359l1 -5M1257 354l2 -5M1250 348l3 -4M1243 349l3 -7M1242 356l3 -6M1247 354l3 -4M1256 349l5 -6M1244 351l2 -5M1253 355l1 -3M1253 349l1 -4M1242 347l2 -3M1255 348l3 -4M1251 351l1 -4M1260 355l2 -4M1252 348l3 -5M1249 352l3 -7" stroke="#65ff00" stroke-width="1.0" fill="none" opacity="1.0"/>
<path d="M553 309l14 -17M524 305l10 -15M583 305l5 -3M535 309l10 -7M540 306l6 -5M545 293l4 -5M597 307l6 -5M543 310l5 -6M591 304l14 -19M562 295l16 -17M564 307l12 -18M573 309l14 -8M573 296l12 -7M589 306l7 -8M529 308l16 -10M574 304l7 -8M545 294l16 -13M532 307l7 -4M521 309l5 -8M540 298l17 -16M595 312l18 -11M527 300l9 -16M562 305l12 -8M537 309l12 -16" stroke="#00cbff" stroke-width="1.0" fill="none" opacity="1.0"/>
<path d="M583 330l16 -10M536 315l7 -11M570 315l12 -17M549 313l8 -7M572 319l4 -6M531 323l7 -6M552 317l16 -9M545 330l11 -10M598 329l5 -4M537 321l4 -5M591 317l18 -14M529 312l9 -9M559 315l17 -16M561 324l4 -6M570 329l15 -10M598 319l16 -11M537 321l12 -7M569 324l8 -8" stroke="#0099ff" stroke-width="1.0" fill="none" opacity="1.0"/>
<path d="M556 345l16 -13M555 343l11 -10M572 332l16 -12M552 349l15 -13M567 334l8 -14M536 337l16 -17M583 332l9 -13M559 346l14 -18M548 344l9 -14M565 336l7 -11M572 345l7 -4M545 343l16 -10M553 349l15 -13" stroke="#0066ff" stroke-width="1.0" fill="none" opacity="1.0"/>
<path d="M557 307l4 -2M543 296l6 -2M555 301l4 -2M554 296l5 -3M538 302l3 -2M531 308l4 -2M527 294l3 -2M541 290l4 -3M548 299l5 -3M536 309l3 -2M548 291l6 -4M551 311l5 -2M557 311l4 -2M545 307l6 -3M560 307l4 -3M551 296l5 -2M531 301l5 -4M526 296l3 -2M537 298l5 -4M531 304l7 -3M527 310l6 -5M532 302l5 -2M551 298l6 -3M559 297l3 -2M542 289l3 -1M547 298l5 -4M531 292l4 -3M543 296l3 -2M561 303l7 -3M539 313l6 -2M548 299l7 -3M532 295l3 -2M540 295l4 -3M533 302l3 -2M547 304l2 -2M526 294l6 -3M526 303l5 -3M528 291l5 -2M560 303l3 -2M544 296l7 -4" stroke="#00ffff" stroke-width="1.0" fill="none" opacity="1.0"/>
<path d="M693 331l3 -6M713 317l3 -2M701 325l3 -6M699 317l2 -4M699 322l2 -4M694 329l5 -5M691 330l3 -3M690 325l5 -4M713 329l2 -4M695 331l3 -4M714 326l5 -3M703 327l2 -4M698 335l1 -3M692 319l5 -3M705 319l5 -2M711 318l3 -2M690 322l6 -3M702 322l2 -2M707 331l3 -2M708 323l4 -3M698 329l2 -3M688 326l5 -4M691 322l3 -3M699 326l4 -2M716 321l5 -3M699 328l3 -2M709 328l1 -4M697 335l3 -3M709 330l3 -3M702 318l2 -4M710 313l2 -3M694 332l2 -3M697 318l6 -3M698 335l6 -4M709 315l5 -2M708 332l4 -4M706 319l4 -5M688 330l6 -4M712 323l4 -5M712 312l2 -5" stroke="#0066ff" stroke-width="1.0" fill="none" opacity="1.0"/>
<path d="M805 311l3 -1M807 307l2 -1M823 312l2 -3M827 316l3 -3M804 308l2 -2M821 310l3 -2M801 308l2 -1M808 309l2 -2M817 309l4 -1M803 312l2 -2M811 312l2 -1M811 309l3 -1M824 309l4 -3M813 310l2 -4M803 308l3 -2M810 310l1 -3M796 314l2 -4M833 316l2 -3M801 307l3 -3M832 317l3 -2" stroke="#0066ff" stroke-width="1.0" fill="none" opacity="1.0"/>
<polygon points="996,279 1006,271 1052,270 1056,276 1068,280 1131,278 1154,271 1187,260 1199,258 1218,260 1223,252 1237,250 1249,257 1258,264 1272,258 1284,257 1290,266 1282,284 1271,297 1251,310 1243,322 1241,328 1252,345 1248,380 1240,420 1236,455 1219,488 1201,477 1160,481 1100,516 1060,543 1014,560 979,566 940,490 940,440 977,413 981,404 977,378 981,333 986,300 992,296" fill="url(#g2)" />
<polygon points="940,440 977,413 1252,351 1248,380 1240,420 1236,455 1219,488 1201,477 1160,481 1100,516 1060,543 1014,560 979,566 940,490" fill="url(#g2b)" />
<polygon points="996,279 1006,271 1052,270 1056,276 1068,280 1088,330 1060,345 1020,335 992,296" fill="url(#groof)" opacity="0.9"/>
<polygon points="986,300 992,296 1000,300 1016,330 1020,372 979,372 981,333" fill="url(#gface)" opacity="0.75"/>
<polygon points="1056,276 1068,280 1131,278 1125,288 1090,300 1075,300" fill="#ffa000" opacity="0.7"/>
<path d="M1258 338l3 -5M1268 329l4 -6M1259 333l2 -4M1264 330l2 -3M1258 338l3 -4M1279 315l2 -3M1269 322l3 -5M1263 337l4 -6M1256 342l3 -4M1266 326l3 -4M1262 337l4 -6M1277 312l5 -5M1262 338l5 -6M1277 314l4 -6M1255 340l4 -5M1264 331l3 -3M1281 312l2 -3M1271 320l2 -4M1274 320l5 -6M1270 324l2 -3M1272 315l3 -3M1264 336l4 -4M1268 331l2 -3M1262 332l4 -5M1269 325l2 -3M1257 337l2 -3M1275 312l2 -2M1278 309l2 -2M1260 336l3 -3M1276 315l3 -3M1269 322l4 -5M1267 326l3 -3M1266 329l2 -3M1279 309l2 -4M1255 338l4 -5M1255 341l5 -5M1262 337l3 -4M1272 321l3 -4M1258 339l4 -6M1264 333l3 -3M1275 313l4 -4M1267 325l3 -4M1262 336l4 -5M1267 323l5 -6M1277 309l4 -5M1257 338l3 -4M1271 318l2 -3M1265 325l4 -5M1276 316l3 -3M1260 337l2 -4" stroke="#ff9900" stroke-width="1.0" fill="none" opacity="1.0"/>
<path d="M999 594l1 -5M995 610l-0 -10M997 566l-0 -5M1001 597l0 -5M985 589l0 -5M997 582l2 -9M1001 558l1 -4M990 589l-0 -5M993 574l3 -11M1022 556l-0 -8M1015 578l2 -8M1022 622l-1 -10M992 565l-1 -7M1032 580l2 -8M1004 608l1 -6M1026 593l-1 -7M1007 630l2 -8M1022 613l-0 -11M1007 555l-0 -12M1019 552l1 -5M982 567l1 -7M1028 588l0 -6M1006 631l0 -9M998 632l0 -6M1023 579l-1 -11M1028 568l1 -9M1027 618l0 -8M1017 621l2 -7M1010 609l-1 -9M1021 560l0 -10M987 561l1 -4M1003 596l2 -4" stroke="#0066ff" stroke-width="1.0" fill="none" opacity="1.0"/>
<path d="M987 579l1 -4M1010 586l2 -10M1003 610l1 -11M1002 590l2 -7M1008 610l4 -11M1025 562l1 -5M997 610l-0 -8M997 563l1 -5M983 564l1 -8M1026 621l1 -7M1021 577l-1 -9M997 622l-0 -7M1009 586l1 -7M1014 578l2 -11M1007 586l0 -8M1023 628l4 -10M986 592l0 -5M1013 560l2 -11M1030 557l3 -11M991 576l0 -7M976 563l0 -8M1025 606l1 -4" stroke="#00ffff" stroke-width="1.0" fill="none" opacity="1.0"/>
<path d="M1022 617l1 -10M1008 602l0 -8M1026 600l1 -9M1016 557l0 -7M1026 598l-0 -11M1017 555l2 -11M1008 593l0 -5M996 562l1 -5M1020 608l0 -7M999 600l0 -8M1000 631l-1 -10M1019 570l0 -9M1014 618l2 -6M1005 629l-0 -8M981 601l3 -11" stroke="#6500ff" stroke-width="1.0" fill="none" opacity="1.0"/>
<path d="M985 587l2 -8M1016 573l1 -7M1031 602l2 -9M1007 628l-0 -8M998 611l-1 -9M999 598l-0 -5M1006 558l1 -10M1020 557l1 -7M1012 599l3 -9M993 584l0 -7M1016 613l-0 -7M1006 635l0 -11M999 616l2 -10M1001 564l-1 -10M984 596l1 -11M1002 595l3 -9M1007 580l3 -8M1017 604l4 -11M1019 609l0 -6M1026 554l-0 -8M1022 602l2 -6" stroke="#00cbff" stroke-width="1.0" fill="none" opacity="1.0"/>
<path d="M636 372l5 8M651 389l6 8M671 401l9 6M637 372l4 3M624 370l4 3M627 376l6 9M629 378l7 9M692 372l7 5M673 386l7 9M676 363l5 6M695 361l5 6M626 388l6 10M672 394l7 6M620 370l6 6M678 369l3 4M651 376l4 6M686 380l8 7M637 379l6 6M697 378l4 5M698 387l6 5M687 363l6 8M640 366l6 10M671 358l6 8M634 367l7 5M657 388l5 9M683 393l4 5M679 388l9 7M681 389l4 5M645 397l4 3M634 399l8 6M666 392l5 3M689 356l4 5M659 382l3 4" stroke="#00ff66" stroke-width="1.0" fill="none" opacity="1.0"/>
<path d="M688 398l7 7M614 366l5 6M620 397l2 4M657 379l7 5M669 395l4 5M630 381l8 6M672 391l4 5M663 397l6 5M627 400l3 3M669 393l5 4M694 394l6 9M685 357l6 4M667 381l7 9M664 379l7 8M680 359l6 5M686 376l4 7M631 367l7 5M679 394l8 9M621 367l4 4M670 378l5 4M646 369l4 3M633 394l9 7M649 379l6 6M693 390l3 3M701 369l4 7M616 392l6 6M666 373l8 8M659 374l8 6M618 390l5 7M664 371l10 7M697 374l10 7M628 380l6 6M649 404l5 6M694 363l7 6M673 372l5 6M663 358l7 9M695 359l8 6M625 378l4 3M661 379l7 7M666 385l5 4M625 401l8 9" stroke="#00ff32" stroke-width="1.0" fill="none" opacity="1.0"/>
<path d="M679 365l7 5M665 392l3 4M633 373l6 9M694 396l7 9M672 396l5 4M688 384l6 4M618 384l8 5M683 380l6 8M648 361l4 3M630 379l4 6M621 400l6 5M640 374l3 4M650 361l4 4M680 384l6 7M642 361l7 6M653 402l3 3M662 367l4 4M657 378l6 5M682 399l2 4M648 375l4 3M658 399l6 5M664 400l6 7M630 367l5 8M656 369l7 7M631 373l5 5M639 360l3 4M691 367l6 9M644 375l10 6M705 389l3 3M646 382l5 4M641 400l7 6M642 401l9 8M668 360l6 9M675 383l6 5M649 360l8 7M659 375l6 8M626 381l6 5M696 367l5 4M669 367l9 6M618 393l8 6M675 390l3 3M626 367l5 5M700 383l6 8M653 363l5 7M659 390l6 5M640 397l5 6M680 387l8 7M702 382l4 3M651 394l3 3M703 389l6 5M637 392l3 5M702 395l6 8M651 373l7 7M639 361l6 4M651 367l3 4M678 379l3 5M699 369l8 7M688 395l3 5M643 383l6 8M700 378l8 7M685 376l4 3M652 370l6 8M703 383l7 5M686 374l6 6M668 363l6 5M635 365l4 5M660 401l3 2M651 384l5 4M701 388l4 3M641 384l3 6M672 392l7 8M651 361l9 8M683 366l9 7M696 376l7 5M668 364l3 4M694 362l4 5" stroke="#00ff00" stroke-width="1.0" fill="none" opacity="1.0"/>
<polygon points="579,408 582,414 592,418 607,411 625,419 637,414 654,411 668,406 680,400 690,385 700,362 703,359 789,355 874,351 923,347 925,355 893,367 891,390 898,406 910,388 963,384 982,406 975,440 942,481 981,581 979,640 968,703 936,698 935,709 777,738 773,714 733,718 731,742 707,746 626,769" fill="url(#g1)" />
<polygon points="598,560 729,555 731,742 707,746 626,769" fill="url(#g1L)" />
<clipPath id="c1"><polygon points="579,408 582,414 592,418 607,411 625,419 637,414 654,411 668,406 680,400 690,385 700,362 703,359 789,355 874,351 923,347 925,355 893,367 891,390 898,406 910,388 963,384 982,406 975,440 942,481 981,581 979,640 968,703 936,698 935,709 777,738 773,714 733,718 731,742 707,746 626,769"/></clipPath><g clip-path="url(#c1)">
<polygon points="700,405 722,400 734,640 714,650" fill="#00ff98" opacity="0.45"/>
<polygon points="800,395 815,392 822,600 808,600" fill="#00ff98" opacity="0.45"/>
<polygon points="897,387 912,385 935,600 920,600" fill="#00ff98" opacity="0.45"/>
<polygon points="600,483 971,468 975,503 604,520" fill="#00ff98" opacity="0.45"/>
<polygon points="612,600 975,587 976,606 614,619" fill="#00ff98" opacity="0.45"/>
<polygon points="570,400 607,412 628,660 600,660" fill="#00ffb0" opacity="0.35"/>
<polygon points="664,388 886,380 890,389 842,393 798,397 723,406 717,428 695,428 676,412" fill="#00ffd8" opacity="0.85"/>
<polygon points="760,384 880,380 884,389 842,393 798,397 760,401" fill="#00f0ff" opacity="0.6"/>
<polygon points="695,418 718,414 718,429 700,429" fill="#10a0ff" opacity="0.9"/>
<polygon points="700,378 888,373 888,382 700,387" fill="#000" opacity="0.8"/>
<path d="M875 370l6 5M702 389l2 2M866 392l3 5M875 380l2 6M838 388l2 3M825 391l5 4M762 379l1 4M791 371l4 8M730 385l1 3M794 391l3 6M858 375l4 5M789 391l5 6M889 369l4 6M872 374l7 6M876 384l3 3M718 383l3 5M685 391l2 3M702 393l4 5M739 381l5 5M750 386l2 4M823 384l3 7M666 387l4 6M752 384l3 6M831 373l3 7M828 378l3 2M778 385l2 3M858 384l5 5M711 393l1 3M770 383l4 6M780 383l4 6M694 380l2 5M712 382l5 6M814 383l3 6M676 384l3 6M779 383l4 4M843 392l6 5M687 390l3 4M789 382l3 4M722 375l2 2M794 392l5 4M841 374l2 5M788 382l5 6M684 391l2 4M882 381l5 6M854 391l4 7M846 373l4 3M859 386l3 5M670 394l4 5M695 379l2 4M699 393l4 4M703 379l4 4M799 377l3 6M718 391l3 6M720 376l4 4M679 376l2 2M794 393l3 5M819 389l4 6M753 385l5 6M707 394l4 8M878 374l3 6M707 389l2 3M867 384l6 6M776 382l4 7M673 384l3 6M711 374l3 4M781 383l2 5M664 384l3 3M881 370l3 3M831 383l6 5M878 390l6 6M724 392l2 3M738 383l5 6M840 376l5 6M889 375l3 4M754 382l4 6M847 386l3 3M811 371l3 5M800 375l4 4M741 393l2 5M877 380l5 5M721 384l5 5M762 388l3 2M810 381l5 5M672 384l4 8M835 384l3 6M723 389l3 5M753 386l5 6M772 372l3 5M742 379l4 6M781 393l4 7M705 392l4 7M836 389l3 7M803 381l4 6M806 377l7 6M879 372l2 3M793 371l2 4M737 375l4 4M740 394l5 4M882 369l2 3M851 376l2 5M696 381l3 3M878 385l3 4M746 382l5 5M722 389l4 7M878 389l3 3M824 372l2 6M852 377l3 4M755 375l5 4M766 393l4 4M739 392l2 3M786 386l5 5M757 385l3 5M801 378l6 6M701 385l3 7M817 378l5 5M738 373l2 3M803 376l5 5M769 379l4 6M805 375l3 5M820 374l4 6M841 388l2 2M875 381l3 4M835 372l3 5M671 393l2 3M859 388l3 5M868 375l2 3M824 389l2 5M888 377l3 3M833 391l5 4M738 381l3 4M753 391l2 3M860 380l2 3M875 370l2 4M732 385l3 4M840 385l3 7M741 377l2 4M800 391l4 5M786 380l4 3M794 383l2 4M731 394l3 4M820 387l2 4M797 386l5 5M696 385l4 7M765 377l2 4M779 382l5 5M846 377l3 3M769 383l2 3M831 375l4 4M754 380l5 6M767 375l1 3M722 378l5 6M875 388l4 5M861 382l6 6M737 380l2 4M770 380l1 3M725 383l4 5M811 383l4 6M881 382l5 6M756 373l6 6M714 391l3 7M678 392l5 6M874 374l1 3M874 378l2 3M710 374l4 4M824 384l3 7M674 382l4 7M812 380l2 3M708 374l3 5M697 382l1 3M689 380l3 5M739 385l4 4M742 384l4 8M803 385l5 4M708 384l2 6M834 378l4 5M749 375l3 6M723 381l4 6M839 370l3 6M724 374l3 3M729 382l3 3M683 381l4 8M731 387l2 3M832 386l1 3M814 373l7 6M737 379l4 3M682 378l5 5M864 391l2 3M666 375l5 4M787 381l4 5M836 388l4 4M871 374l3 3M768 380l6 7M846 392l3 5M683 388l4 7M667 375l3 6M759 385l2 4M770 388l5 6M795 373l4 5M676 392l3 3M784 372l2 3M852 381l4 5M732 392l3 8M679 384l2 3M770 376l4 3M804 377l4 6M862 382l4 6M775 376l2 6M844 374l5 5M796 388l3 3M701 384l2 3M753 379l4 6M717 388l3 6M788 371l6 7M822 384l4 5M846 376l2 3M697 394l2 3M705 388l4 4M862 369l1 4M752 385l3 3M709 378l2 4M718 392l5 6M878 389l4 6M833 383l2 3M796 388l2 3M769 381l3 4M848 384l5 5M844 375l3 5M790 385l5 5M846 378l3 8M858 381l1 3M804 381l3 5M767 379l3 4M835 382l4 7M713 385l5 6M750 388l1 4M764 380l2 4M732 373l2 3M845 374l4 6M666 376l2 4M700 378l4 6M745 379l3 5M667 380l4 7M766 376l3 8M759 383l3 5M805 391l2 4M822 390l5 7M674 381l2 5M699 377l5 7M887 369l3 4M885 378l5 7M800 373l4 5M744 392l3 8M800 371l3 3M882 368l3 6M826 386l2 4M792 373l2 5M830 372l3 4M741 380l3 4M763 375l3 4M851 382l2 5M866 381l2 3M775 384l4 8M783 375l5 7M887 380l3 8M690 384l3 4M774 375l3 3M853 391l4 7M720 385l4 6M803 393l4 6M730 387l4 6M847 390l4 6M819 379l3 5M736 391l6 5M665 377l4 4M687 392l5 7M859 381l2 3M716 374l5 5M878 372l3 3M674 382l4 5M851 391l2 3M745 383l2 3M851 389l4 4M821 370l3 5M667 379l4 6M676 376l3 3M667 377l2 5M881 372l3 4M730 382l3 3M750 386l3 4M819 382l4 5M801 376l2 5M666 382l5 5M829 389l3 4M835 391l5 6M858 370l4 8M842 371l1 4M805 387l2 4M745 382l5 6M867 369l4 4M787 387l5 5M741 378l3 3M731 376l3 7M669 378l5 5M702 384l3 3M693 380l5 5M712 374l4 8M786 374l4 7M707 383l2 3M888 383l5 4M677 392l3 4M714 384l2 4M707 375l3 2M793 388l4 7M666 375l4 8M755 377l2 3M720 381l2 3M812 371l3 5M832 391l5 5M873 388l3 5M666 392l4 6M668 375l2 4M835 381l2 3M672 383l4 4M830 388l3 5M690 376l6 5M790 383l2 3M764 376l2 5M746 382l5 7M734 378l4 3M770 373l5 5M700 381l6 6M850 370l4 8M797 377l5 7M766 394l2 4M799 384l3 4M833 391l3 6M779 379l6 7M812 391l2 3M754 375l5 8M740 390l4 5M752 376l4 4M879 382l3 4M671 386l4 4M832 371l4 6M828 390l4 4M838 375l1 3M729 382l3 6M717 378l5 5M686 382l7 6M770 387l3 5M708 381l4 5M845 381l3 5M862 385l2 3M715 393l5 6M763 385l4 6M729 387l4 7M840 372l4 5M811 383l2 3M879 379l4 7M719 378l4 6M812 393l2 5M723 383l2 3M716 384l2 3M822 392l2 6M878 380l2 3M807 376l4 7M872 382l3 8M705 394l2 3M832 376l2 3M869 371l4 5M872 378l2 2M835 370l3 7M739 392l2 2M854 376l1 3M804 389l5 5M811 372l2 6M685 376l4 4M735 373l2 4M860 371l3 5M670 388l5 4" stroke="#000000" stroke-width="1.2" fill="none" opacity="1.0"/>
<polygon points="870,370 906,370 906,388 870,390" fill="#000" />
<polygon points="771,487 823,485 823,494 771,495" fill="#1830ff" />
<polygon points="834,484 864,483 864,488 834,489" fill="#101860" />
<polygon points="873,478 897,477 897,484 873,485" fill="#1850ff" />
<polygon points="901,476 919,476 919,482 901,482" fill="#40c0ff" />
<polygon points="642,504 708,501 708,507 642,510" fill="#102070" />
<polygon points="628,535 640,534 644,562 632,562" fill="#6020e0" />
<polygon points="662,562 670,560 676,620 668,621" fill="#4020ff" />
<polygon points="724,550 728,550 731,592 727,592" fill="#2040ff" />
<polygon points="830,594 856,593 856,598 830,599" fill="#6020e0" />
<path d="M634 446l0 -4M649 469l0 -6M636 488l0 -6M637 484l-0 -5M639 442l1 -4M628 450l0 -4M648 469l0 -3M627 459l0 -4M647 471l-0 -3M638 447l0 -3M640 472l-1 -5M649 457l-0 -3M635 476l-0 -2M646 456l-0 -5M629 464l-1 -5M650 447l0 -5M648 490l-1 -3M632 469l-1 -4M640 457l-0 -2M631 465l0 -3M649 450l1 -6M643 479l-0 -3M647 447l0 -4M649 489l-1 -5M647 484l-1 -3M647 492l-0 -2M631 457l0 -2M639 466l0 -4M638 459l-1 -4M649 442l-0 -2M634 461l0 -4M636 470l1 -5M642 451l-0 -3M648 489l-0 -3M633 464l1 -6M638 456l0 -3M635 449l-0 -2M638 458l1 -5M643 455l-0 -6" stroke="#000" stroke-width="1.0" fill="none" opacity="1.0"/>
<path d="M634 495l-0 -5M646 444l0 -2M635 481l-0 -5M646 471l0 -4M650 480l-0 -6M628 458l0 -5M632 486l-0 -5M642 493l-0 -2M632 485l-0 -3M646 492l0 -4M628 470l0 -5M636 447l1 -5M646 439l0 -2M636 482l-0 -4M650 450l-0 -5M636 470l-0 -2M632 496l-0 -5M644 491l0 -6M637 463l-1 -5M639 447l-0 -2M647 441l-0 -2" stroke="#1020a0" stroke-width="1.0" fill="none" opacity="1.0"/>
<path d="M694 520l1 -2M628 545l0 -6M635 538l0 -2M665 556l1 -5M613 543l2 -6M627 556l-0 -3M618 561l-0 -3M666 539l1 -5M680 541l2 -6M667 528l-1 -6M677 528l0 -4M695 519l-1 -6M691 520l-0 -5M637 541l-1 -7M620 560l1 -2M682 532l0 -6M687 536l1 -3M693 553l1 -7M645 535l0 -5M641 545l2 -7M612 545l1 -3M666 525l-0 -3" stroke="#0000ff" stroke-width="1.0" fill="none" opacity="1.0"/>
<path d="M633 542l1 -5M655 534l-0 -5M616 563l1 -4M643 557l-0 -5M630 559l-1 -5M660 558l1 -5M633 543l-1 -5M639 529l-1 -3M631 558l-1 -6M701 544l1 -5M636 554l-0 -3M618 551l-1 -7M670 558l1 -6M639 539l-2 -5M638 556l-0 -5M620 536l0 -2M680 525l-0 -7M692 531l-1 -3" stroke="#000" stroke-width="1.0" fill="none" opacity="1.0"/>
<path d="M647 549l0 -3M634 531l-0 -3M664 531l0 -4M653 559l1 -6M646 545l-0 -6M689 520l1 -6M676 519l2 -6M690 540l-0 -3M669 519l-0 -5M679 550l0 -6M652 559l0 -6M657 522l-0 -3M633 524l-1 -3M665 520l-1 -3M695 539l2 -6M660 532l-0 -4M679 559l1 -6M680 552l1 -6M638 558l1 -6M669 554l-0 -6" stroke="#6500ff" stroke-width="1.0" fill="none" opacity="1.0"/>
<path d="M636 617l4 -1M657 609l2 -1M638 618l4 -1M639 605l2 -1M618 614l3 -1M655 614l3 -2M638 618l5 -2M657 608l5 -2M617 623l5 -3M611 622l5 -0M665 613l5 -2M657 607l3 -2M671 607l4 -1M655 619l5 -3M623 605l3 -1M667 608l4 -1M655 608l3 -1M622 599l3 -1M623 626l5 -2M664 628l4 -0M666 600l6 -0" stroke="#000" stroke-width="1.0" fill="none" opacity="1.0"/>
<path d="M637 595l4 -0M651 601l5 -2M658 604l3 -0M636 606l3 -1M661 609l5 -2M638 597l3 -2M621 595l3 -2M613 614l3 -1M656 609l3 -1M631 617l5 -2M650 604l5 -3M643 618l3 -2M665 609l5 -1M627 602l5 -3M610 611l5 -1M612 618l2 -1M623 615l4 -3M666 593l3 -1M636 621l4 -1M669 599l3 -2M655 607l4 -1M625 613l4 -2M662 626l5 -1M644 607l2 -0" stroke="#9900ff" stroke-width="1.0" fill="none" opacity="1.0"/>
<path d="M646 622l3 -0M630 616l5 -1M611 629l5 -2M630 609l2 -1M658 611l3 -0M651 608l6 -1M647 609l4 -3M615 618l3 -1M671 622l3 -2M633 596l2 -1M647 607l3 -2M612 625l4 -0M640 608l3 -1M644 627l3 -1M638 619l6 -1M664 596l4 -1M641 621l3 -1M654 597l4 -1M663 607l3 -2M625 611l4 -2M632 620l4 -2M622 599l4 -2M625 602l2 -1" stroke="#6500ff" stroke-width="1.0" fill="none" opacity="1.0"/>
<path d="M651 612l3 -2M633 611l4 -0M666 623l3 -2M636 620l4 -1M623 619l3 -0M662 604l5 -2M629 614l5 -4M653 609l6 -1M626 614l2 -0M627 613l4 -0M648 626l4 -3M652 624l4 -2M636 616l4 -3M647 609l5 -3M629 604l2 -1M642 594l2 -1M637 612l2 -1M620 599l5 -3M665 595l2 -1M632 609l5 -2M656 620l5 -1M635 608l4 -2" stroke="#200060" stroke-width="1.0" fill="none" opacity="1.0"/>
<path d="M767 563l-1 -2M748 581l2 -3M822 585l1 -2M783 599l-1 -4M808 565l0 -5M774 521l2 -5M765 548l-2 -6M823 591l-1 -5M789 583l-1 -4M818 589l-2 -5M823 556l-2 -3M837 570l-0 -2M802 598l-1 -4M837 578l-1 -4M827 577l-2 -5M811 579l-2 -4" stroke="#0000ff" stroke-width="1.0" fill="none" opacity="1.0"/>
<path d="M840 532l-3 -5M818 542l-2 -4M765 574l-2 -4M816 585l1 -5M818 572l1 -4M766 527l2 -5M783 566l-1 -3M742 541l0 -2M790 554l0 -2M815 533l1 -6M761 574l1 -3M820 582l1 -5M841 581l2 -3M830 596l1 -5M835 541l-1 -3M827 580l1 -2" stroke="#6500ff" stroke-width="1.0" fill="none" opacity="1.0"/>
<path d="M817 537l-0 -6M798 533l2 -4M763 588l-1 -2M750 569l1 -5M762 596l1 -4M802 579l1 -3M752 555l-1 -4M830 546l-1 -3M775 527l1 -4M826 553l-1 -2M807 592l0 -2M831 558l-1 -4M743 546l-3 -5M836 532l1 -2M756 583l-2 -5M831 590l-0 -4M822 545l0 -5M826 537l-0 -5" stroke="#000" stroke-width="1.0" fill="none" opacity="1.0"/>
<path d="M904 579l2 -4M865 582l0 -2M944 573l-1 -4M957 574l-0 -3M959 580l-0 -2M878 596l-2 -4M922 544l-0 -2M891 574l1 -2M951 517l1 -5M944 525l1 -5" stroke="#6500ff" stroke-width="1.0" fill="none" opacity="1.0"/>
<path d="M919 546l1 -2M939 519l-0 -4M915 518l1 -3M929 575l1 -3M881 560l-1 -2M908 570l2 -6M922 548l-3 -5M894 542l-2 -4M894 539l-1 -5M927 561l-0 -4M914 562l-0 -4M864 527l2 -4M946 556l-1 -4M911 533l-0 -5M912 547l-0 -2M929 543l-1 -4M885 575l-1 -3M892 584l-1 -4M918 586l2 -3M940 540l0 -4M881 524l2 -4" stroke="#0000ff" stroke-width="1.0" fill="none" opacity="1.0"/>
<path d="M891 553l2 -5M959 551l-0 -4M924 589l-0 -5M911 515l-1 -3M886 557l-1 -3M946 515l0 -6M868 525l-1 -3M915 587l-0 -6M885 590l-2 -5M956 587l0 -5M945 531l-2 -5M943 552l1 -2M895 549l-2 -4M866 518l-0 -2M868 562l-0 -5M905 527l-2 -5M864 573l-0 -3M892 549l2 -5M917 543l-1 -5" stroke="#000" stroke-width="1.0" fill="none" opacity="1.0"/>
<polygon points="700,493 716,491 716,499 700,500" fill="#40c0ff" />
<polygon points="870,531 878,529 880,537 872,539" fill="#40b0ff" />
<path d="M599 496l2 -1M611 484l3 -0M594 505l3 -1M603 583l2 -3M610 515l2 -0M620 643l2 -1M597 540l1 -1M620 619l2 -0M616 642l1 -3M611 570l3 -1M615 651l2 -2M598 540l1 -4M608 486l3 -1M606 526l2 -3M613 586l1 -2M619 608l1 -3M608 431l3 -1M592 481l3 -1M595 438l3 -2M619 522l0 -3" stroke="#0066ff" stroke-width="1.5" fill="none" opacity="1.0"/>
<path d="M597 493l0 -1M584 430l1 -2M608 472l1 -3M595 478l2 -1M611 509l2 -1M597 479l3 -0M615 573l2 -1M596 457l1 -3M612 546l1 -0M613 546l2 -1M594 536l2 -1M595 494l2 -2M610 511l1 -2M615 549l2 -0M620 638l1 -1M626 612l3 -2M590 501l0 -2M592 524l3 -1M586 442l3 -2M612 590l1 -3M607 448l3 -2M624 579l0 -3" stroke="#0000ff" stroke-width="1.5" fill="none" opacity="1.0"/>
<path d="M615 483l2 -0M600 559l3 -2M615 553l1 -1M611 542l2 -0M624 639l3 -2M597 502l0 -1M622 553l1 -1M598 494l2 -0M600 479l0 -1M619 608l2 -1M600 541l1 -1M606 542l4 -1M592 473l3 -1M604 604l2 -3M609 593l3 -1M601 468l2 -1M614 615l1 -0M614 586l1 -1M621 575l1 -0M605 539l1 -1M599 568l2 -1M622 574l2 -2" stroke="#40e8ff" stroke-width="1.5" fill="none" opacity="1.0"/>
<path d="M598 432l2 -1M592 499l2 -0M612 540l1 -2M608 576l1 -1M596 471l0 -2M602 522l1 -1M599 555l4 -0M610 519l3 -2M613 627l3 -2M615 636l1 -2M615 473l1 -1M592 447l0 -3M608 643l1 -1M615 616l1 -4M618 605l1 -2M606 480l0 -3M587 430l2 -0M610 495l1 -1M598 528l1 -1M587 432l1 -1M627 627l1 -2M602 612l3 -0" stroke="#80fff0" stroke-width="1.5" fill="none" opacity="1.0"/>
<path d="M614 462l1 -1M617 609l3 -0M598 541l1 -1M626 614l1 -3M597 484l1 -3M604 505l0 -2M616 618l2 -0M611 566l2 -1M595 512l0 -3M616 651l1 -2M625 638l1 -3M602 598l0 -4M620 593l2 -1M611 646l1 -2M595 460l1 -1M611 595l2 -1M601 477l2 -2M595 476l0 -2M627 648l2 -1M594 495l1 -0M608 508l2 -1M601 539l0 -2M595 509l2 -2M594 458l0 -1" stroke="#60fff0" stroke-width="1.5" fill="none" opacity="1.0"/>
<path d="M622 609l1 -3M679 541l3 -3M626 626l1 -4M702 579l2 -2M658 578l1 -2M682 603l0 -3M679 539l4 -1M681 555l3 -2M667 586l2 -1M669 601l3 -3M636 584l2 -0M732 608l1 -3M707 576l2 -1M727 548l1 -3M688 580l3 -3M734 631l2 -0M708 639l3 -2M693 606l0 -3M628 590l2 -3M717 632l3 -2M638 635l3 -1M684 544l4 -2M667 618l0 -2M634 590l0 -3M689 555l2 -2M624 552l2 -0M706 587l2 -4M730 640l2 -3M700 605l3 -1M637 627l3 -2" stroke="#6500ff" stroke-width="1.0" fill="none" opacity="1.0"/>
<path d="M629 608l2 -1M701 599l5 -1M667 624l1 -2M629 550l3 -1M680 638l2 -2M711 575l0 -5M663 625l1 -2M643 565l2 -2M663 520l2 -2M689 609l4 -1M657 565l2 -1M639 555l3 -0M627 618l0 -3M622 615l1 -2M727 623l4 -2M733 607l4 -1M657 538l2 -0M691 564l1 -2" stroke="#0033ff" stroke-width="1.0" fill="none" opacity="1.0"/>
<path d="M644 639l1 -2M715 536l3 -4M673 625l3 -1M728 559l0 -2M681 576l3 -1M686 596l2 -0M625 637l3 -3M696 517l4 -2M717 535l1 -5M651 563l2 -3M635 526l4 -3M715 549l4 -0M698 554l3 -1M680 543l3 -3M718 529l3 -2M725 596l1 -4M720 639l1 -3M726 561l3 -2M728 623l4 -1M717 612l3 -4M665 560l1 -4M681 625l2 -3" stroke="#000" stroke-width="1.0" fill="none" opacity="1.0"/>
<path d="M932 518l3 -4M877 554l3 -1M831 525l2 -1M740 513l2 -2M839 577l4 -2M891 556l2 -3M896 572l2 -2M891 593l2 -2M918 501l1 -2M899 533l4 -1M806 523l1 -3M744 546l0 -5M811 570l0 -3M851 504l4 -2M936 547l4 -1M788 546l3 -3M960 504l2 -2M927 509l1 -4M950 569l2 -1M775 509l4 -2M820 529l4 -2M785 569l2 -2M775 565l3 -0M824 540l2 -2M932 549l4 -2M782 581l4 -3M749 515l3 -2M828 532l2 -3M752 581l4 -3M883 578l0 -3M860 579l2 -1M939 590l3 -1" stroke="#6500ff" stroke-width="1.0" fill="none" opacity="1.0"/>
<path d="M870 521l4 -3M829 574l3 -3M841 579l2 -1M820 547l1 -3M944 587l4 -3M910 529l1 -2M939 544l1 -2M815 568l5 -2M740 567l1 -2M948 510l4 -2M787 516l2 -2M941 555l1 -3M932 532l3 -0M879 530l2 -0M795 556l5 -0" stroke="#0033ff" stroke-width="1.0" fill="none" opacity="1.0"/>
<path d="M777 509l0 -2M953 533l2 -2M815 518l1 -2M839 513l2 -1M844 600l5 -1M797 534l0 -5M815 523l2 -3M771 529l1 -2M922 548l2 -1M960 554l2 -1M824 569l1 -3M830 573l2 -4M845 562l0 -2M775 576l2 -2M834 545l2 -2M815 588l1 -3M938 502l1 -2M917 573l2 -2M841 573l2 -2M911 519l3 -0M939 530l0 -5M798 547l2 -0M809 525l0 -5" stroke="#00cbff" stroke-width="1.0" fill="none" opacity="1.0"/>
<path d="M714 666l4 -1M723 673l2 -1M633 687l2 -1M690 751l3 -1M728 684l2 -0M713 674l3 -1M672 707l5 -1M668 656l3 -1M689 664l5 -0M709 662l3 -1M652 755l2 -1M691 682l5 -2M718 669l4 -0M636 709l4 -1M652 727l2 -1M639 717l3 -1M645 669l4 -2M655 699l3 -1M692 650l4 -1M644 761l5 -2M716 708l3 -1M681 722l2 -0M713 648l3 -0M696 650l2 -1M664 717l5 -3M679 716l3 -0M703 752l5 -1M704 691l4 -1M676 677l4 -0M709 715l3 -1M680 723l3 -0" stroke="#3000a0" stroke-width="1.0" fill="none" opacity="1.0"/>
<path d="M715 658l4 -2M675 743l2 -1M684 690l2 -1M719 703l4 -2M649 667l5 -2M635 695l3 -1M707 718l5 -2M635 672l3 -0M672 676l4 -2M656 705l2 -0M719 747l3 -1M648 651l5 -2M639 721l3 -1M661 652l2 -1M656 756l2 -1M678 749l2 -1M714 658l3 -0M714 748l5 -2M642 655l4 -1M653 757l4 -1M695 658l2 -1M719 670l5 -1M713 659l5 -0M661 718l5 -1M728 656l6 -1" stroke="#000" stroke-width="1.0" fill="none" opacity="1.0"/>
<path d="M694 704l4 -1M671 729l4 -1M725 726l5 -0M695 672l6 -1M636 703l3 -1M723 718l2 -0M671 727l6 -1M724 745l4 -1M656 706l2 -1M727 675l4 -0M646 708l2 -1M692 647l3 -0M695 647l3 -2M693 723l3 -1M660 662l5 -1M715 752l2 -0M687 674l4 -0M674 720l2 -1M726 758l5 -1M645 665l4 -2M702 702l2 -0M640 723l4 -2M663 727l4 -1M719 658l5 -2M689 747l2 -0M667 718l4 -1M701 721l3 -2M708 690l3 -1M657 680l4 -1M723 706l2 -0M639 697l4 -1M703 700l5 -2M672 738l2 -0M653 699l2 -0" stroke="#6500ff" stroke-width="1.0" fill="none" opacity="1.0"/>
<path d="M803 708l3 -0M857 695l5 -0M948 682l4 -0M951 683l3 -2M812 665l4 -0M826 690l6 -1M912 662l6 -0M843 670l6 -1M783 696l3 -1M962 701l4 -1M873 652l5 -1M921 665l3 -1M789 675l5 -2M821 704l3 -1M791 682l6 -0M801 665l5 -0M945 692l5 -2M805 680l5 -1M849 677l6 -0M964 676l3 -1M793 699l5 -1M833 682l5 -3" stroke="#000" stroke-width="1.0" fill="none" opacity="1.0"/>
<path d="M937 671l5 -1M833 655l3 -0M834 658l5 -1M802 674l6 -1M915 705l5 -3M857 691l4 -1M790 688l6 -1M873 652l5 -2M873 648l5 -1M807 709l4 -1M801 711l3 -1M783 718l2 -1M785 672l4 -2M861 657l2 -1M912 682l3 -0M909 708l5 -1M788 652l3 -1M945 685l4 -2M830 689l4 -2M869 650l5 -1M870 686l3 -1M965 693l6 -0M803 672l4 -2M818 655l4 -1M829 705l4 -1M970 648l5 -2M891 650l4 -1M791 731l3 -1M784 704l5 -0M907 677l4 -2M839 657l5 -2M911 700l2 -1M904 667l6 -1M829 720l4 -0M856 702l3 -2" stroke="#3000a0" stroke-width="1.0" fill="none" opacity="1.0"/>
<path d="M946 677l4 -1M906 646l2 -1M967 684l3 -1M782 692l4 -1M791 679l4 -0M881 665l4 -1M876 655l3 -1M825 724l3 -1M909 657l5 -1M924 676l3 -0M864 648l2 -1M873 710l3 -1M853 687l5 -2M967 672l3 -1M804 709l3 -0M824 675l2 -0M843 649l4 -1M821 671l2 -1M857 649l2 -1M820 691l3 -0M787 708l3 -0M786 658l4 -2M809 671l4 -1M867 691l3 -0M784 682l5 -1M833 658l3 -0M794 728l2 -1M923 671l3 -2M823 710l3 -1M846 655l2 -0M896 709l5 -3M832 677l3 -1M801 728l5 -1" stroke="#6500ff" stroke-width="1.0" fill="none" opacity="1.0"/>
</g>
<rect x="511.5" y="224.5" width="1001" height="558" rx="2" fill="none" stroke="#ff1e0e" stroke-width="3"/></svg><!-- /CLOUD -->
</div>
<div class="abs" style="left:483px;top:825px;width:1062px;height:1px;background:#fff"></div>
<div class="abs" style="left:481px;top:831px;width:1064px;height:3px;background:#d3d8df"></div>
<!-- ICONSTOP --><svg width="1545" height="834" viewBox="0 0 1545 834" style="position:absolute;left:0;top:0;pointer-events:none">
<defs>
<linearGradient id="sph" x1="0" y1="0" x2="0.3" y2="1"><stop offset="0" stop-color="#7cc0d4"/><stop offset="1" stop-color="#1f6a82"/></linearGradient>
<radialGradient id="eyeg" cx="0.5" cy="0.5" r="0.5"><stop offset="0.62" stop-color="#fff"/><stop offset="0.8" stop-color="#8a8a8a"/><stop offset="1" stop-color="#9a9a9a" stop-opacity="0.6"/></radialGradient>
<g id="eye"><ellipse cx="0" cy="0" rx="6.8" ry="4.7" fill="url(#eyeg)"/><ellipse cx="0" cy="0" rx="2.9" ry="2.3" fill="#000"/></g>
<g id="pano">
<path d="M1.5 7 V20 A12 4 0 0 0 25.5 20 V7" fill="#9bbcc7" stroke="#5a98a8" stroke-width="1.3"/>
<ellipse cx="13.5" cy="7" rx="12" ry="3.6" fill="#b4ced6" stroke="#5a98a8" stroke-width="1.3"/>
<rect x="9.5" y="1" width="8" height="8" fill="#dfe3e6"/>
<text x="13.5" y="7" font-size="6.2" font-weight="bold" fill="#1d4f88" text-anchor="middle" font-family="Liberation Sans">360</text>
<path d="M4 21.5 L9 16 L12 19 L17 13 L23 21.5 A12 3.2 0 0 1 4 21.5Z" fill="#fff"/>
<circle cx="21" cy="13" r="1.9" fill="#fff"/>
</g>
<g id="doc123">
<path d="M0.75 0.75 H12.5 L18.5 6.7 V20.25 H0.75Z" fill="#fff" stroke="#2b5574" stroke-width="1.5"/>
<path d="M12.5 0.75 L18.5 6.7 H12.5Z" fill="#3a6685"/>
<text x="2.3" y="6.3" font-size="5.5" font-weight="bold" fill="#e8823a" font-family="Liberation Sans">1</text>
<text x="13.8" y="12.4" font-size="5.5" font-weight="bold" fill="#e8823a" font-family="Liberation Sans">2</text>
<text x="2.6" y="18.6" font-size="5.5" font-weight="bold" fill="#e8823a" font-family="Liberation Sans">3</text>
<path d="M6 4.3 L11.5 7.8 M13.5 12.8 L7.3 16.2" stroke="#2b5574" stroke-width="1"/>
<path d="M12.3 8.5 L9.4 8.3 L11.2 6.1Z M6.5 16.7 L9.3 15.3 L9.6 17.4Z" fill="#2b5574"/>
</g>
<g id="dashbox"><rect x="0.5" y="0.5" width="100" height="100" fill="#d6e6f5" stroke="#0d3a6a" stroke-width="1.2" stroke-dasharray="2.2 1.6"/></g>
</defs>
<!-- separators highlight -->
<rect x="181" y="45" width="1" height="96" fill="#fbfbfb"/>
<rect x="1292" y="45" width="1" height="96" fill="#fbfbfb"/>
<!-- new (partial) -->
<path d="M-10 65.8 H1 L3.2 68 V79.2 H-10Z" fill="#fff" stroke="#2d4e66" stroke-width="1.4"/>
<!-- open -->
<path d="M38 60.1 H48.9 L49.3 62.4 H59 V66 H41 L37.3 78.7 H36.1 Z" fill="#3a6680"/>
<path d="M40.2 64.2 H59.8 L60.8 66 H41.6 L38 78 H37 Z" fill="#fff"/>
<path d="M41.6 65.9 H61 L57.1 78.7 H37.3Z" fill="#5b98a8"/>
<!-- save -->
<path d="M90.1 57.8 H107.2 L111 61.7 V78.7 H90.1Z" fill="#6cbcf8"/>
<rect x="92" y="60.1" width="15" height="6.6" fill="#fff"/>
<rect x="102.1" y="61.3" width="1.8" height="5.4" fill="#2c5a9a"/>
<circle cx="100" cy="72.1" r="3.1" fill="#3f6aa8"/>
<!-- close -->
<rect x="143.1" y="58.1" width="19.9" height="19.9" fill="#dc3650"/>
<path d="M148 63.3 L158 73 M158 63.3 L148 73" stroke="#fff" stroke-width="2"/>
<!-- 一键处理 -->
<use href="#doc123" x="213" y="57"/>
<!-- 批处理 -->
<path d="M288.9 55.5 H299.6 L306.6 62.5 V75 H288.9Z" fill="#fff" stroke="#2b5574" stroke-width="1.2"/>
<path d="M286.7 57.5 H297.4 L304.4 64.5 V77 H286.7Z" fill="#fff" stroke="#2b5574" stroke-width="1.2"/>
<use href="#doc123" x="284" y="59"/>
<!-- 点云建图 -->
<path d="M354 76.7 L358.3 65.7 L364.7 68.9 L373.3 65.3 L381.1 67.1 L386.1 80.6 L373.3 77.3 L364.4 80.3Z" fill="#a3c6ce" stroke="#5a9aa8" stroke-width="1.3" stroke-linejoin="round"/>
<path d="M356.5 75.5 L364.5 78 L373.3 74.5 L383.5 77.5 L381 70 L373.3 72 L364.6 74.6 L358.5 71Z" fill="#fff"/>
<g>
<circle cx="355.5" cy="57.1" r="1.45" fill="#2a1a5a"/><circle cx="356.6" cy="61.4" r="1.45" fill="#2a1a5a"/><circle cx="359.4" cy="65.3" r="1.45" fill="#2a1a5a"/><circle cx="362.3" cy="68.5" r="1.45" fill="#2a1a5a"/>
<circle cx="359.4" cy="56.4" r="1.45" fill="#7a1a3a"/><circle cx="361.5" cy="60.5" r="1.45" fill="#7a1a3a"/><circle cx="364.4" cy="63.4" r="1.45" fill="#7a1a3a"/><circle cx="367.4" cy="66.6" r="1.45" fill="#7a1a3a"/>
<circle cx="363.3" cy="57.1" r="1.45" fill="#c83a3a"/><circle cx="365.4" cy="60.5" r="1.45" fill="#c83a3a"/><circle cx="368.6" cy="63.2" r="1.45" fill="#c83a3a"/><circle cx="371.5" cy="67.3" r="1.45" fill="#c83a3a"/>
<circle cx="368.4" cy="56.3" r="1.45" fill="#d85a3a"/><circle cx="370.6" cy="59.3" r="1.45" fill="#d85a3a"/><circle cx="373.3" cy="62.5" r="1.45" fill="#d85a3a"/><circle cx="376.5" cy="65.3" r="1.45" fill="#d85a3a"/>
<circle cx="372.6" cy="58.4" r="1.45" fill="#e89a3a"/><circle cx="375.4" cy="61.2" r="1.45" fill="#e89a3a"/><circle cx="378.6" cy="63.5" r="1.45" fill="#e89a3a"/><circle cx="380.4" cy="67.4" r="1.45" fill="#e89a3a"/>
<circle cx="377.5" cy="58.2" r="1.45" fill="#f0c050"/><circle cx="380.5" cy="60.5" r="1.45" fill="#f0c050"/><circle cx="384.5" cy="61.4" r="1.45" fill="#f0c050"/><circle cx="384.5" cy="65.3" r="1.45" fill="#f0c050"/>
</g>
<!-- 重定向 -->
<rect x="443.5" y="54.5" width="13" height="13" fill="#d6e6f5" stroke="#0d3a6a" stroke-width="1.2" stroke-dasharray="2.2 1.6"/>
<rect x="429.5" y="69.5" width="12" height="12" fill="#8fb8c4" stroke="#5f9aaa" stroke-width="1.3"/>
<path d="M432 79 L435.5 75.5 V71.5 M435.5 75.5 H440" stroke="#173f5f" stroke-width="1.1" fill="none"/>
<path d="M439 71.5 L449.5 61" stroke="#fff" stroke-width="2.6"/>
<path d="M439 71.5 L448.5 62" stroke="#e8732a" stroke-width="1.3"/>
<path d="M450.5 60 L446 61.3 L449.2 64.5Z" fill="#e8732a"/>
<!-- 行人滤波 -->
<rect x="500.5" y="56.5" width="29" height="23" fill="#d6e6f5" stroke="#0d3a6a" stroke-width="1.2" stroke-dasharray="2.2 1.6"/>
<circle cx="512.4" cy="62.8" r="2.3" fill="#8ab6c4" stroke="#5a9aa8" stroke-width="0.8"/>
<path d="M504.5 66.2 L508.6 65.6 L510.8 66.6 L509 71 L512 73.5 L510.5 76.5 M508.8 71.2 L506.5 73.8 L503.5 74.2 M510.8 66.6 L514 66.3 L515.5 64.8" stroke="#5a9aa8" stroke-width="1.2" fill="none"/>
<rect x="515.5" y="66.5" width="12" height="4" rx="1" fill="#9cc0cc" stroke="#5a9aa8" stroke-width="0.8"/>
<rect x="515" y="70" width="13" height="5" rx="1" fill="#8ab6c4" stroke="#5a9aa8" stroke-width="0.8"/>
<path d="M516.5 75 V76.5 M526.5 75 V76.5" stroke="#5a9aa8" stroke-width="1.2"/>
<circle cx="526.4" cy="59.3" r="5.2" fill="#fff"/>
<circle cx="526.4" cy="59.3" r="4.1" fill="#e06a1a"/>
<path d="M524.5 57.4 L528.3 61.2 M528.3 57.4 L524.5 61.2" stroke="#fff" stroke-width="1"/>
<!-- 点云优化 -->
<g fill="#8a969c">
<circle cx="587.5" cy="57.4" r="1.5"/><circle cx="597.6" cy="57.4" r="1.5"/><circle cx="605.3" cy="58.4" r="1.5"/><circle cx="584.4" cy="61.5" r="1.5"/><circle cx="591.4" cy="60.3" r="1.5"/><circle cx="596.4" cy="62.4" r="1.5"/><circle cx="601.5" cy="61.5" r="1.5"/>
<circle cx="583.4" cy="73.5" r="1.5"/><circle cx="592.5" cy="73.3" r="1.5"/><circle cx="599.4" cy="74.5" r="1.5"/><circle cx="604.3" cy="73.3" r="1.5"/><circle cx="588.4" cy="76.4" r="1.5"/><circle cx="595.4" cy="77.3" r="1.5"/><circle cx="602.5" cy="77.3" r="1.5"/>
</g>
<g fill="#f08a1a"><circle cx="584.4" cy="65.4" r="1.55"/><circle cx="589.4" cy="66.5" r="1.55"/><circle cx="593.3" cy="65.4" r="1.55"/><circle cx="598.3" cy="66.5" r="1.55"/><circle cx="602.5" cy="65.4" r="1.55"/></g>
<g fill="#e84a20"><circle cx="586.3" cy="69.4" r="1.55"/><circle cx="594.5" cy="69.4" r="1.55"/><circle cx="600.5" cy="69.4" r="1.55"/><circle cx="606.3" cy="68.5" r="1.55"/></g>
<!-- 去畸变 -->
<rect x="656.5" y="55.5" width="25" height="25" fill="#d6e6f5" stroke="#0d3a6a" stroke-width="1.2" stroke-dasharray="2.2 1.6"/>
<path d="M661.5 60.3 H673.5 A3 3 0 0 1 676.5 63.3 V75.5 H661.5Z" fill="#98bfcf" stroke="#5a95a5" stroke-width="1"/>
<!-- 点云赋色 -->
<g>
<circle cx="729.4" cy="63.3" r="2.5" fill="#8a969c"/><circle cx="735.1" cy="67.2" r="2.5" fill="#8a969c"/><circle cx="730.5" cy="72.5" r="2.5" fill="#8a969c"/>
<circle cx="737.2" cy="59.4" r="2.5" fill="#f0c020"/><circle cx="741.5" cy="64.3" r="2.5" fill="#e8c828"/>
<circle cx="747.3" cy="61.4" r="2.5" fill="#f08a20"/><circle cx="752.4" cy="68.3" r="2.5" fill="#e03040"/>
<circle cx="746.5" cy="68.3" r="2.5" fill="#3050c0"/><path d="M744 68.3 A2.5 2.5 0 0 1 749 68.3Z" fill="#e03030"/>
<circle cx="738.7" cy="73.4" r="2.5" fill="#30c070"/><circle cx="747.3" cy="74.4" r="2.5" fill="#1a6ad0"/>
<rect x="735.8" y="53.8" width="1.3" height="28.2" fill="#0d3a5a"/>
</g>
<!-- 全景图生成 -->
<use href="#pano" x="817.5" y="57"/>
<!-- 去除噪声 -->
<g>
<g fill="none" stroke="#9aa4a8" stroke-width="0.8"><circle cx="910.5" cy="62.5" r="2.2"/><circle cx="935.3" cy="69.4" r="2.2"/><circle cx="911.4" cy="74.4" r="2.2"/>
<path d="M909 61 L912 64 M912 61 L909 64 M933.8 67.9 L936.8 70.9 M936.8 67.9 L933.8 70.9 M909.9 72.9 L912.9 75.9 M912.9 72.9 L909.9 75.9"/></g>
<circle cx="918.5" cy="59.4" r="2.5" fill="#7a1a8a"/><circle cx="922.5" cy="65.4" r="2.5" fill="#c02a9a"/><circle cx="929.4" cy="63.3" r="2.5" fill="#d84020"/>
<circle cx="916.4" cy="68.3" r="2.5" fill="#3a5ac0"/><circle cx="927.3" cy="70.2" r="2.5" fill="#e88a2a"/><circle cx="920.4" cy="74.4" r="2.5" fill="#1a2a2a"/><circle cx="929.4" cy="76.5" r="2.5" fill="#7ab050"/>
</g>
<!-- 点云分幅 -->
<rect x="990" y="53.8" width="29" height="27.2" fill="#f4f6f8"/>
<g>
<circle cx="993.3" cy="60" r="1.5" fill="#e8a010"/><circle cx="997.3" cy="55.6" r="1.5" fill="#e8c010"/><circle cx="1001" cy="56.3" r="1.5" fill="#d8d810"/><circle cx="992.8" cy="59.2" r="1.5" fill="#e8a010"/>
<circle cx="995.4" cy="60.5" r="1.5" fill="#e8a810"/><circle cx="999.5" cy="59" r="1.5" fill="#e8c010"/><circle cx="998.4" cy="62.5" r="1.5" fill="#e8a810"/><circle cx="992.5" cy="63.4" r="1.5" fill="#e8a010"/><circle cx="1001" cy="64.5" r="1.5" fill="#e8c010"/><circle cx="996.4" cy="65.5" r="1.5" fill="#e8a010"/>
<circle cx="1008" cy="55.6" r="1.5" fill="#80d820"/><circle cx="1012.5" cy="55.6" r="1.5" fill="#50c830"/><circle cx="1007.5" cy="58.5" r="1.5" fill="#80d820"/><circle cx="1016.5" cy="58.5" r="1.5" fill="#30c040"/>
<circle cx="1006.5" cy="61.5" r="1.5" fill="#c0e020"/><circle cx="1010.5" cy="62.5" r="1.5" fill="#30c040"/><circle cx="1014.5" cy="60.5" r="1.5" fill="#30c040"/><circle cx="1008.5" cy="65.5" r="1.5" fill="#30c040"/><circle cx="1013.5" cy="65.5" r="1.5" fill="#20b080"/><circle cx="1016.5" cy="63.5" r="1.5" fill="#20b080"/>
<circle cx="994.5" cy="69.5" r="1.5" fill="#f08a20"/><circle cx="1001.5" cy="69.5" r="1.5" fill="#f08a20"/><circle cx="991.5" cy="72.5" r="1.5" fill="#f08a20"/><circle cx="997.5" cy="71.5" r="1.5" fill="#f08a20"/>
<circle cx="995.5" cy="74.5" r="1.5" fill="#f07020"/><circle cx="1000.5" cy="73.5" r="1.5" fill="#e84040"/><circle cx="992.5" cy="76.5" r="1.5" fill="#f06020"/><circle cx="1002.5" cy="76.5" r="1.5" fill="#c02050"/><circle cx="994.5" cy="79.5" r="1.5" fill="#e84040"/><circle cx="998.5" cy="78.5" r="1.5" fill="#e84040"/>
<circle cx="1007.5" cy="69.5" r="1.5" fill="#1a60c8"/><circle cx="1013.5" cy="71.5" r="1.5" fill="#2080d8"/><circle cx="1017.5" cy="72.5" r="1.5" fill="#2080d8"/><circle cx="1006.5" cy="74.5" r="1.5" fill="#1a50b8"/>
<circle cx="1010.5" cy="73.5" r="1.5" fill="#1a60c8"/><circle cx="1014.5" cy="75.5" r="1.5" fill="#1a60c8"/><circle cx="1017.5" cy="77.5" r="1.5" fill="#1a60c8"/><circle cx="1009.5" cy="78.5" r="1.5" fill="#1a50b8"/><circle cx="1013.5" cy="79.5" r="1.5" fill="#1a50b8"/>
</g>
<rect x="1004" y="53.8" width="1.1" height="27.2" fill="#6a8090"/><rect x="990" y="67" width="29" height="1.1" fill="#6a8090"/>
<!-- 拼接转换 -->
<path d="M1084.4 58.4 L1091.6 55.2 L1098.9 56.6 L1097 63.9 L1085.2 64.7Z" fill="#aed0ec" stroke="#5a9ab0" stroke-width="0.8"/>
<path d="M1074.7 67.7 L1085.7 76.8 L1076.4 81.1 L1069.7 76.5Z" fill="#e8925a" stroke="#d07a40" stroke-width="0.8"/>
<path d="M1097 63.5 C1101.5 66 1101.5 70 1097 73 C1094 75 1090 76 1087.2 76.8" stroke="#1d4a6a" stroke-width="1.6" fill="none"/>
<path d="M1089.2 71 L1087.2 76.8 L1093.2 78.2" stroke="#1d4a6a" stroke-width="1.6" fill="none"/>
<!-- 点云裁切 -->
<rect x="1156.5" y="60" width="19" height="15.5" fill="#e4e9ee"/>
<rect x="1152.1" y="58" width="21.9" height="1.8" fill="#0f6a8a"/><rect x="1155" y="55" width="1.8" height="3" fill="#0f6a8a"/>
<rect x="1175.3" y="58" width="1.8" height="14" fill="#0f6a8a"/>
<rect x="1155" y="62.2" width="1.8" height="14.8" fill="#4a90a8"/><rect x="1158" y="75" width="22" height="1.8" fill="#4a90a8"/><rect x="1175.3" y="76.8" width="1.8" height="3.1" fill="#4a90a8"/>
<g fill="#7a8288"><rect x="1164.5" y="63" width="1.4" height="1.4"/><rect x="1162.3" y="65.3" width="1.4" height="1.4"/><rect x="1162.3" y="68.2" width="1.4" height="1.4"/><rect x="1165.3" y="69.2" width="1.4" height="1.4"/></g>
<g fill="#a8b0b6"><rect x="1167.3" y="64.2" width="1.4" height="1.4"/><rect x="1165.5" y="66.2" width="1.4" height="1.4"/><rect x="1168.3" y="67.2" width="1.4" height="1.4"/><rect x="1168.3" y="70.2" width="1.4" height="1.4"/></g>
<!-- 取消处理 -->
<path d="M1241.7 57.6 H1253.1 L1259.3 63.8 V77.2 H1241.7Z" fill="#fff" stroke="#2d5878" stroke-width="1"/>
<path d="M1253.1 57.6 L1259.3 63.8 H1253.1Z" fill="#3d6a8a"/>
<circle cx="1255.6" cy="72.5" r="7.2" fill="#fff"/>
<circle cx="1255.6" cy="72.5" r="5.7" fill="#ff6a00"/>
<path d="M1252.4 69.3 L1258.8 75.7 M1258.8 69.3 L1252.4 75.7" stroke="#fff" stroke-width="0.9"/>

<rect x="481" y="179" width="1" height="655" fill="#a9b4bc"/><rect x="482" y="179" width="1" height="25" fill="#f4f5f6"/><rect x="482" y="825" width="1" height="9" fill="#f4f5f6"/>
<!-- dock float icon -->
<rect x="462.5" y="154" width="5.5" height="5" fill="#fff" stroke="#000" stroke-width="1.6"/>
<rect x="465" y="151.5" width="5" height="4.5" fill="none" stroke="#000" stroke-width="1.6"/>
<rect x="462.5" y="154" width="5.5" height="5" fill="#fff" stroke="#000" stroke-width="1.6"/>

<!-- tree arrows & eyes -->
<path d="M0 205.5 H5.8 L2.9 211.5Z" fill="#111"/>
<path d="M0 331 L5.5 335 L0 339Z" fill="#111"/>
<path d="M0 408.5 L5.5 412.5 L0 416.5Z" fill="#111"/>
<use href="#eye" x="1" y="183.5"/>
<use href="#eye" x="26" y="209"/>
<use href="#eye" x="51" y="234"/>
<use href="#eye" x="51" y="259"/>
<use href="#eye" x="51" y="283.5"/>
<use href="#eye" x="51" y="308.5"/>
<use href="#eye" x="26" y="335.3"/>
<use href="#eye" x="26" y="361"/>
<use href="#eye" x="26" y="386.6"/>
<use href="#eye" x="26" y="412.5"/>

<!-- toolbar grippers -->
<g fill="#fff"><rect x="485.5" y="149" width="2" height="26" /></g>
<g fill="#8c949a">
<rect x="486" y="150" width="1.6" height="1.6"/><rect x="486" y="153.6" width="1.6" height="1.6"/><rect x="486" y="157.2" width="1.6" height="1.6"/><rect x="486" y="160.8" width="1.6" height="1.6"/><rect x="486" y="164.4" width="1.6" height="1.6"/><rect x="486" y="168" width="1.6" height="1.6"/><rect x="486" y="171.6" width="1.6" height="1.6"/>
<rect x="759.5" y="150" width="1.6" height="1.6"/><rect x="759.5" y="153.6" width="1.6" height="1.6"/><rect x="759.5" y="157.2" width="1.6" height="1.6"/><rect x="759.5" y="160.8" width="1.6" height="1.6"/><rect x="759.5" y="164.4" width="1.6" height="1.6"/><rect x="759.5" y="168" width="1.6" height="1.6"/><rect x="759.5" y="171.6" width="1.6" height="1.6"/>
<rect x="884" y="150" width="1.6" height="1.6"/><rect x="884" y="153.6" width="1.6" height="1.6"/><rect x="884" y="157.2" width="1.6" height="1.6"/><rect x="884" y="160.8" width="1.6" height="1.6"/><rect x="884" y="164.4" width="1.6" height="1.6"/><rect x="884" y="168" width="1.6" height="1.6"/><rect x="884" y="171.6" width="1.6" height="1.6"/>
</g>
<!-- toolbar section dividers -->
<rect x="754" y="147" width="1" height="31" fill="#fff"/><rect x="753" y="147" width="1" height="31" fill="#b8c0c6"/>
<rect x="879" y="147" width="1" height="31" fill="#fff"/><rect x="878" y="147" width="1" height="31" fill="#b8c0c6"/>

<!-- zoom in -->
<circle cx="511.2" cy="161.5" r="7.3" fill="#fff" stroke="#2d5570" stroke-width="1.3"/>
<circle cx="511.2" cy="161.5" r="5.1" fill="#e0600f"/>
<path d="M508.2 161.5 H514.2 M511.2 158.5 V164.5" stroke="#fff" stroke-width="1.2"/>
<path d="M516 166.5 L519.8 170.4" stroke="#2d5570" stroke-width="2"/>
<!-- zoom out -->
<circle cx="548.2" cy="161.5" r="7.3" fill="#fff" stroke="#2d5570" stroke-width="1.3"/>
<circle cx="548.2" cy="161.5" r="5.1" fill="#6cbcf8"/>
<path d="M545.2 161.5 H551.2" stroke="#fff" stroke-width="1.2"/>
<path d="M553 166.5 L556.8 170.4" stroke="#2d5570" stroke-width="2"/>
<!-- hand -->
<path d="M580 161 V157.5 A1.2 1.2 0 0 1 582.6 157.5 V162 V154.5 A1.3 1.3 0 0 1 585.2 154.5 V161.5 V153 A1.3 1.3 0 0 1 587.8 153 V161.5 V155.6 A1.3 1.3 0 0 1 590.4 155.6 V163.8 L592 161.5 A1.2 1.2 0 0 1 594 162.8 L590.5 168.5 A5.5 5.5 0 0 1 586 171 A6 6 0 0 1 580 166Z" fill="#fff" stroke="#2d5570" stroke-width="1.1" stroke-linejoin="round"/>
<!-- fit -->
<path d="M614.7 157.5 V154.2 H618.5 M629.3 154.2 H633.1 V157.5 M633.1 166.3 V169.6 H629.3 M618.5 169.6 H614.7 V166.3" stroke="#2d4e66" stroke-width="1.5" fill="none"/>
<rect x="618.1" y="157" width="11.8" height="9.6" fill="#5b98a8"/>
<!-- orbit -->
<ellipse cx="660.4" cy="161.8" rx="10.6" ry="5.4" fill="#fff" stroke="#e03050" stroke-width="1.1"/>
<ellipse cx="660.4" cy="161.8" rx="5.4" ry="9.9" fill="none" stroke="#3a8aa8" stroke-width="1"/>
<ellipse cx="660.4" cy="161.8" rx="3.6" ry="1.7" fill="#f07010"/>
<!-- rotate -->
<ellipse cx="697.6" cy="162.7" rx="8.3" ry="3.9" fill="#fff"/>
<path d="M689.3 162.7 A8.3 4.2 0 0 0 705.9 162.7 A8 4 0 0 0 703 159" stroke="#e03050" stroke-width="1" fill="none"/>
<ellipse cx="697.6" cy="162.7" rx="3.4" ry="1.5" fill="#f07010"/>
<path d="M697.6 154.9 L705 156.7 L702.2 160.9Z" fill="#e03050"/>
<!-- 2D -->
<path d="M733.9 151.9 L743.4 157.2 V167.4 L733.9 172.6 L724.4 167.4 V157.2Z" fill="none" stroke="#2a6ab0" stroke-width="1.1"/>
<text x="734" y="166.6" font-size="10" font-weight="bold" fill="#d83050" text-anchor="middle" font-family="Liberation Sans">2D</text>
<!-- crosshair -->
<path d="M778.1 161.5 H782.8 M787.1 161.5 H791.9" stroke="#e87a30" stroke-width="1.3"/>
<path d="M785.1 154.4 V158.8 M785.1 164.2 V168.5" stroke="#e8a070" stroke-width="1.3"/>
<!-- measure -->
<text x="822.3" y="162.8" font-size="14" fill="#4a95b0" text-anchor="middle" font-family="Liberation Sans">m</text>
<path d="M814 164.2 V168.5 H832 V164.2" stroke="#5a7a90" stroke-width="1.2" fill="none"/>
<rect x="814.5" y="166.3" width="17" height="1.3" fill="#4a9ab0"/>
<!-- cube -->
<path d="M852 160 L857 155.1 H867.5 V165.5 L862.5 170.5" fill="#e8ecf0" stroke="none"/>
<rect x="852" y="160.1" width="10.5" height="10.4" fill="#eef1f4" stroke="#707070" stroke-width="1"/>
<path d="M852 160.1 L857 155.1 H867.5 L862.5 160.1 M867.5 155.1 V165.5 L862.5 170.5" stroke="#707070" stroke-width="1" fill="none"/>
<path d="M849.4 171.9 L857 165" stroke="#e84060" stroke-width="0.8"/>
<circle cx="849.4" cy="171.9" r="1.2" fill="#e02040"/>
<circle cx="862.9" cy="159.8" r="1.4" fill="#f07010"/>
<circle cx="869.3" cy="165.9" r="1.1" fill="#4040c0"/>
<rect x="856.3" y="151.5" width="1.3" height="2.2" fill="#4a9ab0"/>
<!-- T -->
<rect x="901.6" y="153.3" width="17.7" height="7.1" fill="#c0d4dc" stroke="#3d6a85" stroke-width="1.1"/>
<rect x="908.2" y="160.9" width="4.6" height="10" fill="#c0d4dc" stroke="#3d6a85" stroke-width="1.1"/>
<path d="M903 157 H918" stroke="#6a8ea0" stroke-width="0.8" stroke-dasharray="1 0.6"/>
<!-- sphere cube -->
<circle cx="946.7" cy="161.9" r="7.9" fill="url(#sph)"/>
<path d="M937.6 157.7 L942 153.3 H956 V166.8 L951.4 171.1 H937.6Z M937.6 157.7 H951.4 V171.1 M951.4 157.7 L956 153.3" fill="none" stroke="#505050" stroke-width="1"/>
<!-- pano toolbar -->
<g transform="translate(972.5 151.8) scale(0.88)"><use href="#pano"/></g>
</svg>
<!-- /ICONSTOP -->
</body></html>
